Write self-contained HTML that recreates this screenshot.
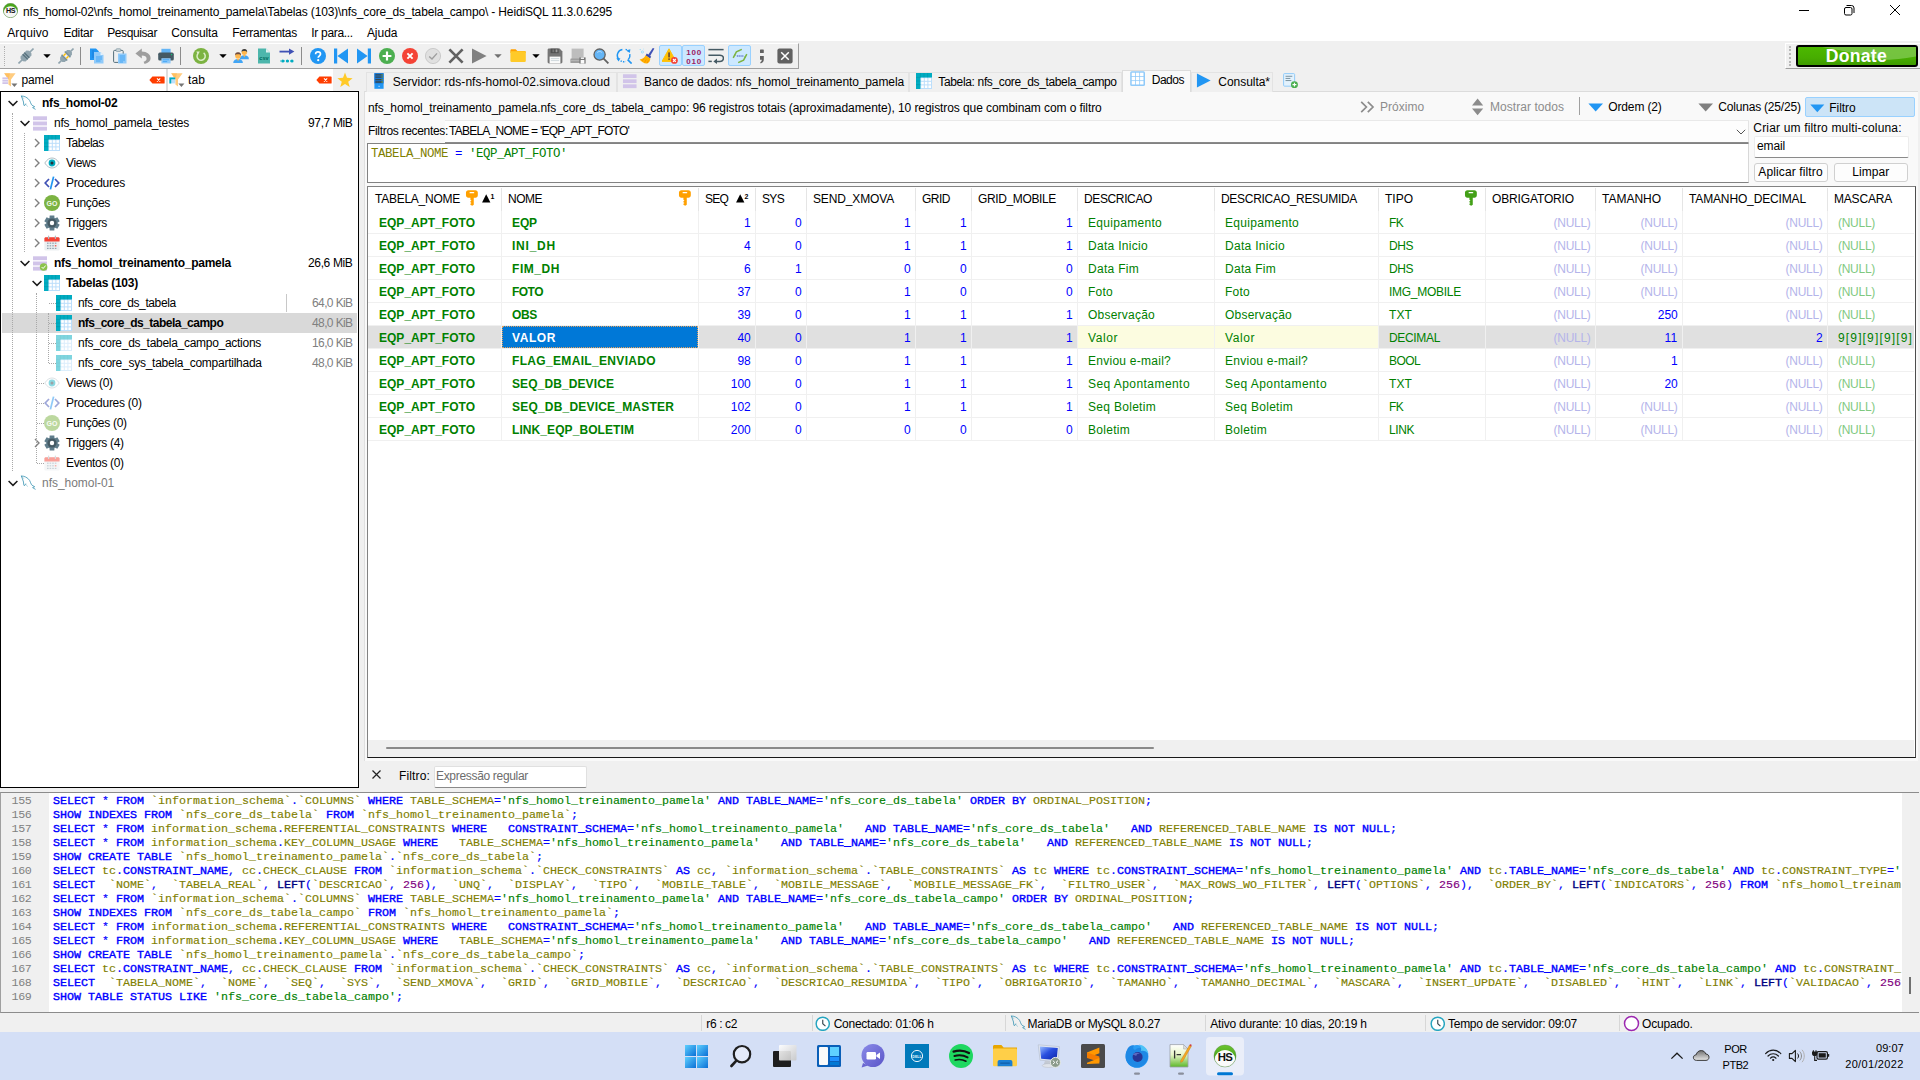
<!DOCTYPE html>
<html><head><meta charset="utf-8"><title>HeidiSQL</title>
<style>
html,body{margin:0;padding:0;}
body{width:1920px;height:1080px;overflow:hidden;background:#f0f0f0;position:relative;font-family:'Liberation Sans', sans-serif;}
.b{position:absolute;}
.t{position:absolute;white-space:pre;}
</style></head><body>
<div class="b" style="left:0px;top:0px;width:1920px;height:41px;background:#ffffff;"></div>
<svg class="b" style="left:2.8px;top:3.2px;" width="15" height="15" viewBox="0 0 16 16"><clipPath id="hsc2"><circle cx="8" cy="8" r="7.7"/></clipPath><circle cx="8" cy="8" r="7.7" fill="#4aa61c"/><g clip-path="url(#hsc2)"><ellipse cx="8" cy="10" rx="7.2" ry="6.6" fill="#f6f6f6"/></g><circle cx="8" cy="8" r="7.7" fill="none" stroke="#5a8a4a" stroke-width=".5"/><text x="8" y="11" font-family="Liberation Sans, sans-serif" font-size="7.6" font-weight="700" fill="#111" text-anchor="middle" letter-spacing="-.4">HS</text></svg>
<svg class="b" style="left:1795px;top:0px;" width="120" height="22" viewBox="0 0 120 22"><path d="M4 10.5h10" stroke="#000" stroke-width="1" fill="none"/><rect x="49.5" y="7.5" width="7.5" height="7.5" rx="1.5" stroke="#000" stroke-width="1" fill="none"/><path d="M51.5 5.5 H56.5 Q59 5.5 59 8 V13" stroke="#000" stroke-width="1" fill="none"/><path d="M95 5l10 10M105 5l-10 10" stroke="#000" stroke-width="1" fill="none"/></svg>
<div class="b" style="left:0px;top:41px;width:1920px;height:29px;background:#f0f0f0;"></div>
<div class="b" style="left:0px;top:68px;width:799px;height:1px;background:#a0a0a0;"></div>
<div class="b" style="left:0px;top:43px;width:799px;height:26px;background:#f0f0f0;border-right:1px solid #a0a0a0;border-bottom:1px solid #a0a0a0;border-top:1px solid #fff;box-sizing:border-box;"></div>
<div class="b" style="left:4px;top:46px;width:1px;height:20px;border-left:1px dotted #b0b0b0;"></div>
<svg class="b" style="left:18px;top:48px;" width="16" height="16" viewBox="0 0 16 16"><g transform="rotate(-45 8 8)"><rect x="-2.6" y="7.2" width="6" height="1.6" fill="#90a4ae"/><rect x="12.6" y="7.2" width="6" height="1.6" fill="#90a4ae"/><path d="M2 6.4 L3.8 4.4 H12.2 L14 6.4 V9.6 L12.2 11.6 H3.8 L2 9.6Z" fill="#90a4ae"/><rect x="6.3" y="4.4" width="1.2" height="7.2" fill="#546e7a"/><rect x="8.5" y="4.4" width="1.2" height="7.2" fill="#546e7a"/></g></svg>
<svg class="b" style="left:58px;top:48px;" width="16" height="16" viewBox="0 0 16 16"><g transform="rotate(-45 8 8)"><rect x="-2.6" y="7.2" width="6" height="1.6" fill="#90a4ae"/><rect x="12.6" y="7.2" width="6" height="1.6" fill="#90a4ae"/><path d="M1.2 6.4 L3 4.6 H6.2 V11.4 H3 L1.2 9.6Z" fill="#90a4ae"/><rect x="5" y="4" width="1.5" height="8" fill="#78909c"/><path d="M14.8 6.4 L13 4.6 H9.8 V11.4 H13 L14.8 9.6Z" fill="#90a4ae"/><rect x="9.5" y="4" width="1.5" height="8" fill="#78909c"/><rect x="6.5" y="5.3" width="3" height="1.5" fill="#ffc107"/><rect x="6.5" y="9.2" width="3" height="1.5" fill="#ffc107"/></g></svg>
<svg class="b" style="left:89px;top:48px;" width="16" height="16" viewBox="0 0 16 16"><path d="M1 0.5h6l3 3V12H1z" fill="#2196f3"/><path d="M3 3h2M3 5h2M3 7h2M3 9h2" stroke="#1976d2" stroke-width=".8"/><path d="M5 4h6.5l3 3V15.5H5z" fill="#90caf9"/><path d="M11.5 4v3h3z" fill="#e3f2fd"/><path d="M7 9h6M7 11h6M7 13h4.5" stroke="#42a5f5" stroke-width="1"/></svg>
<svg class="b" style="left:112px;top:48px;" width="16" height="16" viewBox="0 0 16 16"><rect x="1.6" y="2.4" width="9.6" height="12" rx="1" fill="#eceff1" stroke="#546e7a" stroke-width="1"/><rect x="4" y="0.8" width="4.8" height="2.6" rx=".8" fill="#cfd8dc" stroke="#78909c" stroke-width=".7"/><rect x="6" y="5.5" width="8.5" height="10" fill="#90caf9"/><path d="M7.6 8h5.4M7.6 10h5.4M7.6 12h5.4M7.6 14h3.4" stroke="#42a5f5" stroke-width="1"/></svg>
<svg class="b" style="left:135px;top:48px;" width="16" height="16" viewBox="0 0 16 16"><path d="M6.8 0.6 L0.4 5.6 L6.8 10.6 V7.6 C9.8 7.6 11.6 8.8 11.6 10.8 C11.6 12.2 10.6 13.2 8.6 13.8 L9.6 16 C13.4 15 15.6 13 15.6 10.2 C15.6 6.4 12 3.8 6.8 3.6Z" fill="#9e9e9e"/></svg>
<svg class="b" style="left:158px;top:48px;" width="16" height="16" viewBox="0 0 16 16"><rect x="3.4" y="0.8" width="9.2" height="4.4" fill="#64b5f6"/><rect x="0.2" y="4.6" width="15.6" height="8" rx="1.6" fill="#455a64"/><circle cx="13.6" cy="6.6" r=".6" fill="#00e676"/><rect x="3.4" y="9.4" width="9.2" height="6" fill="#90caf9"/><rect x="3" y="9.2" width="10" height="1" fill="#37474f"/><path d="M4.8 11.8h6.4M4.8 13.6h4.4" stroke="#42a5f5" stroke-width=".9"/></svg>
<svg class="b" style="left:193px;top:48px;" width="16" height="16" viewBox="0 0 16 16"><circle cx="8" cy="8" r="8" fill="#7cb342"/><path d="M5.2 5.3 A4.1 4.1 0 1 0 10.6 4.9" fill="none" stroke="#dcedc8" stroke-width="1.5"/><path d="M3.3 3.4 L6.9 3.6 L4.9 6.6Z" fill="#dcedc8"/></svg>
<svg class="b" style="left:233px;top:48px;" width="16" height="16" viewBox="0 0 16 16"><g transform="translate(6.6 0.4) scale(1.08)"><path d="M0.2 10 C0.2 7.4 2 6.4 4.4 6.4 C6.8 6.4 8.6 7.4 8.6 10Z" fill="#42a5f5"/><path d="M3.2 6.2 L4.4 8.2 L5.6 6.2Z" fill="#ffb74d"/><circle cx="4.4" cy="3.6" r="2.5" fill="#ffb74d"/><path d="M1.8 3.4 C1.6 1.2 3 0.4 4.6 0.6 C6.4 0.6 7.2 1.8 7 3.6 C6.4 2.4 5 2.2 4 2.4 C3 2.4 2.2 2.6 1.8 3.4Z" fill="#424242"/></g><g transform="translate(0 3.6) scale(1.15)"><path d="M0.2 10 C0.2 7.4 2 6.4 4.4 6.4 C6.8 6.4 8.6 7.4 8.6 10Z" fill="#42a5f5"/><path d="M3.2 6.2 L4.4 8.2 L5.6 6.2Z" fill="#ffb74d"/><circle cx="4.4" cy="3.6" r="2.5" fill="#ffb74d"/><path d="M1.8 3.4 C1.6 1.2 3 0.4 4.6 0.6 C6.4 0.6 7.2 1.8 7 3.6 C6.4 2.4 5 2.2 4 2.4 C3 2.4 2.2 2.6 1.8 3.4Z" fill="#6d4c41"/></g></svg>
<svg class="b" style="left:256px;top:48px;" width="16" height="16" viewBox="0 0 16 16"><path d="M2 0.5h8l4 4V15.5H2z" fill="#4db6ac"/><path d="M10 0.5v4h4z" fill="#e0f2f1"/><text x="8" y="11.6" font-family="Liberation Sans, sans-serif" font-size="5.6" font-weight="700" fill="#00695c" text-anchor="middle">csv</text></svg>
<svg class="b" style="left:279px;top:48px;" width="16" height="16" viewBox="0 0 16 16"><path d="M0.5 3.6h10.5" stroke="#3f51b5" stroke-width="1.8"/><path d="M10 0.4 L15.4 3.6 L10 6.8Z" fill="#3f51b5"/><path d="M1 13h14" stroke="#00acc1" stroke-width=".8" stroke-dasharray="1 1"/><circle cx="3.8" cy="13" r="1.6" fill="#00acc1"/><circle cx="8.4" cy="13" r="1.6" fill="#00acc1"/><circle cx="13" cy="13" r="1.6" fill="#00acc1"/></svg>
<svg class="b" style="left:310px;top:48px;" width="16" height="16" viewBox="0 0 16 16"><circle cx="8" cy="8" r="8" fill="#2196f3"/><path d="M5.6 6.2 C5.6 4.6 6.6 3.8 8 3.8 C9.5 3.8 10.5 4.7 10.5 6 C10.5 7.8 8.2 7.8 8.2 9.8" fill="none" stroke="#fff" stroke-width="1.7"/><circle cx="8.2" cy="12.2" r="1.1" fill="#fff"/></svg>
<svg class="b" style="left:333px;top:48px;" width="16" height="16" viewBox="0 0 16 16"><rect x="1" y="0.5" width="3.2" height="15" fill="#2196f3"/><path d="M15 0.5V15.5L4.4 8z" fill="#2196f3"/></svg>
<svg class="b" style="left:356px;top:48px;" width="16" height="16" viewBox="0 0 16 16"><rect x="11.8" y="0.5" width="3.2" height="15" fill="#2196f3"/><path d="M1 0.5V15.5L11.6 8z" fill="#2196f3"/></svg>
<svg class="b" style="left:379px;top:48px;" width="16" height="16" viewBox="0 0 16 16"><circle cx="8" cy="8" r="8" fill="#4caf50"/><path d="M8 3.6v8.8M3.6 8h8.8" stroke="#fff" stroke-width="2.2"/></svg>
<svg class="b" style="left:402px;top:48px;" width="16" height="16" viewBox="0 0 16 16"><circle cx="8" cy="8" r="8" fill="#f44336"/><path d="M5.4 5.4l5.2 5.2M10.6 5.4l-5.2 5.2" stroke="#fff" stroke-width="1.9"/></svg>
<svg class="b" style="left:425px;top:48px;" width="16" height="16" viewBox="0 0 16 16"><circle cx="8" cy="8" r="7.6" fill="#e0e0e0" stroke="#bdbdbd" stroke-width=".7"/><path d="M4.2 8.4l2.8 2.6 5-5.6" fill="none" stroke="#9e9e9e" stroke-width="1.4"/></svg>
<svg class="b" style="left:448px;top:48px;" width="16" height="16" viewBox="0 0 16 16"><path d="M1.4 1.4l13.2 13.2M14.6 1.4L1.4 14.6" stroke="#616161" stroke-width="2.7"/></svg>
<svg class="b" style="left:471px;top:48px;" width="16" height="16" viewBox="0 0 16 16"><path d="M1 0.6V15.4L15.6 8z" fill="#808080"/></svg>
<svg class="b" style="left:510px;top:48px;" width="16" height="16" viewBox="0 0 16 16"><path d="M0.4 2.4 C0.4 1.6 1 1.2 1.6 1.2 H5.6 L7.4 3 H14.4 C15.2 3 15.8 3.6 15.8 4.2 V5H0.4z" fill="#ffa000"/><rect x="0.4" y="3.2" width="15.4" height="10.8" rx="1.2" fill="#ffca28"/></svg>
<svg class="b" style="left:547px;top:48px;" width="16" height="16" viewBox="0 0 16 16"><path d="M0.6 2 C0.6 1.2 1.2 0.6 2 0.6 H12.6 L15.4 3.4 V14 C15.4 14.8 14.8 15.4 14 15.4 H2 C1.2 15.4 0.6 14.8 0.6 14z" fill="#757575"/><rect x="3.6" y="0.6" width="8" height="4.6" fill="#505050"/><rect x="5.4" y="1.4" width="1.8" height="2.8" fill="#757575"/><rect x="8.6" y="1.4" width="1.8" height="2.8" fill="#9e9e9e"/><rect x="2.6" y="8.6" width="10.8" height="6.8" fill="#fafafa"/><path d="M3.8 10.6h8.4M3.8 12.6h8.4" stroke="#cfd8dc" stroke-width="1"/></svg>
<svg class="b" style="left:570px;top:48px;" width="16" height="16" viewBox="0 0 16 16"><rect x="1.6" y="0.6" width="12" height="10.6" fill="#bdbdbd"/><rect x="0.4" y="10.4" width="11" height="4.6" rx=".6" fill="#9e9e9e"/><path d="M0.8 12.6h9" stroke="#bdbdbd" stroke-width=".8"/><rect x="9.4" y="9.4" width="6.2" height="6.2" fill="#757575"/><rect x="10.6" y="12" width="3.8" height="3.6" fill="#fafafa"/><rect x="10.8" y="9.4" width="3.2" height="1.6" fill="#eeeeee"/></svg>
<svg class="b" style="left:593px;top:48px;" width="16" height="16" viewBox="0 0 16 16"><path d="M10.4 10.4l5 5" stroke="#616161" stroke-width="1.8"/><circle cx="6.6" cy="6.6" r="5.6" fill="#64b5f6" stroke="#616161" stroke-width="1.3"/><path d="M4.2 4.6 C5 3.4 7.4 3 8.8 4.4" fill="none" stroke="#bbdefb" stroke-width="1"/></svg>
<svg class="b" style="left:616px;top:48px;" width="16" height="16" viewBox="0 0 16 16"><path d="M6.4 1.6 A6 6 0 0 0 2.6 11.2" fill="none" stroke="#2196f3" stroke-width="1.5"/><path d="M9.6 1.4 A6 6 0 0 1 13 4.2" fill="none" stroke="#2196f3" stroke-width="1.5" stroke-dasharray="1.4 1.1"/><path d="M13.8 6.2 A6 6 0 0 1 12.4 11.4" fill="none" stroke="#2196f3" stroke-width="1.5"/><path d="M4.6 12.8 A6 6 0 0 0 9.6 13.4" fill="none" stroke="#2196f3" stroke-width="1.5" stroke-dasharray="1.4 1.1"/><path d="M0.4 10.2 L4.4 10.2 L2.6 13.4Z" fill="#2196f3"/><path d="M10.6 2.2 L14.4 1.2 L13.8 5Z" fill="#2196f3"/><path d="M11.6 11.6l4 4" stroke="#2196f3" stroke-width="1.6"/></svg>
<svg class="b" style="left:639px;top:48px;" width="16" height="16" viewBox="0 0 16 16"><circle cx="3.4" cy="4" r="1.1" fill="none" stroke="#81d4fa" stroke-width=".7"/><circle cx="1.2" cy="1.6" r=".6" fill="#81d4fa"/><circle cx="4.6" cy="1" r=".5" fill="#b3e5fc"/><path d="M15.4 0.4 L11 8.2 L9 7 L13.8 0Z" fill="#3f51b5"/><path d="M7.8 5.6 L12.2 8.8 L11 10.6 L6.6 7.4Z" fill="#3949ab"/><path d="M6.6 7.2 L11.2 10.6 C11.4 13 9.6 15.6 7.6 15.6 C4.8 15.4 2.4 13.6 0.6 11.4 C3.2 11.2 5.4 9.6 6.6 7.2Z" fill="#ffb300"/><path d="M5 10.6 L3 13M7.2 11.6 L5.6 14.4M9.4 12.4 L8.2 15" stroke="#fb8c00" stroke-width=".9"/></svg>
<svg class="b" style="left:708px;top:48px;" width="16" height="16" viewBox="0 0 16 16"><path d="M0.4 1.6h15.2" stroke="#455a64" stroke-width="1.5"/><path d="M0.4 7.2h11.4 C16.6 7.2 16.6 13.4 11.8 13.4 H8" fill="none" stroke="#455a64" stroke-width="1.5"/><path d="M0.4 13.4h3.4" stroke="#455a64" stroke-width="1.5"/><path d="M9 10.6 L5.4 13.4 L9 16Z" fill="#455a64"/></svg>
<svg class="b" style="left:754px;top:48px;" width="16" height="16" viewBox="0 0 16 16"><rect x="6" y="1.4" width="3.8" height="3.6" rx=".6" fill="#616161"/><path d="M6 8h3.8v3.6c0 2-1.1 3.4-3.1 3.8l-.5-1.1c1.1-.5 1.6-1.2 1.6-2.5H6z" fill="#616161"/></svg>
<svg class="b" style="left:777px;top:48px;" width="16" height="16" viewBox="0 0 16 16"><rect x="0.4" y="0.4" width="15.2" height="15.2" rx="2" fill="#616161"/><path d="M4.2 4.2l7.6 7.6M11.8 4.2l-7.6 7.6" stroke="#fff" stroke-width="1.5"/></svg>
<div class="b" style="left:659px;top:45px;width:23px;height:21px;background:#cce8ff;border:1px solid #99d1ff;box-sizing:border-box;border-radius:2px;"></div>
<div class="b" style="left:682px;top:45px;width:23px;height:21px;background:#cce8ff;border:1px solid #99d1ff;box-sizing:border-box;border-radius:2px;"></div>
<div class="b" style="left:728px;top:45px;width:23px;height:21px;background:#cce8ff;border:1px solid #99d1ff;box-sizing:border-box;border-radius:2px;"></div>
<svg class="b" style="left:662px;top:48px;" width="16" height="16" viewBox="0 0 16 16"><path d="M7 0.8 L14 13.4 H0z" fill="#ffc107" stroke="#ffc107" stroke-width="1" stroke-linejoin="round"/><rect x="6.3" y="4.4" width="1.5" height="5" fill="#5d4037"/><rect x="6.3" y="10.4" width="1.5" height="1.5" fill="#5d4037"/><circle cx="12.4" cy="12.4" r="3.4" fill="#f44336"/><path d="M11 11l2.8 2.8M13.8 11L11 13.8" stroke="#fff" stroke-width="1.1"/></svg>
<svg class="b" style="left:685.5px;top:48px;" width="16" height="16" viewBox="0 0 16 16"><text x="8.2" y="7" font-family="Liberation Sans, sans-serif" font-size="8" font-weight="700" fill="#9c1c64" text-anchor="middle" letter-spacing=".9">100</text><text x="8.2" y="15.6" font-family="Liberation Sans, sans-serif" font-size="8" font-weight="700" fill="#9c1c64" text-anchor="middle" letter-spacing=".9">010</text></svg>
<svg class="b" style="left:731.5px;top:48px;" width="16" height="16" viewBox="0 0 16 16"><path d="M1.2 9.8 L4.4 3.8 L9.8 1.4" fill="none" stroke="#7cb342" stroke-width="1.5" stroke-linejoin="miter"/><path d="M14.8 6.2 L11.6 12.2 L6.2 14.6" fill="none" stroke="#7cb342" stroke-width="1.5" stroke-linejoin="miter"/><path d="M2.6 6.6l1 .6M6.6 2.2l.5 1M13.4 9.4l-1-.6M9.4 13.8l-.5-1" stroke="#7cb342" stroke-width="1"/><path d="M4.8 8h6.6" stroke="#3f51b5" stroke-width="1.2" stroke-dasharray="1.3 .5"/></svg>
<svg class="b" style="left:39.4px;top:48px;" width="16" height="16" viewBox="0 0 16 16"><path d="M4.3 6.2h7.4L8 10z" fill="#000"/></svg>
<svg class="b" style="left:214.5px;top:48px;" width="16" height="16" viewBox="0 0 16 16"><path d="M4.3 6.2h7.4L8 10z" fill="#000"/></svg>
<svg class="b" style="left:490.4px;top:48px;" width="16" height="16" viewBox="0 0 16 16"><path d="M4.3 6.2h7.4L8 10z" fill="#707070"/></svg>
<svg class="b" style="left:528.4px;top:48px;" width="16" height="16" viewBox="0 0 16 16"><path d="M4.3 6.2h7.4L8 10z" fill="#000"/></svg>
<div class="b" style="left:80px;top:47px;width:1px;height:18px;background:#8c8c8c;"></div>
<div class="b" style="left:180px;top:47px;width:1px;height:18px;background:#8c8c8c;"></div>
<div class="b" style="left:301px;top:47px;width:1px;height:18px;background:#8c8c8c;"></div>
<div class="b" style="left:1785px;top:43px;width:135px;height:26px;background:#f0f0f0;border-left:1px solid #fff;border-top:1px solid #fff;border-bottom:1px solid #a0a0a0;box-sizing:border-box;"></div>
<div class="b" style="left:1789px;top:46px;width:2px;height:20px;border-left:2px dotted #b8b8b8;"></div>
<div class="b" style="left:1796px;top:45px;width:122px;height:22px;background:linear-gradient(180deg,#4cb800 0%,#47ad00 60%,#3f9c00 100%);border:2px solid #000;box-sizing:border-box;border-radius:3px;"></div>
<svg class="b" style="left:1798px;top:47px;" width="118" height="18" viewBox="0 0 118 18"><path d="M24 0 H118 V9.4 C100 12.6 90 13 84 12.4 C64 9 44 3 24 0Z" fill="#7cc74a" opacity=".85"/></svg>
<div class="b" style="left:0px;top:69px;width:333px;height:22px;background:#ffffff;"></div>
<div class="b" style="left:166px;top:69px;width:2px;height:22px;background:#dedede;"></div>
<div class="b" style="left:0px;top:91px;width:359px;height:697px;background:#ffffff;border:1px solid #000;box-sizing:border-box;"></div>
<div class="b" style="left:2px;top:313px;width:355px;height:20px;background:#d9d9d9;"></div>
<div class="b" style="left:286px;top:294px;width:1px;height:18px;background:#c8c8c8;"></div>
<svg class="b" style="left:1.5px;top:72px;" width="16" height="16" viewBox="0 0 16 16"><path d="M2.2 1.2 H13.6 L9 7.4 V14.4 L6.4 12.4 V7.4Z" fill="#ffcc80"/><path d="M6.4 7.4 L2.2 1.2 H8z" fill="#ffb74d" opacity=".6"/><rect x="0.4" y="5.4" width="5.6" height="1.8" fill="#d1c4e9"/><rect x="0.4" y="7.8" width="5.6" height="1.8" fill="#d1c4e9"/><rect x="0.4" y="10.2" width="5.6" height="1.8" fill="#d1c4e9"/><path d="M9.4 11.6h6L12.4 15z" fill="#757575"/></svg>
<svg class="b" style="left:169px;top:72px;" width="16" height="16" viewBox="0 0 16 16"><path d="M2.2 1.2 H13.6 L9 7.4 V14.4 L6.4 12.4 V7.4Z" fill="#ffcc80"/><path d="M6.4 7.4 L2.2 1.2 H8z" fill="#ffb74d" opacity=".6"/><rect x="0.4" y="5.4" width="5.8" height="6" fill="#bbdefb"/><path d="M0.4 5.4h5.8v1.8H2.2V11.4H0.4z" fill="#00acc1"/><path d="M9.4 11.6h6L12.4 15z" fill="#757575"/></svg>
<svg class="b" style="left:149px;top:72px;" width="16" height="16" viewBox="0 0 16 16"><path d="M0.4 8 L3.4 4.4 H15 C15.4 4.4 15.6 4.6 15.6 5 V11 C15.6 11.4 15.4 11.6 15 11.6 H3.4Z" fill="#ff3d00"/><path d="M8 6.4l3.2 3.2M11.2 6.4L8 9.6" stroke="#fff" stroke-width="1.1"/></svg>
<svg class="b" style="left:316px;top:72px;" width="16" height="16" viewBox="0 0 16 16"><path d="M0.4 8 L3.4 4.4 H15 C15.4 4.4 15.6 4.6 15.6 5 V11 C15.6 11.4 15.4 11.6 15 11.6 H3.4Z" fill="#ff3d00"/><path d="M8 6.4l3.2 3.2M11.2 6.4L8 9.6" stroke="#fff" stroke-width="1.1"/></svg>
<svg class="b" style="left:337px;top:72.4px;" width="16" height="16" viewBox="0 0 16 16"><polygon points="8.00,0.60 10.00,5.85 15.61,6.13 11.23,9.65 12.70,15.07 8.00,12.00 3.30,15.07 4.77,9.65 0.39,6.13 6.00,5.85" fill="#ffca28"/></svg>
<svg class="b" style="left:4.5px;top:95px;" width="16" height="16" viewBox="0 0 16 16"><path d="M3.6 6 L8 10.4 L12.4 6" fill="none" stroke="#1a1a1a" stroke-width="1.5"/></svg>
<svg class="b" style="left:20px;top:95px;" width="16" height="16" viewBox="0 0 16 16"><g opacity="1" fill="none" stroke="#4298b6" stroke-width=".85" stroke-linecap="round" stroke-linejoin="round"><path d="M1.5 1 C4 0.9 7.6 2.4 9.6 5.4 C10.7 7.1 10.6 8.6 11.5 9.7 C12.4 10.7 13.6 11.1 14.7 11.7 L12.6 12.6 L15.2 14.2"/><path d="M1.4 1.2 C2 3 3 5 3.5 7 C3.7 8.4 3.3 9.6 4.4 10.8 L5.6 9"/><path d="M5.6 9 L7.4 11.4" opacity=".45"/><path d="M2 1.6 L3.6 3.4" opacity=".5"/></g></svg>
<svg class="b" style="left:16.5px;top:115px;" width="16" height="16" viewBox="0 0 16 16"><path d="M3.6 6 L8 10.4 L12.4 6" fill="none" stroke="#1a1a1a" stroke-width="1.5"/></svg>
<svg class="b" style="left:32px;top:115px;" width="16" height="16" viewBox="0 0 16 16"><g opacity="1"><rect x="1" y="1.3" width="14" height="3.9" fill="#d1c4e9"/><rect x="1" y="6.5" width="14" height="3.9" fill="#d1c4e9"/><rect x="1" y="11.7" width="14" height="3.9" fill="#d1c4e9"/></g></svg>
<svg class="b" style="left:28.5px;top:135px;" width="16" height="16" viewBox="0 0 16 16"><path d="M6 4 L10 8 L6 12" fill="none" stroke="#808080" stroke-width="1.4"/></svg>
<svg class="b" style="left:44px;top:135px;" width="16" height="16" viewBox="0 0 16 16"><g opacity="1"><rect x="0" y="0" width="16" height="16" fill="#bbdefb"/><rect x="5.2" y="5.2" width="2.6" height="2.6" fill="#fff"/><rect x="5.2" y="8.8" width="2.6" height="2.6" fill="#fff"/><rect x="5.2" y="12.4" width="2.6" height="2.6" fill="#fff"/><rect x="8.8" y="5.2" width="2.6" height="2.6" fill="#fff"/><rect x="8.8" y="8.8" width="2.6" height="2.6" fill="#fff"/><rect x="8.8" y="12.4" width="2.6" height="2.6" fill="#fff"/><rect x="12.4" y="5.2" width="2.6" height="2.6" fill="#fff"/><rect x="12.4" y="8.8" width="2.6" height="2.6" fill="#fff"/><rect x="12.4" y="12.4" width="2.6" height="2.6" fill="#fff"/><path d="M0 0h16v4.4H4.4V16H0z" fill="#00acc1"/><path d="M0 4.4h4.4M0 8h4.4M0 11.6h4.4M4.4 0v4.4M8 0v4.4M11.6 0v4.4" stroke="#0097a7" stroke-width=".6"/></g></svg>
<svg class="b" style="left:28.5px;top:155px;" width="16" height="16" viewBox="0 0 16 16"><path d="M6 4 L10 8 L6 12" fill="none" stroke="#808080" stroke-width="1.4"/></svg>
<svg class="b" style="left:44px;top:155px;" width="16" height="16" viewBox="0 0 16 16"><g opacity="1"><path d="M0.8 8 C3 4.4 5.6 3 8 3 C10.4 3 13 4.4 15.2 8 C13 11.6 10.4 13 8 13 C5.6 13 3 11.6 0.8 8Z" fill="#fff" stroke="#b0bec5" stroke-width="1"/><circle cx="8" cy="8" r="3.4" fill="#00acc1"/><circle cx="8" cy="8" r="1.5" fill="#263238"/></g></svg>
<svg class="b" style="left:28.5px;top:175px;" width="16" height="16" viewBox="0 0 16 16"><path d="M6 4 L10 8 L6 12" fill="none" stroke="#808080" stroke-width="1.4"/></svg>
<svg class="b" style="left:44px;top:175px;" width="16" height="16" viewBox="0 0 16 16"><g opacity="1" fill="none" stroke-width="1.7"><path d="M5 4 L1.2 8 L5 12" stroke="#3f51b5"/><path d="M11 4 L14.8 8 L11 12" stroke="#3f51b5"/><path d="M9.6 1.6 L6.4 14.4" stroke="#2196f3"/></g></svg>
<svg class="b" style="left:28.5px;top:195px;" width="16" height="16" viewBox="0 0 16 16"><path d="M6 4 L10 8 L6 12" fill="none" stroke="#808080" stroke-width="1.4"/></svg>
<svg class="b" style="left:44px;top:195px;" width="16" height="16" viewBox="0 0 16 16"><g opacity="1"><circle cx="8" cy="8" r="8" fill="#7cb342"/><text x="8" y="10.6" font-family="Liberation Sans, sans-serif" font-size="7" font-weight="700" fill="#f1f8e9" text-anchor="middle">GO</text></g></svg>
<svg class="b" style="left:28.5px;top:215px;" width="16" height="16" viewBox="0 0 16 16"><path d="M6 4 L10 8 L6 12" fill="none" stroke="#808080" stroke-width="1.4"/></svg>
<svg class="b" style="left:44px;top:215px;" width="16" height="16" viewBox="0 0 16 16"><g opacity="1"><polygon points="5.67,0.45 10.33,0.45 10.49,2.98 11.10,3.34 13.37,2.20 15.70,6.25 13.59,7.64 13.59,8.36 15.70,9.75 13.37,13.80 11.10,12.66 10.49,13.02 10.33,15.55 5.67,15.55 5.51,13.02 4.90,12.66 2.63,13.80 0.30,9.75 2.41,8.36 2.41,7.64 0.30,6.25 2.63,2.20 4.90,3.34 5.51,2.98" fill="#607d8b"/><circle cx="8" cy="8" r="4.6" fill="#455a64"/><circle cx="8" cy="8" r="2.2" fill="#fff"/></g></svg>
<svg class="b" style="left:28.5px;top:235px;" width="16" height="16" viewBox="0 0 16 16"><path d="M6 4 L10 8 L6 12" fill="none" stroke="#808080" stroke-width="1.4"/></svg>
<svg class="b" style="left:44px;top:235px;" width="16" height="16" viewBox="0 0 16 16"><g opacity="1"><rect x="0.4" y="2.2" width="15.2" height="13.4" rx="1.4" fill="#eceff1"/><path d="M0.4 6.4V3.6C0.4 2.8 1 2.2 1.8 2.2H14.2C15 2.2 15.6 2.8 15.6 3.6V6.4z" fill="#f44336"/><rect x="4" y="0.4" width="1.2" height="3.6" rx=".6" fill="#b0bec5"/><rect x="10.8" y="0.4" width="1.2" height="3.6" rx=".6" fill="#b0bec5"/><rect x="3.0" y="7.6" width="1.6" height="1.2" fill="#90a4ae"/><rect x="3.0" y="10.2" width="1.6" height="1.2" fill="#90a4ae"/><rect x="3.0" y="12.8" width="1.6" height="1.2" fill="#90a4ae"/><rect x="5.6" y="7.6" width="1.6" height="1.2" fill="#90a4ae"/><rect x="5.6" y="10.2" width="1.6" height="1.2" fill="#90a4ae"/><rect x="5.6" y="12.8" width="1.6" height="1.2" fill="#90a4ae"/><rect x="8.2" y="7.6" width="1.6" height="1.2" fill="#90a4ae"/><rect x="8.2" y="10.2" width="1.6" height="1.2" fill="#90a4ae"/><rect x="8.2" y="12.8" width="1.6" height="1.2" fill="#90a4ae"/><rect x="10.8" y="7.6" width="1.6" height="1.2" fill="#90a4ae"/><rect x="10.8" y="10.2" width="1.6" height="1.2" fill="#f44336"/><rect x="10.8" y="12.8" width="1.6" height="1.2" fill="#90a4ae"/></g></svg>
<svg class="b" style="left:16.5px;top:255px;" width="16" height="16" viewBox="0 0 16 16"><path d="M3.6 6 L8 10.4 L12.4 6" fill="none" stroke="#1a1a1a" stroke-width="1.5"/></svg>
<svg class="b" style="left:32px;top:255px;" width="16" height="16" viewBox="0 0 16 16"><g opacity="1"><rect x="1" y="1.3" width="14" height="3.9" fill="#d1c4e9"/><rect x="1" y="6.5" width="14" height="3.9" fill="#d1c4e9"/><rect x="1" y="11.7" width="14" height="3.9" fill="#d1c4e9"/></g><circle cx="11.6" cy="12" r="3.8" fill="#8bc34a"/><path d="M9.6 12l1.5 1.5 2.6-3" fill="none" stroke="#fff" stroke-width="1"/></svg>
<svg class="b" style="left:28.5px;top:275px;" width="16" height="16" viewBox="0 0 16 16"><path d="M3.6 6 L8 10.4 L12.4 6" fill="none" stroke="#1a1a1a" stroke-width="1.5"/></svg>
<svg class="b" style="left:44px;top:275px;" width="16" height="16" viewBox="0 0 16 16"><g opacity="1"><rect x="0" y="0" width="16" height="16" fill="#bbdefb"/><rect x="5.2" y="5.2" width="2.6" height="2.6" fill="#fff"/><rect x="5.2" y="8.8" width="2.6" height="2.6" fill="#fff"/><rect x="5.2" y="12.4" width="2.6" height="2.6" fill="#fff"/><rect x="8.8" y="5.2" width="2.6" height="2.6" fill="#fff"/><rect x="8.8" y="8.8" width="2.6" height="2.6" fill="#fff"/><rect x="8.8" y="12.4" width="2.6" height="2.6" fill="#fff"/><rect x="12.4" y="5.2" width="2.6" height="2.6" fill="#fff"/><rect x="12.4" y="8.8" width="2.6" height="2.6" fill="#fff"/><rect x="12.4" y="12.4" width="2.6" height="2.6" fill="#fff"/><path d="M0 0h16v4.4H4.4V16H0z" fill="#00acc1"/><path d="M0 4.4h4.4M0 8h4.4M0 11.6h4.4M4.4 0v4.4M8 0v4.4M11.6 0v4.4" stroke="#0097a7" stroke-width=".6"/></g></svg>
<svg class="b" style="left:56px;top:295px;" width="16" height="16" viewBox="0 0 16 16"><g opacity="1"><rect x="0" y="0" width="16" height="16" fill="#bbdefb"/><rect x="5.2" y="5.2" width="2.6" height="2.6" fill="#fff"/><rect x="5.2" y="8.8" width="2.6" height="2.6" fill="#fff"/><rect x="5.2" y="12.4" width="2.6" height="2.6" fill="#fff"/><rect x="8.8" y="5.2" width="2.6" height="2.6" fill="#fff"/><rect x="8.8" y="8.8" width="2.6" height="2.6" fill="#fff"/><rect x="8.8" y="12.4" width="2.6" height="2.6" fill="#fff"/><rect x="12.4" y="5.2" width="2.6" height="2.6" fill="#fff"/><rect x="12.4" y="8.8" width="2.6" height="2.6" fill="#fff"/><rect x="12.4" y="12.4" width="2.6" height="2.6" fill="#fff"/><path d="M0 0h16v4.4H4.4V16H0z" fill="#00acc1"/><path d="M0 4.4h4.4M0 8h4.4M0 11.6h4.4M4.4 0v4.4M8 0v4.4M11.6 0v4.4" stroke="#0097a7" stroke-width=".6"/></g></svg>
<svg class="b" style="left:56px;top:315px;" width="16" height="16" viewBox="0 0 16 16"><g opacity="1"><rect x="0" y="0" width="16" height="16" fill="#bbdefb"/><rect x="5.2" y="5.2" width="2.6" height="2.6" fill="#fff"/><rect x="5.2" y="8.8" width="2.6" height="2.6" fill="#fff"/><rect x="5.2" y="12.4" width="2.6" height="2.6" fill="#fff"/><rect x="8.8" y="5.2" width="2.6" height="2.6" fill="#fff"/><rect x="8.8" y="8.8" width="2.6" height="2.6" fill="#fff"/><rect x="8.8" y="12.4" width="2.6" height="2.6" fill="#fff"/><rect x="12.4" y="5.2" width="2.6" height="2.6" fill="#fff"/><rect x="12.4" y="8.8" width="2.6" height="2.6" fill="#fff"/><rect x="12.4" y="12.4" width="2.6" height="2.6" fill="#fff"/><path d="M0 0h16v4.4H4.4V16H0z" fill="#00acc1"/><path d="M0 4.4h4.4M0 8h4.4M0 11.6h4.4M4.4 0v4.4M8 0v4.4M11.6 0v4.4" stroke="#0097a7" stroke-width=".6"/></g></svg>
<svg class="b" style="left:56px;top:335px;" width="16" height="16" viewBox="0 0 16 16"><g opacity="0.5"><rect x="0" y="0" width="16" height="16" fill="#bbdefb"/><rect x="5.2" y="5.2" width="2.6" height="2.6" fill="#fff"/><rect x="5.2" y="8.8" width="2.6" height="2.6" fill="#fff"/><rect x="5.2" y="12.4" width="2.6" height="2.6" fill="#fff"/><rect x="8.8" y="5.2" width="2.6" height="2.6" fill="#fff"/><rect x="8.8" y="8.8" width="2.6" height="2.6" fill="#fff"/><rect x="8.8" y="12.4" width="2.6" height="2.6" fill="#fff"/><rect x="12.4" y="5.2" width="2.6" height="2.6" fill="#fff"/><rect x="12.4" y="8.8" width="2.6" height="2.6" fill="#fff"/><rect x="12.4" y="12.4" width="2.6" height="2.6" fill="#fff"/><path d="M0 0h16v4.4H4.4V16H0z" fill="#00acc1"/><path d="M0 4.4h4.4M0 8h4.4M0 11.6h4.4M4.4 0v4.4M8 0v4.4M11.6 0v4.4" stroke="#0097a7" stroke-width=".6"/></g></svg>
<svg class="b" style="left:56px;top:355px;" width="16" height="16" viewBox="0 0 16 16"><g opacity="0.5"><rect x="0" y="0" width="16" height="16" fill="#bbdefb"/><rect x="5.2" y="5.2" width="2.6" height="2.6" fill="#fff"/><rect x="5.2" y="8.8" width="2.6" height="2.6" fill="#fff"/><rect x="5.2" y="12.4" width="2.6" height="2.6" fill="#fff"/><rect x="8.8" y="5.2" width="2.6" height="2.6" fill="#fff"/><rect x="8.8" y="8.8" width="2.6" height="2.6" fill="#fff"/><rect x="8.8" y="12.4" width="2.6" height="2.6" fill="#fff"/><rect x="12.4" y="5.2" width="2.6" height="2.6" fill="#fff"/><rect x="12.4" y="8.8" width="2.6" height="2.6" fill="#fff"/><rect x="12.4" y="12.4" width="2.6" height="2.6" fill="#fff"/><path d="M0 0h16v4.4H4.4V16H0z" fill="#00acc1"/><path d="M0 4.4h4.4M0 8h4.4M0 11.6h4.4M4.4 0v4.4M8 0v4.4M11.6 0v4.4" stroke="#0097a7" stroke-width=".6"/></g></svg>
<svg class="b" style="left:44px;top:375px;" width="16" height="16" viewBox="0 0 16 16"><g opacity="0.45"><path d="M0.8 8 C3 4.4 5.6 3 8 3 C10.4 3 13 4.4 15.2 8 C13 11.6 10.4 13 8 13 C5.6 13 3 11.6 0.8 8Z" fill="#fff" stroke="#b0bec5" stroke-width="1"/><circle cx="8" cy="8" r="3.4" fill="#00acc1"/><circle cx="8" cy="8" r="1.5" fill="#263238"/></g></svg>
<svg class="b" style="left:44px;top:395px;" width="16" height="16" viewBox="0 0 16 16"><g opacity="0.5" fill="none" stroke-width="1.7"><path d="M5 4 L1.2 8 L5 12" stroke="#3f51b5"/><path d="M11 4 L14.8 8 L11 12" stroke="#3f51b5"/><path d="M9.6 1.6 L6.4 14.4" stroke="#2196f3"/></g></svg>
<svg class="b" style="left:44px;top:415px;" width="16" height="16" viewBox="0 0 16 16"><g opacity="0.5"><circle cx="8" cy="8" r="8" fill="#7cb342"/><text x="8" y="10.6" font-family="Liberation Sans, sans-serif" font-size="7" font-weight="700" fill="#f1f8e9" text-anchor="middle">GO</text></g></svg>
<svg class="b" style="left:28.5px;top:435px;" width="16" height="16" viewBox="0 0 16 16"><path d="M6 4 L10 8 L6 12" fill="none" stroke="#808080" stroke-width="1.4"/></svg>
<svg class="b" style="left:44px;top:435px;" width="16" height="16" viewBox="0 0 16 16"><g opacity="1"><polygon points="5.67,0.45 10.33,0.45 10.49,2.98 11.10,3.34 13.37,2.20 15.70,6.25 13.59,7.64 13.59,8.36 15.70,9.75 13.37,13.80 11.10,12.66 10.49,13.02 10.33,15.55 5.67,15.55 5.51,13.02 4.90,12.66 2.63,13.80 0.30,9.75 2.41,8.36 2.41,7.64 0.30,6.25 2.63,2.20 4.90,3.34 5.51,2.98" fill="#607d8b"/><circle cx="8" cy="8" r="4.6" fill="#455a64"/><circle cx="8" cy="8" r="2.2" fill="#fff"/></g></svg>
<svg class="b" style="left:44px;top:455px;" width="16" height="16" viewBox="0 0 16 16"><g opacity="0.5"><rect x="0.4" y="2.2" width="15.2" height="13.4" rx="1.4" fill="#eceff1"/><path d="M0.4 6.4V3.6C0.4 2.8 1 2.2 1.8 2.2H14.2C15 2.2 15.6 2.8 15.6 3.6V6.4z" fill="#f44336"/><rect x="4" y="0.4" width="1.2" height="3.6" rx=".6" fill="#b0bec5"/><rect x="10.8" y="0.4" width="1.2" height="3.6" rx=".6" fill="#b0bec5"/><rect x="3.0" y="7.6" width="1.6" height="1.2" fill="#90a4ae"/><rect x="3.0" y="10.2" width="1.6" height="1.2" fill="#90a4ae"/><rect x="3.0" y="12.8" width="1.6" height="1.2" fill="#90a4ae"/><rect x="5.6" y="7.6" width="1.6" height="1.2" fill="#90a4ae"/><rect x="5.6" y="10.2" width="1.6" height="1.2" fill="#90a4ae"/><rect x="5.6" y="12.8" width="1.6" height="1.2" fill="#90a4ae"/><rect x="8.2" y="7.6" width="1.6" height="1.2" fill="#90a4ae"/><rect x="8.2" y="10.2" width="1.6" height="1.2" fill="#90a4ae"/><rect x="8.2" y="12.8" width="1.6" height="1.2" fill="#90a4ae"/><rect x="10.8" y="7.6" width="1.6" height="1.2" fill="#90a4ae"/><rect x="10.8" y="10.2" width="1.6" height="1.2" fill="#f44336"/><rect x="10.8" y="12.8" width="1.6" height="1.2" fill="#90a4ae"/></g></svg>
<svg class="b" style="left:4.5px;top:475px;" width="16" height="16" viewBox="0 0 16 16"><path d="M3.6 6 L8 10.4 L12.4 6" fill="none" stroke="#1a1a1a" stroke-width="1.5"/></svg>
<svg class="b" style="left:20px;top:475px;" width="16" height="16" viewBox="0 0 16 16"><g opacity="1" fill="none" stroke="#4298b6" stroke-width=".85" stroke-linecap="round" stroke-linejoin="round"><path d="M1.5 1 C4 0.9 7.6 2.4 9.6 5.4 C10.7 7.1 10.6 8.6 11.5 9.7 C12.4 10.7 13.6 11.1 14.7 11.7 L12.6 12.6 L15.2 14.2"/><path d="M1.4 1.2 C2 3 3 5 3.5 7 C3.7 8.4 3.3 9.6 4.4 10.8 L5.6 9"/><path d="M5.6 9 L7.4 11.4" opacity=".45"/><path d="M2 1.6 L3.6 3.4" opacity=".5"/></g></svg>
<div class="b" style="left:12px;top:113px;width:1px;height:358px;border-left:1px dotted #a8a8a8;"></div>
<div class="b" style="left:24px;top:133px;width:1px;height:119px;border-left:1px dotted #a8a8a8;"></div>
<div class="b" style="left:36px;top:293px;width:1px;height:170px;border-left:1px dotted #a8a8a8;"></div>
<div class="b" style="left:48px;top:313px;width:1px;height:50px;border-left:1px dotted #a8a8a8;"></div>
<div class="b" style="left:49px;top:303px;width:7px;height:1px;border-top:1px dotted #a8a8a8;"></div>
<div class="b" style="left:49px;top:323px;width:7px;height:1px;border-top:1px dotted #a8a8a8;"></div>
<div class="b" style="left:49px;top:343px;width:7px;height:1px;border-top:1px dotted #a8a8a8;"></div>
<div class="b" style="left:49px;top:363px;width:7px;height:1px;border-top:1px dotted #a8a8a8;"></div>
<div class="b" style="left:37px;top:383px;width:7px;height:1px;border-top:1px dotted #a8a8a8;"></div>
<div class="b" style="left:37px;top:403px;width:7px;height:1px;border-top:1px dotted #a8a8a8;"></div>
<div class="b" style="left:37px;top:423px;width:7px;height:1px;border-top:1px dotted #a8a8a8;"></div>
<div class="b" style="left:37px;top:463px;width:7px;height:1px;border-top:1px dotted #a8a8a8;"></div>
<div class="b" style="left:364px;top:91px;width:1554px;height:670px;background:#f9f9f9;border-left:1px solid #e0e0e0;border-top:1px solid #dcdcdc;box-sizing:border-box;"></div>
<div class="b" style="left:366px;top:72px;width:251px;height:20px;background:#f0f0f0;border:1px solid #e3e3e3;border-bottom:none;box-sizing:border-box;"></div>
<div class="b" style="left:617px;top:72px;width:292px;height:20px;background:#f0f0f0;border:1px solid #e3e3e3;border-bottom:none;box-sizing:border-box;"></div>
<div class="b" style="left:909px;top:72px;width:213px;height:20px;background:#f0f0f0;border:1px solid #e3e3e3;border-bottom:none;box-sizing:border-box;"></div>
<div class="b" style="left:1191px;top:72px;width:82px;height:20px;background:#f0f0f0;border:1px solid #e3e3e3;border-bottom:none;box-sizing:border-box;"></div>
<div class="b" style="left:1122px;top:70px;width:69px;height:22px;background:#f9f9f9;border:1px solid #dcdcdc;border-bottom:none;box-sizing:border-box;"></div>
<svg class="b" style="left:371px;top:73px;" width="16" height="16" viewBox="0 0 16 16"><rect x="3.4" y="0.2" width="9.2" height="15.6" fill="#2196f3"/><rect x="3.4" y="0.2" width="9.2" height="10.2" fill="#1976d2"/><path d="M4.4 1.8h7.2M4.4 4.2h7.2M4.4 6.6h7.2M4.4 9h7.2" stroke="#37474f" stroke-width="1.3"/><path d="M10.6 1.8h1M10.6 4.2h1M10.6 6.6h1M10.6 9h1" stroke="#7cb342" stroke-width="1.3"/><rect x="7.4" y="12.8" width="1.4" height="1" fill="#bbdefb"/></svg>
<svg class="b" style="left:622px;top:73.4px;" width="15.5" height="15.5" viewBox="0 0 16 16"><g opacity="1"><rect x="1" y="1.3" width="14" height="3.9" fill="#d1c4e9"/><rect x="1" y="6.5" width="14" height="3.9" fill="#d1c4e9"/><rect x="1" y="11.7" width="14" height="3.9" fill="#d1c4e9"/></g></svg>
<svg class="b" style="left:916px;top:73px;" width="16" height="16" viewBox="0 0 16 16"><g opacity="1"><rect x="0" y="0" width="16" height="16" fill="#bbdefb"/><rect x="5.2" y="5.2" width="2.6" height="2.6" fill="#fff"/><rect x="5.2" y="8.8" width="2.6" height="2.6" fill="#fff"/><rect x="5.2" y="12.4" width="2.6" height="2.6" fill="#fff"/><rect x="8.8" y="5.2" width="2.6" height="2.6" fill="#fff"/><rect x="8.8" y="8.8" width="2.6" height="2.6" fill="#fff"/><rect x="8.8" y="12.4" width="2.6" height="2.6" fill="#fff"/><rect x="12.4" y="5.2" width="2.6" height="2.6" fill="#fff"/><rect x="12.4" y="8.8" width="2.6" height="2.6" fill="#fff"/><rect x="12.4" y="12.4" width="2.6" height="2.6" fill="#fff"/><path d="M0 0h16v4.4H4.4V16H0z" fill="#00acc1"/><path d="M0 4.4h4.4M0 8h4.4M0 11.6h4.4M4.4 0v4.4M8 0v4.4M11.6 0v4.4" stroke="#0097a7" stroke-width=".6"/></g></svg>
<svg class="b" style="left:1129.5px;top:71px;" width="15.2" height="15.2" viewBox="0 0 16 16"><rect x="0.2" y="0.2" width="15.6" height="15.6" rx="1.6" fill="#90caf9"/><rect x="1.8" y="1.8" width="3.6" height="3.6" fill="#fff"/><rect x="1.8" y="6.2" width="3.6" height="3.6" fill="#fff"/><rect x="1.8" y="10.600000000000001" width="3.6" height="3.6" fill="#fff"/><rect x="6.2" y="1.8" width="3.6" height="3.6" fill="#fff"/><rect x="6.2" y="6.2" width="3.6" height="3.6" fill="#fff"/><rect x="6.2" y="10.600000000000001" width="3.6" height="3.6" fill="#fff"/><rect x="10.600000000000001" y="1.8" width="3.6" height="3.6" fill="#fff"/><rect x="10.600000000000001" y="6.2" width="3.6" height="3.6" fill="#fff"/><rect x="10.600000000000001" y="10.600000000000001" width="3.6" height="3.6" fill="#fff"/></svg>
<svg class="b" style="left:1196px;top:73.4px;" width="15" height="15" viewBox="0 0 16 16"><path d="M1 0.6V15.4L15.6 8z" fill="#2196f3"/></svg>
<svg class="b" style="left:1282.5px;top:73px;" width="15.5" height="15.5" viewBox="0 0 16 16"><rect x="0.6" y="0.6" width="11.4" height="13" rx="1" fill="#e3f2fd" stroke="#90caf9" stroke-width="1"/><path d="M2.6 3.4h7M2.6 5.6h5M2.6 7.8h6" stroke="#78909c" stroke-width="1"/><circle cx="11.8" cy="12" r="3.6" fill="#4caf50"/><path d="M11.8 10v4M9.8 12h4" stroke="#fff" stroke-width="1.1"/></svg>
<svg class="b" style="left:1360px;top:101px;" width="16" height="12" viewBox="0 0 16 12"><path d="M1.2 0.8 L6.4 6 L1.2 11.2M7.8 0.8 L13 6 L7.8 11.2" fill="none" stroke="#8c8c8c" stroke-width="1.7"/></svg>
<svg class="b" style="left:1471px;top:98px;" width="14" height="18" viewBox="0 0 14 18"><path d="M1 7.4 L6.6 0.6 L12.2 7.4ZM1 10.4 L6.6 17.2 L12.2 10.4Z" fill="#8c8c8c"/></svg>
<svg class="b" style="left:1588px;top:103px;" width="16" height="9" viewBox="0 0 16 9"><path d="M0.4 0.4 H15 L7.7 8.4Z" fill="#2196f3"/></svg>
<svg class="b" style="left:1698px;top:103px;" width="16" height="9" viewBox="0 0 16 9"><path d="M0.4 0.4 H15 L7.7 8.4Z" fill="#808080"/></svg>
<div class="b" style="left:1579px;top:97px;width:1px;height:18px;background:#a0a0a0;"></div>
<div class="b" style="left:1805px;top:96.5px;width:110px;height:20.5px;background:#cce4f7;border:1px solid #99d1ff;box-sizing:border-box;border-radius:2px;"></div>
<svg class="b" style="left:1810px;top:104px;" width="15" height="9" viewBox="0 0 15 9"><path d="M0.3 0.4 H14.3 L7.3 8.2Z" fill="#2196f3"/></svg>
<div class="b" style="left:445px;top:120px;width:1304px;height:1px;background:#e9e9e9;"></div>
<div class="b" style="left:445px;top:121px;width:1304px;height:22px;background:#fdfdfd;border-bottom:1px solid #8a8a8a;border-right:1px solid #e4e4e4;box-sizing:border-box;"></div>
<svg class="b" style="left:1736px;top:129px;" width="10" height="7" viewBox="0 0 10 7"><path d="M0.8 0.8 L5 5 L9.2 0.8" fill="none" stroke="#555" stroke-width="1"/></svg>
<div class="b" style="left:367px;top:143px;width:1382px;height:40px;background:#ffffff;border:1px solid #828282;border-right:1px solid #d8d8d8;box-sizing:border-box;"></div>
<div class="b" style="left:1753.5px;top:135.5px;width:155px;height:22.5px;background:#ffffff;border:1px solid #ececec;border-bottom:1px solid #8a8a8a;box-sizing:border-box;border-radius:2px;"></div>
<div class="b" style="left:1754px;top:163px;width:74px;height:19px;background:#fdfdfd;border:1px solid #d0d0d0;box-sizing:border-box;border-radius:3px;"></div>
<div class="b" style="left:1834px;top:163px;width:74px;height:19px;background:#fdfdfd;border:1px solid #d0d0d0;box-sizing:border-box;border-radius:3px;"></div>
<div class="b" style="left:367px;top:186px;width:1549px;height:572px;background:#ffffff;border:1px solid #828282;border-right:1px solid #4d4d4d;border-bottom:1px solid #1a1a1a;box-sizing:border-box;"></div>
<div class="b" style="left:368px;top:326px;width:1546px;height:22px;background:#e0e0e0;"></div>
<div class="b" style="left:1078px;top:326px;width:300px;height:22px;background:#fcfce0;"></div>
<div class="b" style="left:502px;top:326px;width:196px;height:22px;background:#0078d7;outline:1px dotted #e0a060;outline-offset:-1px;"></div>
<div class="b" style="left:368px;top:233px;width:1546px;height:1px;background:#f0f0f0;"></div>
<div class="b" style="left:368px;top:256px;width:1546px;height:1px;background:#f0f0f0;"></div>
<div class="b" style="left:368px;top:279px;width:1546px;height:1px;background:#f0f0f0;"></div>
<div class="b" style="left:368px;top:302px;width:1546px;height:1px;background:#f0f0f0;"></div>
<div class="b" style="left:368px;top:325px;width:1546px;height:1px;background:#f0f0f0;"></div>
<div class="b" style="left:368px;top:348px;width:1546px;height:1px;background:#f0f0f0;"></div>
<div class="b" style="left:368px;top:371px;width:1546px;height:1px;background:#f0f0f0;"></div>
<div class="b" style="left:368px;top:394px;width:1546px;height:1px;background:#f0f0f0;"></div>
<div class="b" style="left:368px;top:417px;width:1546px;height:1px;background:#f0f0f0;"></div>
<div class="b" style="left:368px;top:440px;width:1546px;height:1px;background:#f0f0f0;"></div>
<div class="b" style="left:501px;top:188px;width:1px;height:23px;background:#e5e5e5;"></div>
<div class="b" style="left:501px;top:211px;width:1px;height:230px;background:#f0f0f0;"></div>
<div class="b" style="left:698px;top:188px;width:1px;height:23px;background:#e5e5e5;"></div>
<div class="b" style="left:698px;top:211px;width:1px;height:230px;background:#f0f0f0;"></div>
<div class="b" style="left:755px;top:188px;width:1px;height:23px;background:#e5e5e5;"></div>
<div class="b" style="left:755px;top:211px;width:1px;height:230px;background:#f0f0f0;"></div>
<div class="b" style="left:806px;top:188px;width:1px;height:23px;background:#e5e5e5;"></div>
<div class="b" style="left:806px;top:211px;width:1px;height:230px;background:#f0f0f0;"></div>
<div class="b" style="left:915px;top:188px;width:1px;height:23px;background:#e5e5e5;"></div>
<div class="b" style="left:915px;top:211px;width:1px;height:230px;background:#f0f0f0;"></div>
<div class="b" style="left:971px;top:188px;width:1px;height:23px;background:#e5e5e5;"></div>
<div class="b" style="left:971px;top:211px;width:1px;height:230px;background:#f0f0f0;"></div>
<div class="b" style="left:1077px;top:188px;width:1px;height:23px;background:#e5e5e5;"></div>
<div class="b" style="left:1077px;top:211px;width:1px;height:230px;background:#f0f0f0;"></div>
<div class="b" style="left:1214px;top:188px;width:1px;height:23px;background:#e5e5e5;"></div>
<div class="b" style="left:1214px;top:211px;width:1px;height:230px;background:#f0f0f0;"></div>
<div class="b" style="left:1378px;top:188px;width:1px;height:23px;background:#e5e5e5;"></div>
<div class="b" style="left:1378px;top:211px;width:1px;height:230px;background:#f0f0f0;"></div>
<div class="b" style="left:1485px;top:188px;width:1px;height:23px;background:#e5e5e5;"></div>
<div class="b" style="left:1485px;top:211px;width:1px;height:230px;background:#f0f0f0;"></div>
<div class="b" style="left:1595px;top:188px;width:1px;height:23px;background:#e5e5e5;"></div>
<div class="b" style="left:1595px;top:211px;width:1px;height:230px;background:#f0f0f0;"></div>
<div class="b" style="left:1682px;top:188px;width:1px;height:23px;background:#e5e5e5;"></div>
<div class="b" style="left:1682px;top:211px;width:1px;height:230px;background:#f0f0f0;"></div>
<div class="b" style="left:1827px;top:188px;width:1px;height:23px;background:#e5e5e5;"></div>
<div class="b" style="left:1827px;top:211px;width:1px;height:230px;background:#f0f0f0;"></div>
<svg class="b" style="left:464.2px;top:190.2px;" width="15.8" height="15.8" viewBox="0 0 16 16"><path d="M2 2.6 C2 1.2 3 0.2 4.4 0.2 H11.6 C13 0.2 14 1.2 14 2.6 V5.4 C14 6.8 13 7.8 11.6 7.8 H9.9 V15 L8.3 16 L6.5 15 V14 L7.6 13.2 L6.5 12.4 V11.4 L7.6 10.6 L6.5 9.8 V7.8 H4.4 C3 7.8 2 6.8 2 5.4z" fill="#ffa000"/><rect x="5.6" y="1.9" width="4.8" height="1.5" rx=".7" fill="#fff"/></svg>
<svg class="b" style="left:676.8px;top:190.2px;" width="15.8" height="15.8" viewBox="0 0 16 16"><path d="M2 2.6 C2 1.2 3 0.2 4.4 0.2 H11.6 C13 0.2 14 1.2 14 2.6 V5.4 C14 6.8 13 7.8 11.6 7.8 H9.9 V15 L8.3 16 L6.5 15 V14 L7.6 13.2 L6.5 12.4 V11.4 L7.6 10.6 L6.5 9.8 V7.8 H4.4 C3 7.8 2 6.8 2 5.4z" fill="#ffa000"/><rect x="5.6" y="1.9" width="4.8" height="1.5" rx=".7" fill="#fff"/></svg>
<svg class="b" style="left:1463.4px;top:190.2px;" width="15.8" height="15.8" viewBox="0 0 16 16"><path d="M2 2.6 C2 1.2 3 0.2 4.4 0.2 H11.6 C13 0.2 14 1.2 14 2.6 V5.4 C14 6.8 13 7.8 11.6 7.8 H9.9 V15 L8.3 16 L6.5 15 V14 L7.6 13.2 L6.5 12.4 V11.4 L7.6 10.6 L6.5 9.8 V7.8 H4.4 C3 7.8 2 6.8 2 5.4z" fill="#43a017"/><rect x="5.6" y="1.9" width="4.8" height="1.5" rx=".7" fill="#fff"/></svg>
<svg class="b" style="left:481.8px;top:194.4px;" width="9" height="9" viewBox="0 0 9 9"><path d="M0.1 8.6 L4.2 0.2 L8.4 8.6Z" fill="#000"/></svg>
<svg class="b" style="left:735.8px;top:194.4px;" width="9" height="9" viewBox="0 0 9 9"><path d="M0.1 8.6 L4.2 0.2 L8.4 8.6Z" fill="#000"/></svg>
<div class="b" style="left:368px;top:740px;width:1546px;height:17px;background:#f0f0f0;"></div>
<div class="b" style="left:386px;top:747px;width:768px;height:2px;background:#8a8a8a;border-radius:1px;"></div>
<div class="b" style="left:433.5px;top:765.5px;width:153px;height:22.5px;background:#ffffff;border:1px solid #e0e0e0;border-bottom:1px solid #8a8a8a;box-sizing:border-box;border-radius:2px;"></div>
<svg class="b" style="left:370.6px;top:768.6px;" width="12" height="12" viewBox="0 0 12 12"><path d="M1.5 1.5l8 8M9.5 1.5l-8 8" stroke="#222" stroke-width="1.2" fill="none"/></svg>
<div class="b" style="left:0px;top:792px;width:1919px;height:221px;background:#ffffff;border-top:1px solid #8c8c8c;border-left:1px solid #a0a0a0;border-bottom:1px solid #8c8c8c;box-sizing:border-box;"></div>
<div class="b" style="left:1px;top:793px;width:47.5px;height:219px;background:#f0f0f0;"></div>
<div class="b" style="left:1902px;top:793px;width:17px;height:219px;background:#f0f0f0;"></div>
<div class="b" style="left:1909px;top:977px;width:2px;height:17px;background:#707070;"></div>
<div class="b" style="left:0px;top:1013px;width:1920px;height:19px;background:#f0f0f0;"></div>
<div class="b" style="left:701px;top:1015px;width:1px;height:16px;background:#d7d7d7;"></div>
<div class="b" style="left:812px;top:1015px;width:1px;height:16px;background:#d7d7d7;"></div>
<div class="b" style="left:1005px;top:1015px;width:1px;height:16px;background:#d7d7d7;"></div>
<div class="b" style="left:1205px;top:1015px;width:1px;height:16px;background:#d7d7d7;"></div>
<div class="b" style="left:1425px;top:1015px;width:1px;height:16px;background:#d7d7d7;"></div>
<div class="b" style="left:1619px;top:1015px;width:1px;height:16px;background:#d7d7d7;"></div>
<svg class="b" style="left:815px;top:1015.5px;" width="15.5" height="15.5" viewBox="0 0 16 16"><circle cx="8" cy="8" r="6.8" fill="#fff" stroke="#26a5c0" stroke-width="1.5"/><path d="M8 3.8V8l2.8 2.4" fill="none" stroke="#37474f" stroke-width="1.2"/></svg>
<svg class="b" style="left:1429.6px;top:1015.5px;" width="15.5" height="15.5" viewBox="0 0 16 16"><circle cx="8" cy="8" r="6.8" fill="#fff" stroke="#26a5c0" stroke-width="1.5"/><path d="M8 3.8V8l2.8 2.4" fill="none" stroke="#37474f" stroke-width="1.2"/></svg>
<svg class="b" style="left:1010px;top:1015px;" width="16" height="16" viewBox="0 0 16 16"><g opacity="1" fill="none" stroke="#4298b6" stroke-width=".85" stroke-linecap="round" stroke-linejoin="round"><path d="M1.5 1 C4 0.9 7.6 2.4 9.6 5.4 C10.7 7.1 10.6 8.6 11.5 9.7 C12.4 10.7 13.6 11.1 14.7 11.7 L12.6 12.6 L15.2 14.2"/><path d="M1.4 1.2 C2 3 3 5 3.5 7 C3.7 8.4 3.3 9.6 4.4 10.8 L5.6 9"/><path d="M5.6 9 L7.4 11.4" opacity=".45"/><path d="M2 1.6 L3.6 3.4" opacity=".5"/></g></svg>
<svg class="b" style="left:1622.6px;top:1014.6px;" width="17" height="17" viewBox="0 0 17 17"><circle cx="8.5" cy="8.5" r="7" fill="#fff" stroke="#9c27b0" stroke-width="1.5"/></svg>
<div class="b" style="left:0px;top:1032px;width:1920px;height:48px;background:#d4dff6;"></div>
<svg class="b" style="left:0;top:0" width="1920" height="1080" viewBox="0 0 1920 1080"><defs><linearGradient id="gw" x1="0" y1="0" x2="1" y2="1"><stop offset="0" stop-color="#5fd0ff"/><stop offset="1" stop-color="#0a6fd6"/></linearGradient><linearGradient id="gchat" x1="0" y1="0" x2="1" y2="1"><stop offset="0" stop-color="#8b8be8"/><stop offset="1" stop-color="#5a55c8"/></linearGradient><linearGradient id="gtv" x1="0" y1="0" x2="1" y2="1"><stop offset="0" stop-color="#ffffff"/><stop offset="1" stop-color="#c8c8c8"/></linearGradient><linearGradient id="gnp" x1="0" y1="0" x2="0" y2="1"><stop offset="0" stop-color="#ffffff"/><stop offset=".45" stop-color="#e8f5c8"/><stop offset="1" stop-color="#5cb82a"/></linearGradient><linearGradient id="ghs" x1="0" y1="0" x2="0" y2="1"><stop offset="0" stop-color="#6cc52e"/><stop offset="1" stop-color="#2f8a12"/></linearGradient><linearGradient id="gcl" x1="0" y1="0" x2="0" y2="1"><stop offset="0" stop-color="#707070"/><stop offset="1" stop-color="#e8e8e8"/></linearGradient><linearGradient id="gmon" x1="0" y1="0" x2="1" y2="1"><stop offset="0" stop-color="#9cc0ff"/><stop offset=".45" stop-color="#2a50e0"/><stop offset="1" stop-color="#0a22a8"/></linearGradient></defs><rect x="685" y="1045" width="11" height="11" fill="url(#gw)"/><rect x="697" y="1045" width="11" height="11" fill="url(#gw)"/><rect x="685" y="1057" width="11" height="11" fill="url(#gw)"/><rect x="697" y="1057" width="11" height="11" fill="url(#gw)"/><circle cx="742" cy="1054.2" r="8.2" fill="#e4eaf8" stroke="#1f1f1f" stroke-width="2.2"/><path d="M736.4 1060.6 L731.4 1066" stroke="#1f1f1f" stroke-width="2.6" stroke-linecap="round"/><rect x="773" y="1051" width="18" height="16" rx="1" fill="#1e1e1e"/><rect x="779" y="1045" width="17.5" height="15.5" rx="1" fill="url(#gtv)" opacity=".92"/><rect x="817" y="1045" width="24" height="22" rx="1.5" fill="#0a5fb8"/><rect x="819" y="1047" width="9" height="18" rx="1" fill="#fafafa"/><rect x="830" y="1047" width="9" height="9" fill="#5fd0ff"/><rect x="830" y="1057" width="9" height="4" fill="#1e90ff"/><rect x="830" y="1062" width="9" height="3" fill="#0078d4"/><circle cx="873" cy="1055.5" r="11.5" fill="url(#gchat)"/><path d="M863 1063 L861.6 1067.6 L868 1065.6Z" fill="#6a66d0"/><rect x="866.5" y="1052" width="9.5" height="7.5" rx="1.2" fill="#fff"/><path d="M876.4 1055 L880 1052.6 V1059 L876.4 1056.6Z" fill="#fff"/><rect x="905" y="1044" width="24" height="24" fill="#0079ba"/><circle cx="917" cy="1056" r="5.6" fill="none" stroke="#e8f4fb" stroke-width="1"/><text x="917" y="1057.6" font-family="Liberation Sans, sans-serif" font-size="3.6" font-weight="700" fill="#e8f4fb" text-anchor="middle">DELL</text><circle cx="961" cy="1056" r="12" fill="#1ed760"/><path d="M953.6 1051.6 C958.6 1050 964.4 1050.4 969 1053" fill="none" stroke="#111" stroke-width="2.3" stroke-linecap="round"/><path d="M954.4 1056 C958.8 1054.8 963.6 1055.2 967.6 1057.4" fill="none" stroke="#111" stroke-width="1.9" stroke-linecap="round"/><path d="M955.2 1060 C958.8 1059.2 962.6 1059.4 966 1061.2" fill="none" stroke="#111" stroke-width="1.6" stroke-linecap="round"/><path d="M993 1046.6 C993 1045.6 993.6 1045 994.6 1045 H1001.4 L1003.6 1047.6 H1017 V1052 H993z" fill="#e8a600"/><rect x="993" y="1048.6" width="24" height="17.6" rx="1.2" fill="#ffcf48"/><path d="M997.6 1066.2 V1062 C997.6 1060.8 998.4 1060 999.6 1060 H1010.4 C1011.6 1060 1012.4 1060.8 1012.4 1062 V1066.2z" fill="#1a7fd4"/><rect x="1000" y="1062.4" width="10" height="1.4" rx=".7" fill="#0f5ea8"/><path d="M1038.2 1044.8 L1059.4 1046.6 L1058 1061.6 L1040 1060.2Z" fill="#dfe5f0" stroke="#aab4c4" stroke-width=".5"/><path d="M1039.8 1046.4 L1057.8 1048 L1056.6 1060 L1041.2 1058.8Z" fill="url(#gmon)"/><path d="M1045 1060.8 L1052 1061.2 L1053.4 1065 L1043.6 1065Z" fill="#c4cad4"/><ellipse cx="1048.6" cy="1065.6" rx="6.4" ry="1.9" fill="#dfe3ea" stroke="#b0b6c0" stroke-width=".4"/><circle cx="1055.4" cy="1062.4" r="5" fill="#8a9a8a" stroke="#e8ece8" stroke-width="1"/><path d="M1052.8 1060.6 L1054.8 1062.4 L1052.8 1064.2M1058 1060.6 L1056 1062.4 L1058 1064.2" fill="none" stroke="#fff" stroke-width="1"/><rect x="1081" y="1044" width="24" height="24" rx="1.5" fill="#4a4a4a"/><path d="M1087 1052.4 L1099.4 1047.6 V1053.2 L1087 1058Z" fill="#ff9800"/><path d="M1087 1058 L1099.4 1062 V1056.6 L1087 1052.4Z" fill="#f57c00"/><path d="M1087 1063.8 L1099.4 1059 V1062 V1064.6 L1087 1065Z" fill="#ff9800" transform="translate(0 -1)"/><circle cx="1137" cy="1056.4" r="11.4" fill="#2a9df4"/><path d="M1127 1050 C1128 1046 1132 1044.6 1134 1045.4 C1132.6 1047.4 1133 1049 1135 1050 C1139 1046 1145.6 1048 1147.6 1053 C1149.6 1060 1144 1067.6 1137 1067.6 C1130 1067.6 1125 1062 1125.6 1055 C1125.8 1053 1126.2 1051.4 1127 1050Z" fill="#1e88e5"/><path d="M1139 1044.4 C1144 1045 1148 1049 1148.4 1054 C1146.6 1051 1143 1050 1141 1051 C1141.6 1048.4 1140.6 1046 1139 1044.4Z" fill="#4fc3f7"/><circle cx="1137.6" cy="1057" r="5" fill="#283593"/><path d="M1132.8 1055 C1134 1052.4 1138 1052 1140 1053.6 C1138 1053.6 1136.6 1054.4 1136.2 1056 C1135 1055 1133.8 1054.8 1132.8 1055Z" fill="#5c6bc0"/><rect x="1134" y="1072.4" width="6" height="2.4" rx="1.2" fill="#8a8f9c"/><rect x="1178" y="1072.4" width="6" height="2.4" rx="1.2" fill="#8a8f9c"/><path d="M1170 1044.6 H1183.6 L1188 1049 V1067 H1170z" fill="url(#gnp)" stroke="#9aa0a8" stroke-width=".8"/><path d="M1183.6 1044.6 V1049 H1188z" fill="#e0e0e0" stroke="#9aa0a8" stroke-width=".5"/><path d="M1174.6 1050.4 V1058.4M1176.6 1054.6 H1181" stroke="#333" stroke-width="1.3"/><path d="M1189.6 1045 L1191.4 1046.2 L1182.6 1061.6 L1180.6 1062.4 L1180.8 1060.4Z" fill="#f5a623" stroke="#b87a10" stroke-width=".4"/><circle cx="1190.6" cy="1045.2" r="1" fill="#d04040"/><rect x="1206" y="1037" width="38" height="38.4" rx="4" fill="#eaeef9"/><clipPath id="hsc"><circle cx="1225" cy="1056" r="11"/></clipPath><circle cx="1225" cy="1056" r="11" fill="url(#ghs)"/><g clip-path="url(#hsc)"><ellipse cx="1225" cy="1059.4" rx="10.2" ry="9.4" fill="#f8f8f8"/><path d="M1214 1062 A11 11 0 0 0 1236 1062 L1236 1068 H1214Z" fill="#c8ccc8" opacity=".55"/><ellipse cx="1225" cy="1058.6" rx="9.6" ry="8" fill="#fbfbfb"/></g><circle cx="1225" cy="1056" r="11" fill="none" stroke="#5a8a4a" stroke-width=".6" opacity=".7"/><text x="1225" y="1061" font-family="Liberation Sans, sans-serif" font-size="11.4" font-weight="700" fill="#111" text-anchor="middle" letter-spacing="-.6">HS</text><rect x="1217" y="1072.2" width="16" height="3" rx="1.5" fill="#0078d4"/><path d="M1671.4 1058.6 L1677 1053.2 L1682.6 1058.6" fill="none" stroke="#1a1a1a" stroke-width="1.3"/><path d="M1696.6 1060.4 C1694.4 1060.4 1693.2 1059 1693.4 1057.2 C1693.6 1055.6 1695 1054.8 1696.2 1054.8 C1696.8 1052 1699 1050.4 1701.6 1050.6 C1703.8 1050.8 1705.2 1052.2 1705.8 1054 C1707.8 1054 1709 1055.4 1709 1057.2 C1709 1059 1707.8 1060.4 1706 1060.4Z" fill="url(#gcl)" stroke="#2a2a2a" stroke-width=".9"/><g fill="none" stroke="#1a1a1a" stroke-width="1.2" stroke-linecap="round"><path d="M1765.6 1053.6 C1770 1049 1776.4 1049 1780.8 1053.6"/><path d="M1768 1056 C1771 1053 1775.4 1053 1778.4 1056"/><path d="M1770.4 1058.2 C1772 1056.8 1774.4 1056.8 1776 1058.2"/></g><circle cx="1773.2" cy="1060" r="1.1" fill="#1a1a1a"/><path d="M1789.4 1053.6 H1792 L1795.4 1050.4 V1061.6 L1792 1058.4 H1789.4Z" fill="none" stroke="#1a1a1a" stroke-width="1.1" stroke-linejoin="round"/><path d="M1797.6 1053.6 C1798.8 1055 1798.8 1057 1797.6 1058.4" fill="none" stroke="#1a1a1a" stroke-width="1"/><path d="M1799.8 1051.6 C1802 1054 1802 1058 1799.8 1060.4" fill="none" stroke="#8a8a8a" stroke-width="1"/><path d="M1802 1049.8 C1805 1053 1805 1059 1802 1062.2" fill="none" stroke="#b0b0b0" stroke-width="1"/><rect x="1817" y="1051.6" width="10.4" height="7.6" rx="1.4" fill="none" stroke="#1a1a1a" stroke-width="1.2"/><rect x="1818.6" y="1053.2" width="7.2" height="4.4" fill="#1a1a1a"/><rect x="1827.8" y="1054" width="1.4" height="2.8" rx=".6" fill="#1a1a1a"/><path d="M1813.4 1050.2 V1052 M1816 1050.2 V1052 M1812.6 1052 H1816.8 V1054 C1816.8 1055 1816 1055.6 1814.7 1055.6 C1813.4 1055.6 1812.6 1055 1812.6 1054Z M1814.7 1055.6 V1060.4 H1817" fill="none" stroke="#1a1a1a" stroke-width="1.1"/><path d="M1812.6 1052 H1816.8 V1054 C1816.8 1055 1816 1055.6 1814.7 1055.6 C1813.4 1055.6 1812.6 1055 1812.6 1054Z" fill="#1a1a1a"/></svg>
<span class="t" style="left:23.00px;top:4px;font-family:'Liberation Sans', sans-serif;font-size:12px;font-weight:400;color:#000;line-height:16px;letter-spacing:-0.154px;">nfs_homol-02\nfs_homol_treinamento_pamela\Tabelas (103)\nfs_core_ds_tabela_campo\ - HeidiSQL 11.3.0.6295</span>
<span class="t" style="left:7.20px;top:25px;font-family:'Liberation Sans', sans-serif;font-size:12px;font-weight:400;color:#000;line-height:16px;letter-spacing:0.102px;">Arquivo</span>
<span class="t" style="left:63.40px;top:25px;font-family:'Liberation Sans', sans-serif;font-size:12px;font-weight:400;color:#000;line-height:16px;letter-spacing:-0.260px;">Editar</span>
<span class="t" style="left:107.20px;top:25px;font-family:'Liberation Sans', sans-serif;font-size:12px;font-weight:400;color:#000;line-height:16px;letter-spacing:-0.397px;">Pesquisar</span>
<span class="t" style="left:171.30px;top:25px;font-family:'Liberation Sans', sans-serif;font-size:12px;font-weight:400;color:#000;line-height:16px;letter-spacing:-0.097px;">Consulta</span>
<span class="t" style="left:232.30px;top:25px;font-family:'Liberation Sans', sans-serif;font-size:12px;font-weight:400;color:#000;line-height:16px;letter-spacing:-0.312px;">Ferramentas</span>
<span class="t" style="left:311.30px;top:25px;font-family:'Liberation Sans', sans-serif;font-size:12px;font-weight:400;color:#000;line-height:16px;letter-spacing:-0.309px;">Ir para...</span>
<span class="t" style="left:366.90px;top:25px;font-family:'Liberation Sans', sans-serif;font-size:12px;font-weight:400;color:#000;line-height:16px;letter-spacing:-0.021px;">Ajuda</span>
<span class="t" style="left:1825.80px;top:46px;font-family:'Liberation Sans', sans-serif;font-size:17.6px;font-weight:700;color:#fff;line-height:20px;letter-spacing:0.260px;">Donate</span>
<span class="t" style="left:21.40px;top:72px;font-family:'Liberation Sans', sans-serif;font-size:12px;font-weight:400;color:#000;line-height:16px;letter-spacing:-0.097px;">pamel</span>
<span class="t" style="left:188.00px;top:72px;font-family:'Liberation Sans', sans-serif;font-size:12px;font-weight:400;color:#000;line-height:16px;letter-spacing:0.104px;">tab</span>
<span class="t" style="left:42.00px;top:95px;font-family:'Liberation Sans', sans-serif;font-size:12px;font-weight:700;color:#000;line-height:16px;letter-spacing:-0.210px;">nfs_homol-02</span>
<span class="t" style="left:54.00px;top:115px;font-family:'Liberation Sans', sans-serif;font-size:12px;font-weight:400;color:#000;line-height:16px;letter-spacing:-0.221px;">nfs_homol_pamela_testes</span>
<span class="t" style="left:308.00px;top:115px;font-family:'Liberation Sans', sans-serif;font-size:12px;font-weight:400;color:#000;line-height:16px;letter-spacing:-0.357px;">97,7 MiB</span>
<span class="t" style="left:66.00px;top:135px;font-family:'Liberation Sans', sans-serif;font-size:12px;font-weight:400;color:#000;line-height:16px;letter-spacing:-0.518px;">Tabelas</span>
<span class="t" style="left:66.00px;top:155px;font-family:'Liberation Sans', sans-serif;font-size:12px;font-weight:400;color:#000;line-height:16px;letter-spacing:-0.359px;">Views</span>
<span class="t" style="left:66.00px;top:175px;font-family:'Liberation Sans', sans-serif;font-size:12px;font-weight:400;color:#000;line-height:16px;letter-spacing:-0.237px;">Procedures</span>
<span class="t" style="left:66.00px;top:195px;font-family:'Liberation Sans', sans-serif;font-size:12px;font-weight:400;color:#000;line-height:16px;letter-spacing:-0.290px;">Funções</span>
<span class="t" style="left:66.00px;top:215px;font-family:'Liberation Sans', sans-serif;font-size:12px;font-weight:400;color:#000;line-height:16px;letter-spacing:-0.322px;">Triggers</span>
<span class="t" style="left:66.00px;top:235px;font-family:'Liberation Sans', sans-serif;font-size:12px;font-weight:400;color:#000;line-height:16px;letter-spacing:-0.337px;">Eventos</span>
<span class="t" style="left:54.00px;top:255px;font-family:'Liberation Sans', sans-serif;font-size:12px;font-weight:700;color:#000;line-height:16px;letter-spacing:-0.252px;">nfs_homol_treinamento_pamela</span>
<span class="t" style="left:308.00px;top:255px;font-family:'Liberation Sans', sans-serif;font-size:12px;font-weight:400;color:#000;line-height:16px;letter-spacing:-0.357px;">26,6 MiB</span>
<span class="t" style="left:66.00px;top:275px;font-family:'Liberation Sans', sans-serif;font-size:12px;font-weight:700;color:#000;line-height:16px;letter-spacing:-0.243px;">Tabelas (103)</span>
<span class="t" style="left:78.00px;top:295px;font-family:'Liberation Sans', sans-serif;font-size:12px;font-weight:400;color:#000;line-height:16px;letter-spacing:-0.389px;">nfs_core_ds_tabela</span>
<span class="t" style="left:312.00px;top:295px;font-family:'Liberation Sans', sans-serif;font-size:12px;font-weight:400;color:#808080;line-height:16px;letter-spacing:-0.609px;">64,0 KiB</span>
<span class="t" style="left:78.00px;top:315px;font-family:'Liberation Sans', sans-serif;font-size:12px;font-weight:700;color:#000;line-height:16px;letter-spacing:-0.507px;">nfs_core_ds_tabela_campo</span>
<span class="t" style="left:312.00px;top:315px;font-family:'Liberation Sans', sans-serif;font-size:12px;font-weight:400;color:#808080;line-height:16px;letter-spacing:-0.609px;">48,0 KiB</span>
<span class="t" style="left:78.00px;top:335px;font-family:'Liberation Sans', sans-serif;font-size:12px;font-weight:400;color:#000;line-height:16px;letter-spacing:-0.286px;">nfs_core_ds_tabela_campo_actions</span>
<span class="t" style="left:312.00px;top:335px;font-family:'Liberation Sans', sans-serif;font-size:12px;font-weight:400;color:#808080;line-height:16px;letter-spacing:-0.609px;">16,0 KiB</span>
<span class="t" style="left:78.00px;top:355px;font-family:'Liberation Sans', sans-serif;font-size:12px;font-weight:400;color:#000;line-height:16px;letter-spacing:-0.254px;">nfs_core_sys_tabela_compartilhada</span>
<span class="t" style="left:312.00px;top:355px;font-family:'Liberation Sans', sans-serif;font-size:12px;font-weight:400;color:#808080;line-height:16px;letter-spacing:-0.609px;">48,0 KiB</span>
<span class="t" style="left:66.00px;top:375px;font-family:'Liberation Sans', sans-serif;font-size:12px;font-weight:400;color:#000;line-height:16px;letter-spacing:-0.339px;">Views (0)</span>
<span class="t" style="left:66.00px;top:395px;font-family:'Liberation Sans', sans-serif;font-size:12px;font-weight:400;color:#000;line-height:16px;letter-spacing:-0.259px;">Procedures (0)</span>
<span class="t" style="left:66.00px;top:415px;font-family:'Liberation Sans', sans-serif;font-size:12px;font-weight:400;color:#000;line-height:16px;letter-spacing:-0.298px;">Funções (0)</span>
<span class="t" style="left:66.00px;top:435px;font-family:'Liberation Sans', sans-serif;font-size:12px;font-weight:400;color:#000;line-height:16px;letter-spacing:-0.319px;">Triggers (4)</span>
<span class="t" style="left:66.00px;top:455px;font-family:'Liberation Sans', sans-serif;font-size:12px;font-weight:400;color:#000;line-height:16px;letter-spacing:-0.328px;">Eventos (0)</span>
<span class="t" style="left:42.00px;top:475px;font-family:'Liberation Sans', sans-serif;font-size:12px;font-weight:400;color:#7a7a7a;line-height:16px;letter-spacing:-0.039px;">nfs_homol-01</span>
<span class="t" style="left:392.70px;top:74px;font-family:'Liberation Sans', sans-serif;font-size:12px;font-weight:400;color:#000;line-height:16px;letter-spacing:0.048px;">Servidor: rds-nfs-homol-02.simova.cloud</span>
<span class="t" style="left:644.00px;top:74px;font-family:'Liberation Sans', sans-serif;font-size:12px;font-weight:400;color:#000;line-height:16px;letter-spacing:-0.110px;">Banco de dados: nfs_homol_treinamento_pamela</span>
<span class="t" style="left:938.30px;top:74px;font-family:'Liberation Sans', sans-serif;font-size:12px;font-weight:400;color:#000;line-height:16px;letter-spacing:-0.346px;">Tabela: nfs_core_ds_tabela_campo</span>
<span class="t" style="left:1151.70px;top:72px;font-family:'Liberation Sans', sans-serif;font-size:12px;font-weight:400;color:#000;line-height:16px;letter-spacing:-0.478px;">Dados</span>
<span class="t" style="left:1218.30px;top:74px;font-family:'Liberation Sans', sans-serif;font-size:12px;font-weight:400;color:#000;line-height:16px;letter-spacing:-0.037px;">Consulta*</span>
<span class="t" style="left:368.00px;top:100px;font-family:'Liberation Sans', sans-serif;font-size:12px;font-weight:400;color:#000;line-height:16px;letter-spacing:-0.081px;">nfs_homol_treinamento_pamela.nfs_core_ds_tabela_campo: 96 registros totais (aproximadamente), 10 registros que combinam com o filtro</span>
<span class="t" style="left:1380.00px;top:99px;font-family:'Liberation Sans', sans-serif;font-size:12px;font-weight:400;color:#8c8c8c;line-height:16px;letter-spacing:0.041px;">Próximo</span>
<span class="t" style="left:1490.00px;top:99px;font-family:'Liberation Sans', sans-serif;font-size:12px;font-weight:400;color:#8c8c8c;line-height:16px;letter-spacing:0.049px;">Mostrar todos</span>
<span class="t" style="left:1608.30px;top:99px;font-family:'Liberation Sans', sans-serif;font-size:12px;font-weight:400;color:#000;line-height:16px;letter-spacing:-0.143px;">Ordem (2)</span>
<span class="t" style="left:1718.30px;top:99px;font-family:'Liberation Sans', sans-serif;font-size:12px;font-weight:400;color:#000;line-height:16px;letter-spacing:-0.199px;">Colunas (25/25)</span>
<span class="t" style="left:1829.30px;top:100px;font-family:'Liberation Sans', sans-serif;font-size:12px;font-weight:400;color:#000;line-height:16px;letter-spacing:-0.045px;">Filtro</span>
<span class="t" style="left:368.00px;top:123px;font-family:'Liberation Sans', sans-serif;font-size:12px;font-weight:400;color:#000;line-height:16px;letter-spacing:-0.315px;">Filtros recentes:</span>
<span class="t" style="left:449.00px;top:123px;font-family:'Liberation Sans', sans-serif;font-size:12px;font-weight:400;color:#000;line-height:16px;letter-spacing:-0.757px;">TABELA_NOME = &#x27;EQP_APT_FOTO&#x27;</span>
<span class="t" style="left:371.00px;top:147px;font-family:'Liberation Mono', monospace;font-size:12.4px;font-weight:400;color:#808000;line-height:15px;letter-spacing:-0.436px;">TABELA_NOME</span>
<span class="t" style="left:455.00px;top:147px;font-family:'Liberation Mono', monospace;font-size:12.4px;font-weight:400;color:#0000ff;line-height:15px;letter-spacing:-0.438px;">=</span>
<span class="t" style="left:469.00px;top:147px;font-family:'Liberation Mono', monospace;font-size:12.4px;font-weight:400;color:#008000;line-height:15px;letter-spacing:-0.436px;">&#x27;EQP_APT_FOTO&#x27;</span>
<span class="t" style="left:1753.30px;top:120px;font-family:'Liberation Sans', sans-serif;font-size:12px;font-weight:400;color:#000;line-height:16px;letter-spacing:0.173px;">Criar um filtro multi-coluna:</span>
<span class="t" style="left:1757.00px;top:138px;font-family:'Liberation Sans', sans-serif;font-size:12px;font-weight:400;color:#000;line-height:16px;letter-spacing:-0.138px;">email</span>
<span class="t" style="left:1758.30px;top:164px;font-family:'Liberation Sans', sans-serif;font-size:12px;font-weight:400;color:#000;line-height:16px;letter-spacing:0.122px;">Aplicar filtro</span>
<span class="t" style="left:1852.30px;top:164px;font-family:'Liberation Sans', sans-serif;font-size:12px;font-weight:400;color:#000;line-height:16px;letter-spacing:0.052px;">Limpar</span>
<span class="t" style="left:375.00px;top:191px;font-family:'Liberation Sans', sans-serif;font-size:12px;font-weight:400;color:#000;line-height:16px;letter-spacing:-0.256px;">TABELA_NOME</span>
<span class="t" style="left:508.00px;top:191px;font-family:'Liberation Sans', sans-serif;font-size:12px;font-weight:400;color:#000;line-height:16px;letter-spacing:-0.500px;">NOME</span>
<span class="t" style="left:705.00px;top:191px;font-family:'Liberation Sans', sans-serif;font-size:12px;font-weight:400;color:#000;line-height:16px;letter-spacing:-0.781px;">SEQ</span>
<span class="t" style="left:762.00px;top:191px;font-family:'Liberation Sans', sans-serif;font-size:12px;font-weight:400;color:#000;line-height:16px;letter-spacing:-0.672px;">SYS</span>
<span class="t" style="left:813.00px;top:191px;font-family:'Liberation Sans', sans-serif;font-size:12px;font-weight:400;color:#000;line-height:16px;letter-spacing:-0.147px;">SEND_XMOVA</span>
<span class="t" style="left:922.00px;top:191px;font-family:'Liberation Sans', sans-serif;font-size:12px;font-weight:400;color:#000;line-height:16px;letter-spacing:-0.500px;">GRID</span>
<span class="t" style="left:978.00px;top:191px;font-family:'Liberation Sans', sans-serif;font-size:12px;font-weight:400;color:#000;line-height:16px;letter-spacing:-0.366px;">GRID_MOBILE</span>
<span class="t" style="left:1084.00px;top:191px;font-family:'Liberation Sans', sans-serif;font-size:12px;font-weight:400;color:#000;line-height:16px;letter-spacing:-0.372px;">DESCRICAO</span>
<span class="t" style="left:1221.00px;top:191px;font-family:'Liberation Sans', sans-serif;font-size:12px;font-weight:400;color:#000;line-height:16px;letter-spacing:-0.298px;">DESCRICAO_RESUMIDA</span>
<span class="t" style="left:1385.00px;top:191px;font-family:'Liberation Sans', sans-serif;font-size:12px;font-weight:400;color:#000;line-height:16px;letter-spacing:-0.004px;">TIPO</span>
<span class="t" style="left:1492.00px;top:191px;font-family:'Liberation Sans', sans-serif;font-size:12px;font-weight:400;color:#000;line-height:16px;letter-spacing:-0.143px;">OBRIGATORIO</span>
<span class="t" style="left:1602.00px;top:191px;font-family:'Liberation Sans', sans-serif;font-size:12px;font-weight:400;color:#000;line-height:16px;letter-spacing:-0.016px;">TAMANHO</span>
<span class="t" style="left:1689.00px;top:191px;font-family:'Liberation Sans', sans-serif;font-size:12px;font-weight:400;color:#000;line-height:16px;letter-spacing:-0.143px;">TAMANHO_DECIMAL</span>
<span class="t" style="left:1834.00px;top:191px;font-family:'Liberation Sans', sans-serif;font-size:12px;font-weight:400;color:#000;line-height:16px;letter-spacing:-0.192px;">MASCARA</span>
<span class="t" style="left:490.60px;top:191px;font-family:'Liberation Sans', sans-serif;font-size:7px;font-weight:700;color:#000;line-height:12px;">1</span>
<span class="t" style="left:744.40px;top:191px;font-family:'Liberation Sans', sans-serif;font-size:7px;font-weight:700;color:#000;line-height:12px;">2</span>
<span class="t" style="left:379.00px;top:215px;font-family:'Liberation Sans', sans-serif;font-size:12px;font-weight:700;color:#008000;line-height:16px;letter-spacing:0.016px;">EQP_APT_FOTO</span>
<span class="t" style="left:512.00px;top:215px;font-family:'Liberation Sans', sans-serif;font-size:12px;font-weight:700;color:#008000;line-height:16px;letter-spacing:-0.115px;">EQP</span>
<span class="t" style="left:744.00px;top:215px;font-family:'Liberation Sans', sans-serif;font-size:12px;font-weight:400;color:#0000ff;line-height:16px;letter-spacing:-0.088px;">1</span>
<span class="t" style="left:795.00px;top:215px;font-family:'Liberation Sans', sans-serif;font-size:12px;font-weight:400;color:#0000ff;line-height:16px;letter-spacing:-0.088px;">0</span>
<span class="t" style="left:904.00px;top:215px;font-family:'Liberation Sans', sans-serif;font-size:12px;font-weight:400;color:#0000ff;line-height:16px;letter-spacing:-0.088px;">1</span>
<span class="t" style="left:960.00px;top:215px;font-family:'Liberation Sans', sans-serif;font-size:12px;font-weight:400;color:#0000ff;line-height:16px;letter-spacing:-0.088px;">1</span>
<span class="t" style="left:1066.00px;top:215px;font-family:'Liberation Sans', sans-serif;font-size:12px;font-weight:400;color:#0000ff;line-height:16px;letter-spacing:-0.088px;">1</span>
<span class="t" style="left:1088.00px;top:215px;font-family:'Liberation Sans', sans-serif;font-size:12px;font-weight:400;color:#008000;line-height:16px;letter-spacing:0.298px;">Equipamento</span>
<span class="t" style="left:1225.00px;top:215px;font-family:'Liberation Sans', sans-serif;font-size:12px;font-weight:400;color:#008000;line-height:16px;letter-spacing:0.298px;">Equipamento</span>
<span class="t" style="left:1389.00px;top:215px;font-family:'Liberation Sans', sans-serif;font-size:12px;font-weight:400;color:#008000;line-height:16px;letter-spacing:-0.672px;">FK</span>
<span class="t" style="left:1553.60px;top:215px;font-family:'Liberation Sans', sans-serif;font-size:12px;font-weight:400;color:#b4b4ea;line-height:16px;letter-spacing:-0.279px;">(NULL)</span>
<span class="t" style="left:1640.60px;top:215px;font-family:'Liberation Sans', sans-serif;font-size:12px;font-weight:400;color:#b4b4ea;line-height:16px;letter-spacing:-0.279px;">(NULL)</span>
<span class="t" style="left:1785.60px;top:215px;font-family:'Liberation Sans', sans-serif;font-size:12px;font-weight:400;color:#b4b4ea;line-height:16px;letter-spacing:-0.279px;">(NULL)</span>
<span class="t" style="left:1838.00px;top:215px;font-family:'Liberation Sans', sans-serif;font-size:12px;font-weight:400;color:#7fc97f;line-height:16px;letter-spacing:-0.279px;">(NULL)</span>
<span class="t" style="left:379.00px;top:238px;font-family:'Liberation Sans', sans-serif;font-size:12px;font-weight:700;color:#008000;line-height:16px;letter-spacing:0.016px;">EQP_APT_FOTO</span>
<span class="t" style="left:512.00px;top:238px;font-family:'Liberation Sans', sans-serif;font-size:12px;font-weight:700;color:#008000;line-height:16px;letter-spacing:0.776px;">INI_DH</span>
<span class="t" style="left:744.00px;top:238px;font-family:'Liberation Sans', sans-serif;font-size:12px;font-weight:400;color:#0000ff;line-height:16px;letter-spacing:-0.088px;">4</span>
<span class="t" style="left:795.00px;top:238px;font-family:'Liberation Sans', sans-serif;font-size:12px;font-weight:400;color:#0000ff;line-height:16px;letter-spacing:-0.088px;">0</span>
<span class="t" style="left:904.00px;top:238px;font-family:'Liberation Sans', sans-serif;font-size:12px;font-weight:400;color:#0000ff;line-height:16px;letter-spacing:-0.088px;">1</span>
<span class="t" style="left:960.00px;top:238px;font-family:'Liberation Sans', sans-serif;font-size:12px;font-weight:400;color:#0000ff;line-height:16px;letter-spacing:-0.088px;">1</span>
<span class="t" style="left:1066.00px;top:238px;font-family:'Liberation Sans', sans-serif;font-size:12px;font-weight:400;color:#0000ff;line-height:16px;letter-spacing:-0.088px;">1</span>
<span class="t" style="left:1088.00px;top:238px;font-family:'Liberation Sans', sans-serif;font-size:12px;font-weight:400;color:#008000;line-height:16px;letter-spacing:0.300px;">Data Inicio</span>
<span class="t" style="left:1225.00px;top:238px;font-family:'Liberation Sans', sans-serif;font-size:12px;font-weight:400;color:#008000;line-height:16px;letter-spacing:0.300px;">Data Inicio</span>
<span class="t" style="left:1389.00px;top:238px;font-family:'Liberation Sans', sans-serif;font-size:12px;font-weight:400;color:#008000;line-height:16px;letter-spacing:-0.448px;">DHS</span>
<span class="t" style="left:1553.60px;top:238px;font-family:'Liberation Sans', sans-serif;font-size:12px;font-weight:400;color:#b4b4ea;line-height:16px;letter-spacing:-0.279px;">(NULL)</span>
<span class="t" style="left:1640.60px;top:238px;font-family:'Liberation Sans', sans-serif;font-size:12px;font-weight:400;color:#b4b4ea;line-height:16px;letter-spacing:-0.279px;">(NULL)</span>
<span class="t" style="left:1785.60px;top:238px;font-family:'Liberation Sans', sans-serif;font-size:12px;font-weight:400;color:#b4b4ea;line-height:16px;letter-spacing:-0.279px;">(NULL)</span>
<span class="t" style="left:1838.00px;top:238px;font-family:'Liberation Sans', sans-serif;font-size:12px;font-weight:400;color:#7fc97f;line-height:16px;letter-spacing:-0.279px;">(NULL)</span>
<span class="t" style="left:379.00px;top:261px;font-family:'Liberation Sans', sans-serif;font-size:12px;font-weight:700;color:#008000;line-height:16px;letter-spacing:0.016px;">EQP_APT_FOTO</span>
<span class="t" style="left:512.00px;top:261px;font-family:'Liberation Sans', sans-serif;font-size:12px;font-weight:700;color:#008000;line-height:16px;letter-spacing:0.555px;">FIM_DH</span>
<span class="t" style="left:744.00px;top:261px;font-family:'Liberation Sans', sans-serif;font-size:12px;font-weight:400;color:#0000ff;line-height:16px;letter-spacing:-0.088px;">6</span>
<span class="t" style="left:795.00px;top:261px;font-family:'Liberation Sans', sans-serif;font-size:12px;font-weight:400;color:#0000ff;line-height:16px;letter-spacing:-0.088px;">1</span>
<span class="t" style="left:904.00px;top:261px;font-family:'Liberation Sans', sans-serif;font-size:12px;font-weight:400;color:#0000ff;line-height:16px;letter-spacing:-0.088px;">0</span>
<span class="t" style="left:960.00px;top:261px;font-family:'Liberation Sans', sans-serif;font-size:12px;font-weight:400;color:#0000ff;line-height:16px;letter-spacing:-0.088px;">0</span>
<span class="t" style="left:1066.00px;top:261px;font-family:'Liberation Sans', sans-serif;font-size:12px;font-weight:400;color:#0000ff;line-height:16px;letter-spacing:-0.088px;">0</span>
<span class="t" style="left:1088.00px;top:261px;font-family:'Liberation Sans', sans-serif;font-size:12px;font-weight:400;color:#008000;line-height:16px;letter-spacing:0.289px;">Data Fim</span>
<span class="t" style="left:1225.00px;top:261px;font-family:'Liberation Sans', sans-serif;font-size:12px;font-weight:400;color:#008000;line-height:16px;letter-spacing:0.289px;">Data Fim</span>
<span class="t" style="left:1389.00px;top:261px;font-family:'Liberation Sans', sans-serif;font-size:12px;font-weight:400;color:#008000;line-height:16px;letter-spacing:-0.448px;">DHS</span>
<span class="t" style="left:1553.60px;top:261px;font-family:'Liberation Sans', sans-serif;font-size:12px;font-weight:400;color:#b4b4ea;line-height:16px;letter-spacing:-0.279px;">(NULL)</span>
<span class="t" style="left:1640.60px;top:261px;font-family:'Liberation Sans', sans-serif;font-size:12px;font-weight:400;color:#b4b4ea;line-height:16px;letter-spacing:-0.279px;">(NULL)</span>
<span class="t" style="left:1785.60px;top:261px;font-family:'Liberation Sans', sans-serif;font-size:12px;font-weight:400;color:#b4b4ea;line-height:16px;letter-spacing:-0.279px;">(NULL)</span>
<span class="t" style="left:1838.00px;top:261px;font-family:'Liberation Sans', sans-serif;font-size:12px;font-weight:400;color:#7fc97f;line-height:16px;letter-spacing:-0.279px;">(NULL)</span>
<span class="t" style="left:379.00px;top:284px;font-family:'Liberation Sans', sans-serif;font-size:12px;font-weight:700;color:#008000;line-height:16px;letter-spacing:0.016px;">EQP_APT_FOTO</span>
<span class="t" style="left:512.00px;top:284px;font-family:'Liberation Sans', sans-serif;font-size:12px;font-weight:700;color:#008000;line-height:16px;letter-spacing:-0.531px;">FOTO</span>
<span class="t" style="left:737.40px;top:284px;font-family:'Liberation Sans', sans-serif;font-size:12px;font-weight:400;color:#0000ff;line-height:16px;letter-spacing:-0.080px;">37</span>
<span class="t" style="left:795.00px;top:284px;font-family:'Liberation Sans', sans-serif;font-size:12px;font-weight:400;color:#0000ff;line-height:16px;letter-spacing:-0.088px;">0</span>
<span class="t" style="left:904.00px;top:284px;font-family:'Liberation Sans', sans-serif;font-size:12px;font-weight:400;color:#0000ff;line-height:16px;letter-spacing:-0.088px;">1</span>
<span class="t" style="left:960.00px;top:284px;font-family:'Liberation Sans', sans-serif;font-size:12px;font-weight:400;color:#0000ff;line-height:16px;letter-spacing:-0.088px;">0</span>
<span class="t" style="left:1066.00px;top:284px;font-family:'Liberation Sans', sans-serif;font-size:12px;font-weight:400;color:#0000ff;line-height:16px;letter-spacing:-0.088px;">0</span>
<span class="t" style="left:1088.00px;top:284px;font-family:'Liberation Sans', sans-serif;font-size:12px;font-weight:400;color:#008000;line-height:16px;letter-spacing:0.246px;">Foto</span>
<span class="t" style="left:1225.00px;top:284px;font-family:'Liberation Sans', sans-serif;font-size:12px;font-weight:400;color:#008000;line-height:16px;letter-spacing:0.246px;">Foto</span>
<span class="t" style="left:1389.00px;top:284px;font-family:'Liberation Sans', sans-serif;font-size:12px;font-weight:400;color:#008000;line-height:16px;letter-spacing:-0.269px;">IMG_MOBILE</span>
<span class="t" style="left:1553.60px;top:284px;font-family:'Liberation Sans', sans-serif;font-size:12px;font-weight:400;color:#b4b4ea;line-height:16px;letter-spacing:-0.279px;">(NULL)</span>
<span class="t" style="left:1640.60px;top:284px;font-family:'Liberation Sans', sans-serif;font-size:12px;font-weight:400;color:#b4b4ea;line-height:16px;letter-spacing:-0.279px;">(NULL)</span>
<span class="t" style="left:1785.60px;top:284px;font-family:'Liberation Sans', sans-serif;font-size:12px;font-weight:400;color:#b4b4ea;line-height:16px;letter-spacing:-0.279px;">(NULL)</span>
<span class="t" style="left:1838.00px;top:284px;font-family:'Liberation Sans', sans-serif;font-size:12px;font-weight:400;color:#7fc97f;line-height:16px;letter-spacing:-0.279px;">(NULL)</span>
<span class="t" style="left:379.00px;top:307px;font-family:'Liberation Sans', sans-serif;font-size:12px;font-weight:700;color:#008000;line-height:16px;letter-spacing:0.016px;">EQP_APT_FOTO</span>
<span class="t" style="left:512.00px;top:307px;font-family:'Liberation Sans', sans-serif;font-size:12px;font-weight:700;color:#008000;line-height:16px;letter-spacing:-0.339px;">OBS</span>
<span class="t" style="left:737.40px;top:307px;font-family:'Liberation Sans', sans-serif;font-size:12px;font-weight:400;color:#0000ff;line-height:16px;letter-spacing:-0.080px;">39</span>
<span class="t" style="left:795.00px;top:307px;font-family:'Liberation Sans', sans-serif;font-size:12px;font-weight:400;color:#0000ff;line-height:16px;letter-spacing:-0.088px;">0</span>
<span class="t" style="left:904.00px;top:307px;font-family:'Liberation Sans', sans-serif;font-size:12px;font-weight:400;color:#0000ff;line-height:16px;letter-spacing:-0.088px;">1</span>
<span class="t" style="left:960.00px;top:307px;font-family:'Liberation Sans', sans-serif;font-size:12px;font-weight:400;color:#0000ff;line-height:16px;letter-spacing:-0.088px;">1</span>
<span class="t" style="left:1066.00px;top:307px;font-family:'Liberation Sans', sans-serif;font-size:12px;font-weight:400;color:#0000ff;line-height:16px;letter-spacing:-0.088px;">1</span>
<span class="t" style="left:1088.00px;top:307px;font-family:'Liberation Sans', sans-serif;font-size:12px;font-weight:400;color:#008000;line-height:16px;letter-spacing:0.230px;">Observação</span>
<span class="t" style="left:1225.00px;top:307px;font-family:'Liberation Sans', sans-serif;font-size:12px;font-weight:400;color:#008000;line-height:16px;letter-spacing:0.230px;">Observação</span>
<span class="t" style="left:1389.00px;top:307px;font-family:'Liberation Sans', sans-serif;font-size:12px;font-weight:400;color:#008000;line-height:16px;letter-spacing:0.109px;">TXT</span>
<span class="t" style="left:1553.60px;top:307px;font-family:'Liberation Sans', sans-serif;font-size:12px;font-weight:400;color:#b4b4ea;line-height:16px;letter-spacing:-0.279px;">(NULL)</span>
<span class="t" style="left:1657.80px;top:307px;font-family:'Liberation Sans', sans-serif;font-size:12px;font-weight:400;color:#0000ff;line-height:16px;letter-spacing:-0.077px;">250</span>
<span class="t" style="left:1785.60px;top:307px;font-family:'Liberation Sans', sans-serif;font-size:12px;font-weight:400;color:#b4b4ea;line-height:16px;letter-spacing:-0.279px;">(NULL)</span>
<span class="t" style="left:1838.00px;top:307px;font-family:'Liberation Sans', sans-serif;font-size:12px;font-weight:400;color:#7fc97f;line-height:16px;letter-spacing:-0.279px;">(NULL)</span>
<span class="t" style="left:379.00px;top:330px;font-family:'Liberation Sans', sans-serif;font-size:12px;font-weight:700;color:#008000;line-height:16px;letter-spacing:0.016px;">EQP_APT_FOTO</span>
<span class="t" style="left:512.00px;top:330px;font-family:'Liberation Sans', sans-serif;font-size:12px;font-weight:700;color:#ffffff;line-height:16px;letter-spacing:0.578px;">VALOR</span>
<span class="t" style="left:737.40px;top:330px;font-family:'Liberation Sans', sans-serif;font-size:12px;font-weight:400;color:#0000ff;line-height:16px;letter-spacing:-0.080px;">40</span>
<span class="t" style="left:795.00px;top:330px;font-family:'Liberation Sans', sans-serif;font-size:12px;font-weight:400;color:#0000ff;line-height:16px;letter-spacing:-0.088px;">0</span>
<span class="t" style="left:904.00px;top:330px;font-family:'Liberation Sans', sans-serif;font-size:12px;font-weight:400;color:#0000ff;line-height:16px;letter-spacing:-0.088px;">1</span>
<span class="t" style="left:960.00px;top:330px;font-family:'Liberation Sans', sans-serif;font-size:12px;font-weight:400;color:#0000ff;line-height:16px;letter-spacing:-0.088px;">1</span>
<span class="t" style="left:1066.00px;top:330px;font-family:'Liberation Sans', sans-serif;font-size:12px;font-weight:400;color:#0000ff;line-height:16px;letter-spacing:-0.088px;">1</span>
<span class="t" style="left:1088.00px;top:330px;font-family:'Liberation Sans', sans-serif;font-size:12px;font-weight:400;color:#008000;line-height:16px;letter-spacing:0.575px;">Valor</span>
<span class="t" style="left:1225.00px;top:330px;font-family:'Liberation Sans', sans-serif;font-size:12px;font-weight:400;color:#008000;line-height:16px;letter-spacing:0.575px;">Valor</span>
<span class="t" style="left:1389.00px;top:330px;font-family:'Liberation Sans', sans-serif;font-size:12px;font-weight:400;color:#008000;line-height:16px;letter-spacing:-0.335px;">DECIMAL</span>
<span class="t" style="left:1553.60px;top:330px;font-family:'Liberation Sans', sans-serif;font-size:12px;font-weight:400;color:#b4b4ea;line-height:16px;letter-spacing:-0.279px;">(NULL)</span>
<span class="t" style="left:1664.40px;top:330px;font-family:'Liberation Sans', sans-serif;font-size:12px;font-weight:400;color:#0000ff;line-height:16px;letter-spacing:0.366px;">11</span>
<span class="t" style="left:1816.00px;top:330px;font-family:'Liberation Sans', sans-serif;font-size:12px;font-weight:400;color:#0000ff;line-height:16px;letter-spacing:-0.088px;">2</span>
<span class="t" style="left:1838.00px;top:330px;font-family:'Liberation Sans', sans-serif;font-size:12px;font-weight:400;color:#008000;line-height:16px;letter-spacing:1.150px;">9[9][9][9][9]</span>
<span class="t" style="left:379.00px;top:353px;font-family:'Liberation Sans', sans-serif;font-size:12px;font-weight:700;color:#008000;line-height:16px;letter-spacing:0.016px;">EQP_APT_FOTO</span>
<span class="t" style="left:512.00px;top:353px;font-family:'Liberation Sans', sans-serif;font-size:12px;font-weight:700;color:#008000;line-height:16px;letter-spacing:0.332px;">FLAG_EMAIL_ENVIADO</span>
<span class="t" style="left:737.40px;top:353px;font-family:'Liberation Sans', sans-serif;font-size:12px;font-weight:400;color:#0000ff;line-height:16px;letter-spacing:-0.080px;">98</span>
<span class="t" style="left:795.00px;top:353px;font-family:'Liberation Sans', sans-serif;font-size:12px;font-weight:400;color:#0000ff;line-height:16px;letter-spacing:-0.088px;">0</span>
<span class="t" style="left:904.00px;top:353px;font-family:'Liberation Sans', sans-serif;font-size:12px;font-weight:400;color:#0000ff;line-height:16px;letter-spacing:-0.088px;">1</span>
<span class="t" style="left:960.00px;top:353px;font-family:'Liberation Sans', sans-serif;font-size:12px;font-weight:400;color:#0000ff;line-height:16px;letter-spacing:-0.088px;">1</span>
<span class="t" style="left:1066.00px;top:353px;font-family:'Liberation Sans', sans-serif;font-size:12px;font-weight:400;color:#0000ff;line-height:16px;letter-spacing:-0.088px;">1</span>
<span class="t" style="left:1088.00px;top:353px;font-family:'Liberation Sans', sans-serif;font-size:12px;font-weight:400;color:#008000;line-height:16px;letter-spacing:0.259px;">Enviou e-mail?</span>
<span class="t" style="left:1225.00px;top:353px;font-family:'Liberation Sans', sans-serif;font-size:12px;font-weight:400;color:#008000;line-height:16px;letter-spacing:0.259px;">Enviou e-mail?</span>
<span class="t" style="left:1389.00px;top:353px;font-family:'Liberation Sans', sans-serif;font-size:12px;font-weight:400;color:#008000;line-height:16px;letter-spacing:-0.590px;">BOOL</span>
<span class="t" style="left:1553.60px;top:353px;font-family:'Liberation Sans', sans-serif;font-size:12px;font-weight:400;color:#b4b4ea;line-height:16px;letter-spacing:-0.279px;">(NULL)</span>
<span class="t" style="left:1671.00px;top:353px;font-family:'Liberation Sans', sans-serif;font-size:12px;font-weight:400;color:#0000ff;line-height:16px;letter-spacing:-0.088px;">1</span>
<span class="t" style="left:1785.60px;top:353px;font-family:'Liberation Sans', sans-serif;font-size:12px;font-weight:400;color:#b4b4ea;line-height:16px;letter-spacing:-0.279px;">(NULL)</span>
<span class="t" style="left:1838.00px;top:353px;font-family:'Liberation Sans', sans-serif;font-size:12px;font-weight:400;color:#7fc97f;line-height:16px;letter-spacing:-0.279px;">(NULL)</span>
<span class="t" style="left:379.00px;top:376px;font-family:'Liberation Sans', sans-serif;font-size:12px;font-weight:700;color:#008000;line-height:16px;letter-spacing:0.016px;">EQP_APT_FOTO</span>
<span class="t" style="left:512.00px;top:376px;font-family:'Liberation Sans', sans-serif;font-size:12px;font-weight:700;color:#008000;line-height:16px;letter-spacing:0.100px;">SEQ_DB_DEVICE</span>
<span class="t" style="left:730.80px;top:376px;font-family:'Liberation Sans', sans-serif;font-size:12px;font-weight:400;color:#0000ff;line-height:16px;letter-spacing:-0.077px;">100</span>
<span class="t" style="left:795.00px;top:376px;font-family:'Liberation Sans', sans-serif;font-size:12px;font-weight:400;color:#0000ff;line-height:16px;letter-spacing:-0.088px;">0</span>
<span class="t" style="left:904.00px;top:376px;font-family:'Liberation Sans', sans-serif;font-size:12px;font-weight:400;color:#0000ff;line-height:16px;letter-spacing:-0.088px;">1</span>
<span class="t" style="left:960.00px;top:376px;font-family:'Liberation Sans', sans-serif;font-size:12px;font-weight:400;color:#0000ff;line-height:16px;letter-spacing:-0.088px;">1</span>
<span class="t" style="left:1066.00px;top:376px;font-family:'Liberation Sans', sans-serif;font-size:12px;font-weight:400;color:#0000ff;line-height:16px;letter-spacing:-0.088px;">1</span>
<span class="t" style="left:1088.00px;top:376px;font-family:'Liberation Sans', sans-serif;font-size:12px;font-weight:400;color:#008000;line-height:16px;letter-spacing:0.439px;">Seq Apontamento</span>
<span class="t" style="left:1225.00px;top:376px;font-family:'Liberation Sans', sans-serif;font-size:12px;font-weight:400;color:#008000;line-height:16px;letter-spacing:0.439px;">Seq Apontamento</span>
<span class="t" style="left:1389.00px;top:376px;font-family:'Liberation Sans', sans-serif;font-size:12px;font-weight:400;color:#008000;line-height:16px;letter-spacing:0.109px;">TXT</span>
<span class="t" style="left:1553.60px;top:376px;font-family:'Liberation Sans', sans-serif;font-size:12px;font-weight:400;color:#b4b4ea;line-height:16px;letter-spacing:-0.279px;">(NULL)</span>
<span class="t" style="left:1664.40px;top:376px;font-family:'Liberation Sans', sans-serif;font-size:12px;font-weight:400;color:#0000ff;line-height:16px;letter-spacing:-0.080px;">20</span>
<span class="t" style="left:1785.60px;top:376px;font-family:'Liberation Sans', sans-serif;font-size:12px;font-weight:400;color:#b4b4ea;line-height:16px;letter-spacing:-0.279px;">(NULL)</span>
<span class="t" style="left:1838.00px;top:376px;font-family:'Liberation Sans', sans-serif;font-size:12px;font-weight:400;color:#7fc97f;line-height:16px;letter-spacing:-0.279px;">(NULL)</span>
<span class="t" style="left:379.00px;top:399px;font-family:'Liberation Sans', sans-serif;font-size:12px;font-weight:700;color:#008000;line-height:16px;letter-spacing:0.016px;">EQP_APT_FOTO</span>
<span class="t" style="left:512.00px;top:399px;font-family:'Liberation Sans', sans-serif;font-size:12px;font-weight:700;color:#008000;line-height:16px;letter-spacing:0.198px;">SEQ_DB_DEVICE_MASTER</span>
<span class="t" style="left:730.80px;top:399px;font-family:'Liberation Sans', sans-serif;font-size:12px;font-weight:400;color:#0000ff;line-height:16px;letter-spacing:-0.077px;">102</span>
<span class="t" style="left:795.00px;top:399px;font-family:'Liberation Sans', sans-serif;font-size:12px;font-weight:400;color:#0000ff;line-height:16px;letter-spacing:-0.088px;">0</span>
<span class="t" style="left:904.00px;top:399px;font-family:'Liberation Sans', sans-serif;font-size:12px;font-weight:400;color:#0000ff;line-height:16px;letter-spacing:-0.088px;">1</span>
<span class="t" style="left:960.00px;top:399px;font-family:'Liberation Sans', sans-serif;font-size:12px;font-weight:400;color:#0000ff;line-height:16px;letter-spacing:-0.088px;">1</span>
<span class="t" style="left:1066.00px;top:399px;font-family:'Liberation Sans', sans-serif;font-size:12px;font-weight:400;color:#0000ff;line-height:16px;letter-spacing:-0.088px;">1</span>
<span class="t" style="left:1088.00px;top:399px;font-family:'Liberation Sans', sans-serif;font-size:12px;font-weight:400;color:#008000;line-height:16px;letter-spacing:0.300px;">Seq Boletim</span>
<span class="t" style="left:1225.00px;top:399px;font-family:'Liberation Sans', sans-serif;font-size:12px;font-weight:400;color:#008000;line-height:16px;letter-spacing:0.300px;">Seq Boletim</span>
<span class="t" style="left:1389.00px;top:399px;font-family:'Liberation Sans', sans-serif;font-size:12px;font-weight:400;color:#008000;line-height:16px;letter-spacing:-0.672px;">FK</span>
<span class="t" style="left:1553.60px;top:399px;font-family:'Liberation Sans', sans-serif;font-size:12px;font-weight:400;color:#b4b4ea;line-height:16px;letter-spacing:-0.279px;">(NULL)</span>
<span class="t" style="left:1640.60px;top:399px;font-family:'Liberation Sans', sans-serif;font-size:12px;font-weight:400;color:#b4b4ea;line-height:16px;letter-spacing:-0.279px;">(NULL)</span>
<span class="t" style="left:1785.60px;top:399px;font-family:'Liberation Sans', sans-serif;font-size:12px;font-weight:400;color:#b4b4ea;line-height:16px;letter-spacing:-0.279px;">(NULL)</span>
<span class="t" style="left:1838.00px;top:399px;font-family:'Liberation Sans', sans-serif;font-size:12px;font-weight:400;color:#7fc97f;line-height:16px;letter-spacing:-0.279px;">(NULL)</span>
<span class="t" style="left:379.00px;top:422px;font-family:'Liberation Sans', sans-serif;font-size:12px;font-weight:700;color:#008000;line-height:16px;letter-spacing:0.016px;">EQP_APT_FOTO</span>
<span class="t" style="left:512.00px;top:422px;font-family:'Liberation Sans', sans-serif;font-size:12px;font-weight:700;color:#008000;line-height:16px;letter-spacing:0.082px;">LINK_EQP_BOLETIM</span>
<span class="t" style="left:730.80px;top:422px;font-family:'Liberation Sans', sans-serif;font-size:12px;font-weight:400;color:#0000ff;line-height:16px;letter-spacing:-0.077px;">200</span>
<span class="t" style="left:795.00px;top:422px;font-family:'Liberation Sans', sans-serif;font-size:12px;font-weight:400;color:#0000ff;line-height:16px;letter-spacing:-0.088px;">0</span>
<span class="t" style="left:904.00px;top:422px;font-family:'Liberation Sans', sans-serif;font-size:12px;font-weight:400;color:#0000ff;line-height:16px;letter-spacing:-0.088px;">0</span>
<span class="t" style="left:960.00px;top:422px;font-family:'Liberation Sans', sans-serif;font-size:12px;font-weight:400;color:#0000ff;line-height:16px;letter-spacing:-0.088px;">0</span>
<span class="t" style="left:1066.00px;top:422px;font-family:'Liberation Sans', sans-serif;font-size:12px;font-weight:400;color:#0000ff;line-height:16px;letter-spacing:-0.088px;">0</span>
<span class="t" style="left:1088.00px;top:422px;font-family:'Liberation Sans', sans-serif;font-size:12px;font-weight:400;color:#008000;line-height:16px;letter-spacing:0.283px;">Boletim</span>
<span class="t" style="left:1225.00px;top:422px;font-family:'Liberation Sans', sans-serif;font-size:12px;font-weight:400;color:#008000;line-height:16px;letter-spacing:0.283px;">Boletim</span>
<span class="t" style="left:1389.00px;top:422px;font-family:'Liberation Sans', sans-serif;font-size:12px;font-weight:400;color:#008000;line-height:16px;letter-spacing:-0.422px;">LINK</span>
<span class="t" style="left:1553.60px;top:422px;font-family:'Liberation Sans', sans-serif;font-size:12px;font-weight:400;color:#b4b4ea;line-height:16px;letter-spacing:-0.279px;">(NULL)</span>
<span class="t" style="left:1640.60px;top:422px;font-family:'Liberation Sans', sans-serif;font-size:12px;font-weight:400;color:#b4b4ea;line-height:16px;letter-spacing:-0.279px;">(NULL)</span>
<span class="t" style="left:1785.60px;top:422px;font-family:'Liberation Sans', sans-serif;font-size:12px;font-weight:400;color:#b4b4ea;line-height:16px;letter-spacing:-0.279px;">(NULL)</span>
<span class="t" style="left:1838.00px;top:422px;font-family:'Liberation Sans', sans-serif;font-size:12px;font-weight:400;color:#7fc97f;line-height:16px;letter-spacing:-0.279px;">(NULL)</span>
<span class="t" style="left:399.00px;top:768px;font-family:'Liberation Sans', sans-serif;font-size:12px;font-weight:400;color:#000;line-height:16px;letter-spacing:0.143px;">Filtro:</span>
<span class="t" style="left:436.00px;top:768px;font-family:'Liberation Sans', sans-serif;font-size:12px;font-weight:400;color:#6d6d6d;line-height:16px;letter-spacing:-0.317px;">Expressão regular</span>
<span class="t" style="left:11.50px;top:794.4px;font-family:'Liberation Mono', monospace;font-size:11.67px;font-weight:400;color:#808080;line-height:14px;letter-spacing:-0.333px;">155</span>
<span class="t" style="left:53.00px;top:794.4px;font-family:'Liberation Mono', monospace;font-size:11.67px;font-weight:400;color:#0000ff;line-height:14px;letter-spacing:0.003px;-webkit-text-stroke:0.4px #0000ff;">SELECT</span>
<span class="t" style="left:102.00px;top:794.4px;font-family:'Liberation Mono', monospace;font-size:11.67px;font-weight:400;color:#0000ff;line-height:14px;letter-spacing:0.000px;-webkit-text-stroke:0.15px #0000ff;">*</span>
<span class="t" style="left:116.00px;top:794.4px;font-family:'Liberation Mono', monospace;font-size:11.67px;font-weight:400;color:#0000ff;line-height:14px;letter-spacing:0.004px;-webkit-text-stroke:0.4px #0000ff;">FROM</span>
<span class="t" style="left:151.00px;top:794.4px;font-family:'Liberation Mono', monospace;font-size:11.67px;font-weight:400;color:#808000;line-height:14px;letter-spacing:0.005px;-webkit-text-stroke:0.15px #808000;">`information_schema`</span>
<span class="t" style="left:291.00px;top:794.4px;font-family:'Liberation Mono', monospace;font-size:11.67px;font-weight:400;color:#0000ff;line-height:14px;letter-spacing:0.000px;-webkit-text-stroke:0.15px #0000ff;">.</span>
<span class="t" style="left:298.00px;top:794.4px;font-family:'Liberation Mono', monospace;font-size:11.67px;font-weight:400;color:#808000;line-height:14px;letter-spacing:0.003px;-webkit-text-stroke:0.15px #808000;">`COLUMNS`</span>
<span class="t" style="left:368.00px;top:794.4px;font-family:'Liberation Mono', monospace;font-size:11.67px;font-weight:400;color:#0000ff;line-height:14px;letter-spacing:0.003px;-webkit-text-stroke:0.4px #0000ff;">WHERE</span>
<span class="t" style="left:410.00px;top:794.4px;font-family:'Liberation Mono', monospace;font-size:11.67px;font-weight:400;color:#808000;line-height:14px;letter-spacing:0.004px;-webkit-text-stroke:0.15px #808000;">TABLE_SCHEMA</span>
<span class="t" style="left:494.00px;top:794.4px;font-family:'Liberation Mono', monospace;font-size:11.67px;font-weight:400;color:#0000ff;line-height:14px;letter-spacing:0.000px;-webkit-text-stroke:0.15px #0000ff;">=</span>
<span class="t" style="left:501.00px;top:794.4px;font-family:'Liberation Mono', monospace;font-size:11.67px;font-weight:400;color:#008000;line-height:14px;letter-spacing:0.005px;-webkit-text-stroke:0.15px #008000;">&#x27;nfs_homol_treinamento_pamela&#x27;</span>
<span class="t" style="left:718.00px;top:794.4px;font-family:'Liberation Mono', monospace;font-size:11.67px;font-weight:400;color:#0000ff;line-height:14px;letter-spacing:0.000px;-webkit-text-stroke:0.4px #0000ff;">AND</span>
<span class="t" style="left:746.00px;top:794.4px;font-family:'Liberation Mono', monospace;font-size:11.67px;font-weight:400;color:#0000ff;line-height:14px;letter-spacing:0.005px;-webkit-text-stroke:0.4px #0000ff;">TABLE_NAME</span>
<span class="t" style="left:816.00px;top:794.4px;font-family:'Liberation Mono', monospace;font-size:11.67px;font-weight:400;color:#0000ff;line-height:14px;letter-spacing:0.000px;-webkit-text-stroke:0.15px #0000ff;">=</span>
<span class="t" style="left:823.00px;top:794.4px;font-family:'Liberation Mono', monospace;font-size:11.67px;font-weight:400;color:#008000;line-height:14px;letter-spacing:0.005px;-webkit-text-stroke:0.15px #008000;">&#x27;nfs_core_ds_tabela&#x27;</span>
<span class="t" style="left:970.00px;top:794.4px;font-family:'Liberation Mono', monospace;font-size:11.67px;font-weight:400;color:#0000ff;line-height:14px;letter-spacing:0.003px;-webkit-text-stroke:0.4px #0000ff;">ORDER</span>
<span class="t" style="left:1012.00px;top:794.4px;font-family:'Liberation Mono', monospace;font-size:11.67px;font-weight:400;color:#0000ff;line-height:14px;letter-spacing:0.000px;-webkit-text-stroke:0.4px #0000ff;">BY</span>
<span class="t" style="left:1033.00px;top:794.4px;font-family:'Liberation Mono', monospace;font-size:11.67px;font-weight:400;color:#808000;line-height:14px;letter-spacing:0.005px;-webkit-text-stroke:0.15px #808000;">ORDINAL_POSITION</span>
<span class="t" style="left:1145.00px;top:794.4px;font-family:'Liberation Mono', monospace;font-size:11.67px;font-weight:400;color:#0000ff;line-height:14px;letter-spacing:0.000px;-webkit-text-stroke:0.15px #0000ff;">;</span>
<span class="t" style="left:11.50px;top:808.4px;font-family:'Liberation Mono', monospace;font-size:11.67px;font-weight:400;color:#808080;line-height:14px;letter-spacing:-0.333px;">156</span>
<span class="t" style="left:53.00px;top:808.4px;font-family:'Liberation Mono', monospace;font-size:11.67px;font-weight:400;color:#0000ff;line-height:14px;letter-spacing:0.004px;-webkit-text-stroke:0.4px #0000ff;">SHOW</span>
<span class="t" style="left:88.00px;top:808.4px;font-family:'Liberation Mono', monospace;font-size:11.67px;font-weight:400;color:#0000ff;line-height:14px;letter-spacing:0.004px;-webkit-text-stroke:0.4px #0000ff;">INDEXES</span>
<span class="t" style="left:144.00px;top:808.4px;font-family:'Liberation Mono', monospace;font-size:11.67px;font-weight:400;color:#0000ff;line-height:14px;letter-spacing:0.004px;-webkit-text-stroke:0.4px #0000ff;">FROM</span>
<span class="t" style="left:179.00px;top:808.4px;font-family:'Liberation Mono', monospace;font-size:11.67px;font-weight:400;color:#808000;line-height:14px;letter-spacing:0.005px;-webkit-text-stroke:0.15px #808000;">`nfs_core_ds_tabela`</span>
<span class="t" style="left:326.00px;top:808.4px;font-family:'Liberation Mono', monospace;font-size:11.67px;font-weight:400;color:#0000ff;line-height:14px;letter-spacing:0.004px;-webkit-text-stroke:0.4px #0000ff;">FROM</span>
<span class="t" style="left:361.00px;top:808.4px;font-family:'Liberation Mono', monospace;font-size:11.67px;font-weight:400;color:#808000;line-height:14px;letter-spacing:0.005px;-webkit-text-stroke:0.15px #808000;">`nfs_homol_treinamento_pamela`</span>
<span class="t" style="left:571.00px;top:808.4px;font-family:'Liberation Mono', monospace;font-size:11.67px;font-weight:400;color:#0000ff;line-height:14px;letter-spacing:0.000px;-webkit-text-stroke:0.15px #0000ff;">;</span>
<span class="t" style="left:11.50px;top:822.4px;font-family:'Liberation Mono', monospace;font-size:11.67px;font-weight:400;color:#808080;line-height:14px;letter-spacing:-0.333px;">157</span>
<span class="t" style="left:53.00px;top:822.4px;font-family:'Liberation Mono', monospace;font-size:11.67px;font-weight:400;color:#0000ff;line-height:14px;letter-spacing:0.003px;-webkit-text-stroke:0.4px #0000ff;">SELECT</span>
<span class="t" style="left:102.00px;top:822.4px;font-family:'Liberation Mono', monospace;font-size:11.67px;font-weight:400;color:#0000ff;line-height:14px;letter-spacing:0.000px;-webkit-text-stroke:0.15px #0000ff;">*</span>
<span class="t" style="left:116.00px;top:822.4px;font-family:'Liberation Mono', monospace;font-size:11.67px;font-weight:400;color:#0000ff;line-height:14px;letter-spacing:0.004px;-webkit-text-stroke:0.4px #0000ff;">FROM</span>
<span class="t" style="left:151.00px;top:822.4px;font-family:'Liberation Mono', monospace;font-size:11.67px;font-weight:400;color:#808000;line-height:14px;letter-spacing:0.004px;-webkit-text-stroke:0.15px #808000;">information_schema</span>
<span class="t" style="left:277.00px;top:822.4px;font-family:'Liberation Mono', monospace;font-size:11.67px;font-weight:400;color:#0000ff;line-height:14px;letter-spacing:0.000px;-webkit-text-stroke:0.15px #0000ff;">.</span>
<span class="t" style="left:284.00px;top:822.4px;font-family:'Liberation Mono', monospace;font-size:11.67px;font-weight:400;color:#808000;line-height:14px;letter-spacing:0.005px;-webkit-text-stroke:0.15px #808000;">REFERENTIAL_CONSTRAINTS</span>
<span class="t" style="left:452.00px;top:822.4px;font-family:'Liberation Mono', monospace;font-size:11.67px;font-weight:400;color:#0000ff;line-height:14px;letter-spacing:0.003px;-webkit-text-stroke:0.4px #0000ff;">WHERE</span>
<span class="t" style="left:508.00px;top:822.4px;font-family:'Liberation Mono', monospace;font-size:11.67px;font-weight:400;color:#0000ff;line-height:14px;letter-spacing:0.005px;-webkit-text-stroke:0.4px #0000ff;">CONSTRAINT_SCHEMA</span>
<span class="t" style="left:627.00px;top:822.4px;font-family:'Liberation Mono', monospace;font-size:11.67px;font-weight:400;color:#0000ff;line-height:14px;letter-spacing:0.000px;-webkit-text-stroke:0.15px #0000ff;">=</span>
<span class="t" style="left:634.00px;top:822.4px;font-family:'Liberation Mono', monospace;font-size:11.67px;font-weight:400;color:#008000;line-height:14px;letter-spacing:0.005px;-webkit-text-stroke:0.15px #008000;">&#x27;nfs_homol_treinamento_pamela&#x27;</span>
<span class="t" style="left:865.00px;top:822.4px;font-family:'Liberation Mono', monospace;font-size:11.67px;font-weight:400;color:#0000ff;line-height:14px;letter-spacing:0.000px;-webkit-text-stroke:0.4px #0000ff;">AND</span>
<span class="t" style="left:893.00px;top:822.4px;font-family:'Liberation Mono', monospace;font-size:11.67px;font-weight:400;color:#0000ff;line-height:14px;letter-spacing:0.005px;-webkit-text-stroke:0.4px #0000ff;">TABLE_NAME</span>
<span class="t" style="left:963.00px;top:822.4px;font-family:'Liberation Mono', monospace;font-size:11.67px;font-weight:400;color:#0000ff;line-height:14px;letter-spacing:0.000px;-webkit-text-stroke:0.15px #0000ff;">=</span>
<span class="t" style="left:970.00px;top:822.4px;font-family:'Liberation Mono', monospace;font-size:11.67px;font-weight:400;color:#008000;line-height:14px;letter-spacing:0.005px;-webkit-text-stroke:0.15px #008000;">&#x27;nfs_core_ds_tabela&#x27;</span>
<span class="t" style="left:1131.00px;top:822.4px;font-family:'Liberation Mono', monospace;font-size:11.67px;font-weight:400;color:#0000ff;line-height:14px;letter-spacing:0.000px;-webkit-text-stroke:0.4px #0000ff;">AND</span>
<span class="t" style="left:1159.00px;top:822.4px;font-family:'Liberation Mono', monospace;font-size:11.67px;font-weight:400;color:#808000;line-height:14px;letter-spacing:0.004px;-webkit-text-stroke:0.15px #808000;">REFERENCED_TABLE_NAME</span>
<span class="t" style="left:1313.00px;top:822.4px;font-family:'Liberation Mono', monospace;font-size:11.67px;font-weight:400;color:#0000ff;line-height:14px;letter-spacing:0.000px;-webkit-text-stroke:0.4px #0000ff;">IS</span>
<span class="t" style="left:1334.00px;top:822.4px;font-family:'Liberation Mono', monospace;font-size:11.67px;font-weight:400;color:#0000ff;line-height:14px;letter-spacing:0.000px;-webkit-text-stroke:0.4px #0000ff;">NOT</span>
<span class="t" style="left:1362.00px;top:822.4px;font-family:'Liberation Mono', monospace;font-size:11.67px;font-weight:400;color:#0000ff;line-height:14px;letter-spacing:0.004px;-webkit-text-stroke:0.4px #0000ff;">NULL</span>
<span class="t" style="left:1390.00px;top:822.4px;font-family:'Liberation Mono', monospace;font-size:11.67px;font-weight:400;color:#0000ff;line-height:14px;letter-spacing:0.000px;-webkit-text-stroke:0.15px #0000ff;">;</span>
<span class="t" style="left:11.50px;top:836.4px;font-family:'Liberation Mono', monospace;font-size:11.67px;font-weight:400;color:#808080;line-height:14px;letter-spacing:-0.333px;">158</span>
<span class="t" style="left:53.00px;top:836.4px;font-family:'Liberation Mono', monospace;font-size:11.67px;font-weight:400;color:#0000ff;line-height:14px;letter-spacing:0.003px;-webkit-text-stroke:0.4px #0000ff;">SELECT</span>
<span class="t" style="left:102.00px;top:836.4px;font-family:'Liberation Mono', monospace;font-size:11.67px;font-weight:400;color:#0000ff;line-height:14px;letter-spacing:0.000px;-webkit-text-stroke:0.15px #0000ff;">*</span>
<span class="t" style="left:116.00px;top:836.4px;font-family:'Liberation Mono', monospace;font-size:11.67px;font-weight:400;color:#0000ff;line-height:14px;letter-spacing:0.004px;-webkit-text-stroke:0.4px #0000ff;">FROM</span>
<span class="t" style="left:151.00px;top:836.4px;font-family:'Liberation Mono', monospace;font-size:11.67px;font-weight:400;color:#808000;line-height:14px;letter-spacing:0.004px;-webkit-text-stroke:0.15px #808000;">information_schema</span>
<span class="t" style="left:277.00px;top:836.4px;font-family:'Liberation Mono', monospace;font-size:11.67px;font-weight:400;color:#0000ff;line-height:14px;letter-spacing:0.000px;-webkit-text-stroke:0.15px #0000ff;">.</span>
<span class="t" style="left:284.00px;top:836.4px;font-family:'Liberation Mono', monospace;font-size:11.67px;font-weight:400;color:#808000;line-height:14px;letter-spacing:0.005px;-webkit-text-stroke:0.15px #808000;">KEY_COLUMN_USAGE</span>
<span class="t" style="left:403.00px;top:836.4px;font-family:'Liberation Mono', monospace;font-size:11.67px;font-weight:400;color:#0000ff;line-height:14px;letter-spacing:0.003px;-webkit-text-stroke:0.4px #0000ff;">WHERE</span>
<span class="t" style="left:459.00px;top:836.4px;font-family:'Liberation Mono', monospace;font-size:11.67px;font-weight:400;color:#808000;line-height:14px;letter-spacing:0.004px;-webkit-text-stroke:0.15px #808000;">TABLE_SCHEMA</span>
<span class="t" style="left:543.00px;top:836.4px;font-family:'Liberation Mono', monospace;font-size:11.67px;font-weight:400;color:#0000ff;line-height:14px;letter-spacing:0.000px;-webkit-text-stroke:0.15px #0000ff;">=</span>
<span class="t" style="left:550.00px;top:836.4px;font-family:'Liberation Mono', monospace;font-size:11.67px;font-weight:400;color:#008000;line-height:14px;letter-spacing:0.005px;-webkit-text-stroke:0.15px #008000;">&#x27;nfs_homol_treinamento_pamela&#x27;</span>
<span class="t" style="left:781.00px;top:836.4px;font-family:'Liberation Mono', monospace;font-size:11.67px;font-weight:400;color:#0000ff;line-height:14px;letter-spacing:0.000px;-webkit-text-stroke:0.4px #0000ff;">AND</span>
<span class="t" style="left:809.00px;top:836.4px;font-family:'Liberation Mono', monospace;font-size:11.67px;font-weight:400;color:#0000ff;line-height:14px;letter-spacing:0.005px;-webkit-text-stroke:0.4px #0000ff;">TABLE_NAME</span>
<span class="t" style="left:879.00px;top:836.4px;font-family:'Liberation Mono', monospace;font-size:11.67px;font-weight:400;color:#0000ff;line-height:14px;letter-spacing:0.000px;-webkit-text-stroke:0.15px #0000ff;">=</span>
<span class="t" style="left:886.00px;top:836.4px;font-family:'Liberation Mono', monospace;font-size:11.67px;font-weight:400;color:#008000;line-height:14px;letter-spacing:0.005px;-webkit-text-stroke:0.15px #008000;">&#x27;nfs_core_ds_tabela&#x27;</span>
<span class="t" style="left:1047.00px;top:836.4px;font-family:'Liberation Mono', monospace;font-size:11.67px;font-weight:400;color:#0000ff;line-height:14px;letter-spacing:0.000px;-webkit-text-stroke:0.4px #0000ff;">AND</span>
<span class="t" style="left:1075.00px;top:836.4px;font-family:'Liberation Mono', monospace;font-size:11.67px;font-weight:400;color:#808000;line-height:14px;letter-spacing:0.004px;-webkit-text-stroke:0.15px #808000;">REFERENCED_TABLE_NAME</span>
<span class="t" style="left:1229.00px;top:836.4px;font-family:'Liberation Mono', monospace;font-size:11.67px;font-weight:400;color:#0000ff;line-height:14px;letter-spacing:0.000px;-webkit-text-stroke:0.4px #0000ff;">IS</span>
<span class="t" style="left:1250.00px;top:836.4px;font-family:'Liberation Mono', monospace;font-size:11.67px;font-weight:400;color:#0000ff;line-height:14px;letter-spacing:0.000px;-webkit-text-stroke:0.4px #0000ff;">NOT</span>
<span class="t" style="left:1278.00px;top:836.4px;font-family:'Liberation Mono', monospace;font-size:11.67px;font-weight:400;color:#0000ff;line-height:14px;letter-spacing:0.004px;-webkit-text-stroke:0.4px #0000ff;">NULL</span>
<span class="t" style="left:1306.00px;top:836.4px;font-family:'Liberation Mono', monospace;font-size:11.67px;font-weight:400;color:#0000ff;line-height:14px;letter-spacing:0.000px;-webkit-text-stroke:0.15px #0000ff;">;</span>
<span class="t" style="left:11.50px;top:850.4px;font-family:'Liberation Mono', monospace;font-size:11.67px;font-weight:400;color:#808080;line-height:14px;letter-spacing:-0.333px;">159</span>
<span class="t" style="left:53.00px;top:850.4px;font-family:'Liberation Mono', monospace;font-size:11.67px;font-weight:400;color:#0000ff;line-height:14px;letter-spacing:0.004px;-webkit-text-stroke:0.4px #0000ff;">SHOW</span>
<span class="t" style="left:88.00px;top:850.4px;font-family:'Liberation Mono', monospace;font-size:11.67px;font-weight:400;color:#0000ff;line-height:14px;letter-spacing:0.003px;-webkit-text-stroke:0.4px #0000ff;">CREATE</span>
<span class="t" style="left:137.00px;top:850.4px;font-family:'Liberation Mono', monospace;font-size:11.67px;font-weight:400;color:#0000ff;line-height:14px;letter-spacing:0.003px;-webkit-text-stroke:0.4px #0000ff;">TABLE</span>
<span class="t" style="left:179.00px;top:850.4px;font-family:'Liberation Mono', monospace;font-size:11.67px;font-weight:400;color:#808000;line-height:14px;letter-spacing:0.005px;-webkit-text-stroke:0.15px #808000;">`nfs_homol_treinamento_pamela`</span>
<span class="t" style="left:389.00px;top:850.4px;font-family:'Liberation Mono', monospace;font-size:11.67px;font-weight:400;color:#0000ff;line-height:14px;letter-spacing:0.000px;-webkit-text-stroke:0.15px #0000ff;">.</span>
<span class="t" style="left:396.00px;top:850.4px;font-family:'Liberation Mono', monospace;font-size:11.67px;font-weight:400;color:#808000;line-height:14px;letter-spacing:0.005px;-webkit-text-stroke:0.15px #808000;">`nfs_core_ds_tabela`</span>
<span class="t" style="left:536.00px;top:850.4px;font-family:'Liberation Mono', monospace;font-size:11.67px;font-weight:400;color:#0000ff;line-height:14px;letter-spacing:0.000px;-webkit-text-stroke:0.15px #0000ff;">;</span>
<span class="t" style="left:11.50px;top:864.4px;font-family:'Liberation Mono', monospace;font-size:11.67px;font-weight:400;color:#808080;line-height:14px;letter-spacing:-0.333px;">160</span>
<span class="t" style="left:53.00px;top:864.4px;font-family:'Liberation Mono', monospace;font-size:11.67px;font-weight:400;color:#0000ff;line-height:14px;letter-spacing:0.003px;-webkit-text-stroke:0.4px #0000ff;">SELECT</span>
<span class="t" style="left:102.00px;top:864.4px;font-family:'Liberation Mono', monospace;font-size:11.67px;font-weight:400;color:#808000;line-height:14px;letter-spacing:0.000px;-webkit-text-stroke:0.15px #808000;">tc</span>
<span class="t" style="left:116.00px;top:864.4px;font-family:'Liberation Mono', monospace;font-size:11.67px;font-weight:400;color:#0000ff;line-height:14px;letter-spacing:0.000px;-webkit-text-stroke:0.15px #0000ff;">.</span>
<span class="t" style="left:123.00px;top:864.4px;font-family:'Liberation Mono', monospace;font-size:11.67px;font-weight:400;color:#0000ff;line-height:14px;letter-spacing:0.004px;-webkit-text-stroke:0.4px #0000ff;">CONSTRAINT_NAME</span>
<span class="t" style="left:228.00px;top:864.4px;font-family:'Liberation Mono', monospace;font-size:11.67px;font-weight:400;color:#0000ff;line-height:14px;letter-spacing:0.000px;-webkit-text-stroke:0.15px #0000ff;">,</span>
<span class="t" style="left:242.00px;top:864.4px;font-family:'Liberation Mono', monospace;font-size:11.67px;font-weight:400;color:#808000;line-height:14px;letter-spacing:0.000px;-webkit-text-stroke:0.15px #808000;">cc</span>
<span class="t" style="left:256.00px;top:864.4px;font-family:'Liberation Mono', monospace;font-size:11.67px;font-weight:400;color:#0000ff;line-height:14px;letter-spacing:0.000px;-webkit-text-stroke:0.15px #0000ff;">.</span>
<span class="t" style="left:263.00px;top:864.4px;font-family:'Liberation Mono', monospace;font-size:11.67px;font-weight:400;color:#808000;line-height:14px;letter-spacing:0.004px;-webkit-text-stroke:0.15px #808000;">CHECK_CLAUSE</span>
<span class="t" style="left:354.00px;top:864.4px;font-family:'Liberation Mono', monospace;font-size:11.67px;font-weight:400;color:#0000ff;line-height:14px;letter-spacing:0.004px;-webkit-text-stroke:0.4px #0000ff;">FROM</span>
<span class="t" style="left:389.00px;top:864.4px;font-family:'Liberation Mono', monospace;font-size:11.67px;font-weight:400;color:#808000;line-height:14px;letter-spacing:0.005px;-webkit-text-stroke:0.15px #808000;">`information_schema`</span>
<span class="t" style="left:529.00px;top:864.4px;font-family:'Liberation Mono', monospace;font-size:11.67px;font-weight:400;color:#0000ff;line-height:14px;letter-spacing:0.000px;-webkit-text-stroke:0.15px #0000ff;">.</span>
<span class="t" style="left:536.00px;top:864.4px;font-family:'Liberation Mono', monospace;font-size:11.67px;font-weight:400;color:#808000;line-height:14px;letter-spacing:0.005px;-webkit-text-stroke:0.15px #808000;">`CHECK_CONSTRAINTS`</span>
<span class="t" style="left:676.00px;top:864.4px;font-family:'Liberation Mono', monospace;font-size:11.67px;font-weight:400;color:#0000ff;line-height:14px;letter-spacing:0.000px;-webkit-text-stroke:0.4px #0000ff;">AS</span>
<span class="t" style="left:697.00px;top:864.4px;font-family:'Liberation Mono', monospace;font-size:11.67px;font-weight:400;color:#808000;line-height:14px;letter-spacing:0.000px;-webkit-text-stroke:0.15px #808000;">cc</span>
<span class="t" style="left:711.00px;top:864.4px;font-family:'Liberation Mono', monospace;font-size:11.67px;font-weight:400;color:#0000ff;line-height:14px;letter-spacing:0.000px;-webkit-text-stroke:0.15px #0000ff;">,</span>
<span class="t" style="left:725.00px;top:864.4px;font-family:'Liberation Mono', monospace;font-size:11.67px;font-weight:400;color:#808000;line-height:14px;letter-spacing:0.005px;-webkit-text-stroke:0.15px #808000;">`information_schema`</span>
<span class="t" style="left:865.00px;top:864.4px;font-family:'Liberation Mono', monospace;font-size:11.67px;font-weight:400;color:#0000ff;line-height:14px;letter-spacing:0.000px;-webkit-text-stroke:0.15px #0000ff;">.</span>
<span class="t" style="left:872.00px;top:864.4px;font-family:'Liberation Mono', monospace;font-size:11.67px;font-weight:400;color:#808000;line-height:14px;letter-spacing:0.005px;-webkit-text-stroke:0.15px #808000;">`TABLE_CONSTRAINTS`</span>
<span class="t" style="left:1012.00px;top:864.4px;font-family:'Liberation Mono', monospace;font-size:11.67px;font-weight:400;color:#0000ff;line-height:14px;letter-spacing:0.000px;-webkit-text-stroke:0.4px #0000ff;">AS</span>
<span class="t" style="left:1033.00px;top:864.4px;font-family:'Liberation Mono', monospace;font-size:11.67px;font-weight:400;color:#808000;line-height:14px;letter-spacing:0.000px;-webkit-text-stroke:0.15px #808000;">tc</span>
<span class="t" style="left:1054.00px;top:864.4px;font-family:'Liberation Mono', monospace;font-size:11.67px;font-weight:400;color:#0000ff;line-height:14px;letter-spacing:0.003px;-webkit-text-stroke:0.4px #0000ff;">WHERE</span>
<span class="t" style="left:1096.00px;top:864.4px;font-family:'Liberation Mono', monospace;font-size:11.67px;font-weight:400;color:#808000;line-height:14px;letter-spacing:0.000px;-webkit-text-stroke:0.15px #808000;">tc</span>
<span class="t" style="left:1110.00px;top:864.4px;font-family:'Liberation Mono', monospace;font-size:11.67px;font-weight:400;color:#0000ff;line-height:14px;letter-spacing:0.000px;-webkit-text-stroke:0.15px #0000ff;">.</span>
<span class="t" style="left:1117.00px;top:864.4px;font-family:'Liberation Mono', monospace;font-size:11.67px;font-weight:400;color:#0000ff;line-height:14px;letter-spacing:0.005px;-webkit-text-stroke:0.4px #0000ff;">CONSTRAINT_SCHEMA</span>
<span class="t" style="left:1236.00px;top:864.4px;font-family:'Liberation Mono', monospace;font-size:11.67px;font-weight:400;color:#0000ff;line-height:14px;letter-spacing:0.000px;-webkit-text-stroke:0.15px #0000ff;">=</span>
<span class="t" style="left:1243.00px;top:864.4px;font-family:'Liberation Mono', monospace;font-size:11.67px;font-weight:400;color:#008000;line-height:14px;letter-spacing:0.005px;-webkit-text-stroke:0.15px #008000;">&#x27;nfs_homol_treinamento_pamela&#x27;</span>
<span class="t" style="left:1460.00px;top:864.4px;font-family:'Liberation Mono', monospace;font-size:11.67px;font-weight:400;color:#0000ff;line-height:14px;letter-spacing:0.000px;-webkit-text-stroke:0.4px #0000ff;">AND</span>
<span class="t" style="left:1488.00px;top:864.4px;font-family:'Liberation Mono', monospace;font-size:11.67px;font-weight:400;color:#808000;line-height:14px;letter-spacing:0.000px;-webkit-text-stroke:0.15px #808000;">tc</span>
<span class="t" style="left:1502.00px;top:864.4px;font-family:'Liberation Mono', monospace;font-size:11.67px;font-weight:400;color:#0000ff;line-height:14px;letter-spacing:0.000px;-webkit-text-stroke:0.15px #0000ff;">.</span>
<span class="t" style="left:1509.00px;top:864.4px;font-family:'Liberation Mono', monospace;font-size:11.67px;font-weight:400;color:#0000ff;line-height:14px;letter-spacing:0.005px;-webkit-text-stroke:0.4px #0000ff;">TABLE_NAME</span>
<span class="t" style="left:1579.00px;top:864.4px;font-family:'Liberation Mono', monospace;font-size:11.67px;font-weight:400;color:#0000ff;line-height:14px;letter-spacing:0.000px;-webkit-text-stroke:0.15px #0000ff;">=</span>
<span class="t" style="left:1586.00px;top:864.4px;font-family:'Liberation Mono', monospace;font-size:11.67px;font-weight:400;color:#008000;line-height:14px;letter-spacing:0.005px;-webkit-text-stroke:0.15px #008000;">&#x27;nfs_core_ds_tabela&#x27;</span>
<span class="t" style="left:1733.00px;top:864.4px;font-family:'Liberation Mono', monospace;font-size:11.67px;font-weight:400;color:#0000ff;line-height:14px;letter-spacing:0.000px;-webkit-text-stroke:0.4px #0000ff;">AND</span>
<span class="t" style="left:1761.00px;top:864.4px;font-family:'Liberation Mono', monospace;font-size:11.67px;font-weight:400;color:#808000;line-height:14px;letter-spacing:0.000px;-webkit-text-stroke:0.15px #808000;">tc</span>
<span class="t" style="left:1775.00px;top:864.4px;font-family:'Liberation Mono', monospace;font-size:11.67px;font-weight:400;color:#0000ff;line-height:14px;letter-spacing:0.000px;-webkit-text-stroke:0.15px #0000ff;">.</span>
<span class="t" style="left:1782.00px;top:864.4px;font-family:'Liberation Mono', monospace;font-size:11.67px;font-weight:400;color:#808000;line-height:14px;letter-spacing:0.004px;-webkit-text-stroke:0.15px #808000;">CONSTRAINT_TYPE</span>
<span class="t" style="left:1887.00px;top:864.4px;font-family:'Liberation Mono', monospace;font-size:11.67px;font-weight:400;color:#0000ff;line-height:14px;letter-spacing:0.000px;-webkit-text-stroke:0.15px #0000ff;">=</span>
<span class="t" style="left:1894.00px;top:864.4px;font-family:'Liberation Mono', monospace;font-size:11.67px;font-weight:400;color:#008000;line-height:14px;letter-spacing:0.000px;-webkit-text-stroke:0.15px #008000;">&#x27;</span>
<span class="t" style="left:11.50px;top:878.4px;font-family:'Liberation Mono', monospace;font-size:11.67px;font-weight:400;color:#808080;line-height:14px;letter-spacing:-0.333px;">161</span>
<span class="t" style="left:53.00px;top:878.4px;font-family:'Liberation Mono', monospace;font-size:11.67px;font-weight:400;color:#0000ff;line-height:14px;letter-spacing:0.003px;-webkit-text-stroke:0.4px #0000ff;">SELECT</span>
<span class="t" style="left:109.00px;top:878.4px;font-family:'Liberation Mono', monospace;font-size:11.67px;font-weight:400;color:#808000;line-height:14px;letter-spacing:0.003px;-webkit-text-stroke:0.15px #808000;">`NOME`</span>
<span class="t" style="left:151.00px;top:878.4px;font-family:'Liberation Mono', monospace;font-size:11.67px;font-weight:400;color:#0000ff;line-height:14px;letter-spacing:0.000px;-webkit-text-stroke:0.15px #0000ff;">,</span>
<span class="t" style="left:172.00px;top:878.4px;font-family:'Liberation Mono', monospace;font-size:11.67px;font-weight:400;color:#808000;line-height:14px;letter-spacing:0.005px;-webkit-text-stroke:0.15px #808000;">`TABELA_REAL`</span>
<span class="t" style="left:263.00px;top:878.4px;font-family:'Liberation Mono', monospace;font-size:11.67px;font-weight:400;color:#0000ff;line-height:14px;letter-spacing:0.000px;-webkit-text-stroke:0.15px #0000ff;">,</span>
<span class="t" style="left:277.00px;top:878.4px;font-family:'Liberation Mono', monospace;font-size:11.67px;font-weight:400;color:#000080;line-height:14px;letter-spacing:0.004px;-webkit-text-stroke:0.4px #000080;">LEFT</span>
<span class="t" style="left:305.00px;top:878.4px;font-family:'Liberation Mono', monospace;font-size:11.67px;font-weight:400;color:#0000ff;line-height:14px;letter-spacing:0.000px;-webkit-text-stroke:0.15px #0000ff;">(</span>
<span class="t" style="left:312.00px;top:878.4px;font-family:'Liberation Mono', monospace;font-size:11.67px;font-weight:400;color:#808000;line-height:14px;letter-spacing:0.004px;-webkit-text-stroke:0.15px #808000;">`DESCRICAO`</span>
<span class="t" style="left:389.00px;top:878.4px;font-family:'Liberation Mono', monospace;font-size:11.67px;font-weight:400;color:#0000ff;line-height:14px;letter-spacing:0.000px;-webkit-text-stroke:0.15px #0000ff;">,</span>
<span class="t" style="left:403.00px;top:878.4px;font-family:'Liberation Mono', monospace;font-size:11.67px;font-weight:400;color:#800080;line-height:14px;letter-spacing:0.000px;-webkit-text-stroke:0.15px #800080;">256</span>
<span class="t" style="left:424.00px;top:878.4px;font-family:'Liberation Mono', monospace;font-size:11.67px;font-weight:400;color:#0000ff;line-height:14px;letter-spacing:0.000px;-webkit-text-stroke:0.15px #0000ff;">)</span>
<span class="t" style="left:431.00px;top:878.4px;font-family:'Liberation Mono', monospace;font-size:11.67px;font-weight:400;color:#0000ff;line-height:14px;letter-spacing:0.000px;-webkit-text-stroke:0.15px #0000ff;">,</span>
<span class="t" style="left:452.00px;top:878.4px;font-family:'Liberation Mono', monospace;font-size:11.67px;font-weight:400;color:#808000;line-height:14px;letter-spacing:0.003px;-webkit-text-stroke:0.15px #808000;">`UNQ`</span>
<span class="t" style="left:487.00px;top:878.4px;font-family:'Liberation Mono', monospace;font-size:11.67px;font-weight:400;color:#0000ff;line-height:14px;letter-spacing:0.000px;-webkit-text-stroke:0.15px #0000ff;">,</span>
<span class="t" style="left:508.00px;top:878.4px;font-family:'Liberation Mono', monospace;font-size:11.67px;font-weight:400;color:#808000;line-height:14px;letter-spacing:0.003px;-webkit-text-stroke:0.15px #808000;">`DISPLAY`</span>
<span class="t" style="left:571.00px;top:878.4px;font-family:'Liberation Mono', monospace;font-size:11.67px;font-weight:400;color:#0000ff;line-height:14px;letter-spacing:0.000px;-webkit-text-stroke:0.15px #0000ff;">,</span>
<span class="t" style="left:592.00px;top:878.4px;font-family:'Liberation Mono', monospace;font-size:11.67px;font-weight:400;color:#808000;line-height:14px;letter-spacing:0.003px;-webkit-text-stroke:0.15px #808000;">`TIPO`</span>
<span class="t" style="left:634.00px;top:878.4px;font-family:'Liberation Mono', monospace;font-size:11.67px;font-weight:400;color:#0000ff;line-height:14px;letter-spacing:0.000px;-webkit-text-stroke:0.15px #0000ff;">,</span>
<span class="t" style="left:655.00px;top:878.4px;font-family:'Liberation Mono', monospace;font-size:11.67px;font-weight:400;color:#808000;line-height:14px;letter-spacing:0.004px;-webkit-text-stroke:0.15px #808000;">`MOBILE_TABLE`</span>
<span class="t" style="left:753.00px;top:878.4px;font-family:'Liberation Mono', monospace;font-size:11.67px;font-weight:400;color:#0000ff;line-height:14px;letter-spacing:0.000px;-webkit-text-stroke:0.15px #0000ff;">,</span>
<span class="t" style="left:774.00px;top:878.4px;font-family:'Liberation Mono', monospace;font-size:11.67px;font-weight:400;color:#808000;line-height:14px;letter-spacing:0.005px;-webkit-text-stroke:0.15px #808000;">`MOBILE_MESSAGE`</span>
<span class="t" style="left:886.00px;top:878.4px;font-family:'Liberation Mono', monospace;font-size:11.67px;font-weight:400;color:#0000ff;line-height:14px;letter-spacing:0.000px;-webkit-text-stroke:0.15px #0000ff;">,</span>
<span class="t" style="left:907.00px;top:878.4px;font-family:'Liberation Mono', monospace;font-size:11.67px;font-weight:400;color:#808000;line-height:14px;letter-spacing:0.005px;-webkit-text-stroke:0.15px #808000;">`MOBILE_MESSAGE_FK`</span>
<span class="t" style="left:1040.00px;top:878.4px;font-family:'Liberation Mono', monospace;font-size:11.67px;font-weight:400;color:#0000ff;line-height:14px;letter-spacing:0.000px;-webkit-text-stroke:0.15px #0000ff;">,</span>
<span class="t" style="left:1061.00px;top:878.4px;font-family:'Liberation Mono', monospace;font-size:11.67px;font-weight:400;color:#808000;line-height:14px;letter-spacing:0.005px;-webkit-text-stroke:0.15px #808000;">`FILTRO_USER`</span>
<span class="t" style="left:1152.00px;top:878.4px;font-family:'Liberation Mono', monospace;font-size:11.67px;font-weight:400;color:#0000ff;line-height:14px;letter-spacing:0.000px;-webkit-text-stroke:0.15px #0000ff;">,</span>
<span class="t" style="left:1173.00px;top:878.4px;font-family:'Liberation Mono', monospace;font-size:11.67px;font-weight:400;color:#808000;line-height:14px;letter-spacing:0.005px;-webkit-text-stroke:0.15px #808000;">`MAX_ROWS_WO_FILTER`</span>
<span class="t" style="left:1313.00px;top:878.4px;font-family:'Liberation Mono', monospace;font-size:11.67px;font-weight:400;color:#0000ff;line-height:14px;letter-spacing:0.000px;-webkit-text-stroke:0.15px #0000ff;">,</span>
<span class="t" style="left:1327.00px;top:878.4px;font-family:'Liberation Mono', monospace;font-size:11.67px;font-weight:400;color:#000080;line-height:14px;letter-spacing:0.004px;-webkit-text-stroke:0.4px #000080;">LEFT</span>
<span class="t" style="left:1355.00px;top:878.4px;font-family:'Liberation Mono', monospace;font-size:11.67px;font-weight:400;color:#0000ff;line-height:14px;letter-spacing:0.000px;-webkit-text-stroke:0.15px #0000ff;">(</span>
<span class="t" style="left:1362.00px;top:878.4px;font-family:'Liberation Mono', monospace;font-size:11.67px;font-weight:400;color:#808000;line-height:14px;letter-spacing:0.003px;-webkit-text-stroke:0.15px #808000;">`OPTIONS`</span>
<span class="t" style="left:1425.00px;top:878.4px;font-family:'Liberation Mono', monospace;font-size:11.67px;font-weight:400;color:#0000ff;line-height:14px;letter-spacing:0.000px;-webkit-text-stroke:0.15px #0000ff;">,</span>
<span class="t" style="left:1439.00px;top:878.4px;font-family:'Liberation Mono', monospace;font-size:11.67px;font-weight:400;color:#800080;line-height:14px;letter-spacing:0.000px;-webkit-text-stroke:0.15px #800080;">256</span>
<span class="t" style="left:1460.00px;top:878.4px;font-family:'Liberation Mono', monospace;font-size:11.67px;font-weight:400;color:#0000ff;line-height:14px;letter-spacing:0.000px;-webkit-text-stroke:0.15px #0000ff;">)</span>
<span class="t" style="left:1467.00px;top:878.4px;font-family:'Liberation Mono', monospace;font-size:11.67px;font-weight:400;color:#0000ff;line-height:14px;letter-spacing:0.000px;-webkit-text-stroke:0.15px #0000ff;">,</span>
<span class="t" style="left:1488.00px;top:878.4px;font-family:'Liberation Mono', monospace;font-size:11.67px;font-weight:400;color:#808000;line-height:14px;letter-spacing:0.005px;-webkit-text-stroke:0.15px #808000;">`ORDER_BY`</span>
<span class="t" style="left:1558.00px;top:878.4px;font-family:'Liberation Mono', monospace;font-size:11.67px;font-weight:400;color:#0000ff;line-height:14px;letter-spacing:0.000px;-webkit-text-stroke:0.15px #0000ff;">,</span>
<span class="t" style="left:1572.00px;top:878.4px;font-family:'Liberation Mono', monospace;font-size:11.67px;font-weight:400;color:#000080;line-height:14px;letter-spacing:0.004px;-webkit-text-stroke:0.4px #000080;">LEFT</span>
<span class="t" style="left:1600.00px;top:878.4px;font-family:'Liberation Mono', monospace;font-size:11.67px;font-weight:400;color:#0000ff;line-height:14px;letter-spacing:0.000px;-webkit-text-stroke:0.15px #0000ff;">(</span>
<span class="t" style="left:1607.00px;top:878.4px;font-family:'Liberation Mono', monospace;font-size:11.67px;font-weight:400;color:#808000;line-height:14px;letter-spacing:0.004px;-webkit-text-stroke:0.15px #808000;">`INDICATORS`</span>
<span class="t" style="left:1691.00px;top:878.4px;font-family:'Liberation Mono', monospace;font-size:11.67px;font-weight:400;color:#0000ff;line-height:14px;letter-spacing:0.000px;-webkit-text-stroke:0.15px #0000ff;">,</span>
<span class="t" style="left:1705.00px;top:878.4px;font-family:'Liberation Mono', monospace;font-size:11.67px;font-weight:400;color:#800080;line-height:14px;letter-spacing:0.000px;-webkit-text-stroke:0.15px #800080;">256</span>
<span class="t" style="left:1726.00px;top:878.4px;font-family:'Liberation Mono', monospace;font-size:11.67px;font-weight:400;color:#0000ff;line-height:14px;letter-spacing:0.000px;-webkit-text-stroke:0.15px #0000ff;">)</span>
<span class="t" style="left:1740.00px;top:878.4px;font-family:'Liberation Mono', monospace;font-size:11.67px;font-weight:400;color:#0000ff;line-height:14px;letter-spacing:0.004px;-webkit-text-stroke:0.4px #0000ff;">FROM</span>
<span class="t" style="left:1775.00px;top:878.4px;font-family:'Liberation Mono', monospace;font-size:11.67px;font-weight:400;color:#808000;line-height:14px;letter-spacing:0.004px;-webkit-text-stroke:0.15px #808000;">`nfs_homol_treinam</span>
<span class="t" style="left:11.50px;top:892.4px;font-family:'Liberation Mono', monospace;font-size:11.67px;font-weight:400;color:#808080;line-height:14px;letter-spacing:-0.333px;">162</span>
<span class="t" style="left:53.00px;top:892.4px;font-family:'Liberation Mono', monospace;font-size:11.67px;font-weight:400;color:#0000ff;line-height:14px;letter-spacing:0.003px;-webkit-text-stroke:0.4px #0000ff;">SELECT</span>
<span class="t" style="left:102.00px;top:892.4px;font-family:'Liberation Mono', monospace;font-size:11.67px;font-weight:400;color:#0000ff;line-height:14px;letter-spacing:0.000px;-webkit-text-stroke:0.15px #0000ff;">*</span>
<span class="t" style="left:116.00px;top:892.4px;font-family:'Liberation Mono', monospace;font-size:11.67px;font-weight:400;color:#0000ff;line-height:14px;letter-spacing:0.004px;-webkit-text-stroke:0.4px #0000ff;">FROM</span>
<span class="t" style="left:151.00px;top:892.4px;font-family:'Liberation Mono', monospace;font-size:11.67px;font-weight:400;color:#808000;line-height:14px;letter-spacing:0.005px;-webkit-text-stroke:0.15px #808000;">`information_schema`</span>
<span class="t" style="left:291.00px;top:892.4px;font-family:'Liberation Mono', monospace;font-size:11.67px;font-weight:400;color:#0000ff;line-height:14px;letter-spacing:0.000px;-webkit-text-stroke:0.15px #0000ff;">.</span>
<span class="t" style="left:298.00px;top:892.4px;font-family:'Liberation Mono', monospace;font-size:11.67px;font-weight:400;color:#808000;line-height:14px;letter-spacing:0.003px;-webkit-text-stroke:0.15px #808000;">`COLUMNS`</span>
<span class="t" style="left:368.00px;top:892.4px;font-family:'Liberation Mono', monospace;font-size:11.67px;font-weight:400;color:#0000ff;line-height:14px;letter-spacing:0.003px;-webkit-text-stroke:0.4px #0000ff;">WHERE</span>
<span class="t" style="left:410.00px;top:892.4px;font-family:'Liberation Mono', monospace;font-size:11.67px;font-weight:400;color:#808000;line-height:14px;letter-spacing:0.004px;-webkit-text-stroke:0.15px #808000;">TABLE_SCHEMA</span>
<span class="t" style="left:494.00px;top:892.4px;font-family:'Liberation Mono', monospace;font-size:11.67px;font-weight:400;color:#0000ff;line-height:14px;letter-spacing:0.000px;-webkit-text-stroke:0.15px #0000ff;">=</span>
<span class="t" style="left:501.00px;top:892.4px;font-family:'Liberation Mono', monospace;font-size:11.67px;font-weight:400;color:#008000;line-height:14px;letter-spacing:0.005px;-webkit-text-stroke:0.15px #008000;">&#x27;nfs_homol_treinamento_pamela&#x27;</span>
<span class="t" style="left:718.00px;top:892.4px;font-family:'Liberation Mono', monospace;font-size:11.67px;font-weight:400;color:#0000ff;line-height:14px;letter-spacing:0.000px;-webkit-text-stroke:0.4px #0000ff;">AND</span>
<span class="t" style="left:746.00px;top:892.4px;font-family:'Liberation Mono', monospace;font-size:11.67px;font-weight:400;color:#0000ff;line-height:14px;letter-spacing:0.005px;-webkit-text-stroke:0.4px #0000ff;">TABLE_NAME</span>
<span class="t" style="left:816.00px;top:892.4px;font-family:'Liberation Mono', monospace;font-size:11.67px;font-weight:400;color:#0000ff;line-height:14px;letter-spacing:0.000px;-webkit-text-stroke:0.15px #0000ff;">=</span>
<span class="t" style="left:823.00px;top:892.4px;font-family:'Liberation Mono', monospace;font-size:11.67px;font-weight:400;color:#008000;line-height:14px;letter-spacing:0.005px;-webkit-text-stroke:0.15px #008000;">&#x27;nfs_core_ds_tabela_campo&#x27;</span>
<span class="t" style="left:1012.00px;top:892.4px;font-family:'Liberation Mono', monospace;font-size:11.67px;font-weight:400;color:#0000ff;line-height:14px;letter-spacing:0.003px;-webkit-text-stroke:0.4px #0000ff;">ORDER</span>
<span class="t" style="left:1054.00px;top:892.4px;font-family:'Liberation Mono', monospace;font-size:11.67px;font-weight:400;color:#0000ff;line-height:14px;letter-spacing:0.000px;-webkit-text-stroke:0.4px #0000ff;">BY</span>
<span class="t" style="left:1075.00px;top:892.4px;font-family:'Liberation Mono', monospace;font-size:11.67px;font-weight:400;color:#808000;line-height:14px;letter-spacing:0.005px;-webkit-text-stroke:0.15px #808000;">ORDINAL_POSITION</span>
<span class="t" style="left:1187.00px;top:892.4px;font-family:'Liberation Mono', monospace;font-size:11.67px;font-weight:400;color:#0000ff;line-height:14px;letter-spacing:0.000px;-webkit-text-stroke:0.15px #0000ff;">;</span>
<span class="t" style="left:11.50px;top:906.4px;font-family:'Liberation Mono', monospace;font-size:11.67px;font-weight:400;color:#808080;line-height:14px;letter-spacing:-0.333px;">163</span>
<span class="t" style="left:53.00px;top:906.4px;font-family:'Liberation Mono', monospace;font-size:11.67px;font-weight:400;color:#0000ff;line-height:14px;letter-spacing:0.004px;-webkit-text-stroke:0.4px #0000ff;">SHOW</span>
<span class="t" style="left:88.00px;top:906.4px;font-family:'Liberation Mono', monospace;font-size:11.67px;font-weight:400;color:#0000ff;line-height:14px;letter-spacing:0.004px;-webkit-text-stroke:0.4px #0000ff;">INDEXES</span>
<span class="t" style="left:144.00px;top:906.4px;font-family:'Liberation Mono', monospace;font-size:11.67px;font-weight:400;color:#0000ff;line-height:14px;letter-spacing:0.004px;-webkit-text-stroke:0.4px #0000ff;">FROM</span>
<span class="t" style="left:179.00px;top:906.4px;font-family:'Liberation Mono', monospace;font-size:11.67px;font-weight:400;color:#808000;line-height:14px;letter-spacing:0.005px;-webkit-text-stroke:0.15px #808000;">`nfs_core_ds_tabela_campo`</span>
<span class="t" style="left:368.00px;top:906.4px;font-family:'Liberation Mono', monospace;font-size:11.67px;font-weight:400;color:#0000ff;line-height:14px;letter-spacing:0.004px;-webkit-text-stroke:0.4px #0000ff;">FROM</span>
<span class="t" style="left:403.00px;top:906.4px;font-family:'Liberation Mono', monospace;font-size:11.67px;font-weight:400;color:#808000;line-height:14px;letter-spacing:0.005px;-webkit-text-stroke:0.15px #808000;">`nfs_homol_treinamento_pamela`</span>
<span class="t" style="left:613.00px;top:906.4px;font-family:'Liberation Mono', monospace;font-size:11.67px;font-weight:400;color:#0000ff;line-height:14px;letter-spacing:0.000px;-webkit-text-stroke:0.15px #0000ff;">;</span>
<span class="t" style="left:11.50px;top:920.4px;font-family:'Liberation Mono', monospace;font-size:11.67px;font-weight:400;color:#808080;line-height:14px;letter-spacing:-0.333px;">164</span>
<span class="t" style="left:53.00px;top:920.4px;font-family:'Liberation Mono', monospace;font-size:11.67px;font-weight:400;color:#0000ff;line-height:14px;letter-spacing:0.003px;-webkit-text-stroke:0.4px #0000ff;">SELECT</span>
<span class="t" style="left:102.00px;top:920.4px;font-family:'Liberation Mono', monospace;font-size:11.67px;font-weight:400;color:#0000ff;line-height:14px;letter-spacing:0.000px;-webkit-text-stroke:0.15px #0000ff;">*</span>
<span class="t" style="left:116.00px;top:920.4px;font-family:'Liberation Mono', monospace;font-size:11.67px;font-weight:400;color:#0000ff;line-height:14px;letter-spacing:0.004px;-webkit-text-stroke:0.4px #0000ff;">FROM</span>
<span class="t" style="left:151.00px;top:920.4px;font-family:'Liberation Mono', monospace;font-size:11.67px;font-weight:400;color:#808000;line-height:14px;letter-spacing:0.004px;-webkit-text-stroke:0.15px #808000;">information_schema</span>
<span class="t" style="left:277.00px;top:920.4px;font-family:'Liberation Mono', monospace;font-size:11.67px;font-weight:400;color:#0000ff;line-height:14px;letter-spacing:0.000px;-webkit-text-stroke:0.15px #0000ff;">.</span>
<span class="t" style="left:284.00px;top:920.4px;font-family:'Liberation Mono', monospace;font-size:11.67px;font-weight:400;color:#808000;line-height:14px;letter-spacing:0.005px;-webkit-text-stroke:0.15px #808000;">REFERENTIAL_CONSTRAINTS</span>
<span class="t" style="left:452.00px;top:920.4px;font-family:'Liberation Mono', monospace;font-size:11.67px;font-weight:400;color:#0000ff;line-height:14px;letter-spacing:0.003px;-webkit-text-stroke:0.4px #0000ff;">WHERE</span>
<span class="t" style="left:508.00px;top:920.4px;font-family:'Liberation Mono', monospace;font-size:11.67px;font-weight:400;color:#0000ff;line-height:14px;letter-spacing:0.005px;-webkit-text-stroke:0.4px #0000ff;">CONSTRAINT_SCHEMA</span>
<span class="t" style="left:627.00px;top:920.4px;font-family:'Liberation Mono', monospace;font-size:11.67px;font-weight:400;color:#0000ff;line-height:14px;letter-spacing:0.000px;-webkit-text-stroke:0.15px #0000ff;">=</span>
<span class="t" style="left:634.00px;top:920.4px;font-family:'Liberation Mono', monospace;font-size:11.67px;font-weight:400;color:#008000;line-height:14px;letter-spacing:0.005px;-webkit-text-stroke:0.15px #008000;">&#x27;nfs_homol_treinamento_pamela&#x27;</span>
<span class="t" style="left:865.00px;top:920.4px;font-family:'Liberation Mono', monospace;font-size:11.67px;font-weight:400;color:#0000ff;line-height:14px;letter-spacing:0.000px;-webkit-text-stroke:0.4px #0000ff;">AND</span>
<span class="t" style="left:893.00px;top:920.4px;font-family:'Liberation Mono', monospace;font-size:11.67px;font-weight:400;color:#0000ff;line-height:14px;letter-spacing:0.005px;-webkit-text-stroke:0.4px #0000ff;">TABLE_NAME</span>
<span class="t" style="left:963.00px;top:920.4px;font-family:'Liberation Mono', monospace;font-size:11.67px;font-weight:400;color:#0000ff;line-height:14px;letter-spacing:0.000px;-webkit-text-stroke:0.15px #0000ff;">=</span>
<span class="t" style="left:970.00px;top:920.4px;font-family:'Liberation Mono', monospace;font-size:11.67px;font-weight:400;color:#008000;line-height:14px;letter-spacing:0.005px;-webkit-text-stroke:0.15px #008000;">&#x27;nfs_core_ds_tabela_campo&#x27;</span>
<span class="t" style="left:1173.00px;top:920.4px;font-family:'Liberation Mono', monospace;font-size:11.67px;font-weight:400;color:#0000ff;line-height:14px;letter-spacing:0.000px;-webkit-text-stroke:0.4px #0000ff;">AND</span>
<span class="t" style="left:1201.00px;top:920.4px;font-family:'Liberation Mono', monospace;font-size:11.67px;font-weight:400;color:#808000;line-height:14px;letter-spacing:0.004px;-webkit-text-stroke:0.15px #808000;">REFERENCED_TABLE_NAME</span>
<span class="t" style="left:1355.00px;top:920.4px;font-family:'Liberation Mono', monospace;font-size:11.67px;font-weight:400;color:#0000ff;line-height:14px;letter-spacing:0.000px;-webkit-text-stroke:0.4px #0000ff;">IS</span>
<span class="t" style="left:1376.00px;top:920.4px;font-family:'Liberation Mono', monospace;font-size:11.67px;font-weight:400;color:#0000ff;line-height:14px;letter-spacing:0.000px;-webkit-text-stroke:0.4px #0000ff;">NOT</span>
<span class="t" style="left:1404.00px;top:920.4px;font-family:'Liberation Mono', monospace;font-size:11.67px;font-weight:400;color:#0000ff;line-height:14px;letter-spacing:0.004px;-webkit-text-stroke:0.4px #0000ff;">NULL</span>
<span class="t" style="left:1432.00px;top:920.4px;font-family:'Liberation Mono', monospace;font-size:11.67px;font-weight:400;color:#0000ff;line-height:14px;letter-spacing:0.000px;-webkit-text-stroke:0.15px #0000ff;">;</span>
<span class="t" style="left:11.50px;top:934.4px;font-family:'Liberation Mono', monospace;font-size:11.67px;font-weight:400;color:#808080;line-height:14px;letter-spacing:-0.333px;">165</span>
<span class="t" style="left:53.00px;top:934.4px;font-family:'Liberation Mono', monospace;font-size:11.67px;font-weight:400;color:#0000ff;line-height:14px;letter-spacing:0.003px;-webkit-text-stroke:0.4px #0000ff;">SELECT</span>
<span class="t" style="left:102.00px;top:934.4px;font-family:'Liberation Mono', monospace;font-size:11.67px;font-weight:400;color:#0000ff;line-height:14px;letter-spacing:0.000px;-webkit-text-stroke:0.15px #0000ff;">*</span>
<span class="t" style="left:116.00px;top:934.4px;font-family:'Liberation Mono', monospace;font-size:11.67px;font-weight:400;color:#0000ff;line-height:14px;letter-spacing:0.004px;-webkit-text-stroke:0.4px #0000ff;">FROM</span>
<span class="t" style="left:151.00px;top:934.4px;font-family:'Liberation Mono', monospace;font-size:11.67px;font-weight:400;color:#808000;line-height:14px;letter-spacing:0.004px;-webkit-text-stroke:0.15px #808000;">information_schema</span>
<span class="t" style="left:277.00px;top:934.4px;font-family:'Liberation Mono', monospace;font-size:11.67px;font-weight:400;color:#0000ff;line-height:14px;letter-spacing:0.000px;-webkit-text-stroke:0.15px #0000ff;">.</span>
<span class="t" style="left:284.00px;top:934.4px;font-family:'Liberation Mono', monospace;font-size:11.67px;font-weight:400;color:#808000;line-height:14px;letter-spacing:0.005px;-webkit-text-stroke:0.15px #808000;">KEY_COLUMN_USAGE</span>
<span class="t" style="left:403.00px;top:934.4px;font-family:'Liberation Mono', monospace;font-size:11.67px;font-weight:400;color:#0000ff;line-height:14px;letter-spacing:0.003px;-webkit-text-stroke:0.4px #0000ff;">WHERE</span>
<span class="t" style="left:459.00px;top:934.4px;font-family:'Liberation Mono', monospace;font-size:11.67px;font-weight:400;color:#808000;line-height:14px;letter-spacing:0.004px;-webkit-text-stroke:0.15px #808000;">TABLE_SCHEMA</span>
<span class="t" style="left:543.00px;top:934.4px;font-family:'Liberation Mono', monospace;font-size:11.67px;font-weight:400;color:#0000ff;line-height:14px;letter-spacing:0.000px;-webkit-text-stroke:0.15px #0000ff;">=</span>
<span class="t" style="left:550.00px;top:934.4px;font-family:'Liberation Mono', monospace;font-size:11.67px;font-weight:400;color:#008000;line-height:14px;letter-spacing:0.005px;-webkit-text-stroke:0.15px #008000;">&#x27;nfs_homol_treinamento_pamela&#x27;</span>
<span class="t" style="left:781.00px;top:934.4px;font-family:'Liberation Mono', monospace;font-size:11.67px;font-weight:400;color:#0000ff;line-height:14px;letter-spacing:0.000px;-webkit-text-stroke:0.4px #0000ff;">AND</span>
<span class="t" style="left:809.00px;top:934.4px;font-family:'Liberation Mono', monospace;font-size:11.67px;font-weight:400;color:#0000ff;line-height:14px;letter-spacing:0.005px;-webkit-text-stroke:0.4px #0000ff;">TABLE_NAME</span>
<span class="t" style="left:879.00px;top:934.4px;font-family:'Liberation Mono', monospace;font-size:11.67px;font-weight:400;color:#0000ff;line-height:14px;letter-spacing:0.000px;-webkit-text-stroke:0.15px #0000ff;">=</span>
<span class="t" style="left:886.00px;top:934.4px;font-family:'Liberation Mono', monospace;font-size:11.67px;font-weight:400;color:#008000;line-height:14px;letter-spacing:0.005px;-webkit-text-stroke:0.15px #008000;">&#x27;nfs_core_ds_tabela_campo&#x27;</span>
<span class="t" style="left:1089.00px;top:934.4px;font-family:'Liberation Mono', monospace;font-size:11.67px;font-weight:400;color:#0000ff;line-height:14px;letter-spacing:0.000px;-webkit-text-stroke:0.4px #0000ff;">AND</span>
<span class="t" style="left:1117.00px;top:934.4px;font-family:'Liberation Mono', monospace;font-size:11.67px;font-weight:400;color:#808000;line-height:14px;letter-spacing:0.004px;-webkit-text-stroke:0.15px #808000;">REFERENCED_TABLE_NAME</span>
<span class="t" style="left:1271.00px;top:934.4px;font-family:'Liberation Mono', monospace;font-size:11.67px;font-weight:400;color:#0000ff;line-height:14px;letter-spacing:0.000px;-webkit-text-stroke:0.4px #0000ff;">IS</span>
<span class="t" style="left:1292.00px;top:934.4px;font-family:'Liberation Mono', monospace;font-size:11.67px;font-weight:400;color:#0000ff;line-height:14px;letter-spacing:0.000px;-webkit-text-stroke:0.4px #0000ff;">NOT</span>
<span class="t" style="left:1320.00px;top:934.4px;font-family:'Liberation Mono', monospace;font-size:11.67px;font-weight:400;color:#0000ff;line-height:14px;letter-spacing:0.004px;-webkit-text-stroke:0.4px #0000ff;">NULL</span>
<span class="t" style="left:1348.00px;top:934.4px;font-family:'Liberation Mono', monospace;font-size:11.67px;font-weight:400;color:#0000ff;line-height:14px;letter-spacing:0.000px;-webkit-text-stroke:0.15px #0000ff;">;</span>
<span class="t" style="left:11.50px;top:948.4px;font-family:'Liberation Mono', monospace;font-size:11.67px;font-weight:400;color:#808080;line-height:14px;letter-spacing:-0.333px;">166</span>
<span class="t" style="left:53.00px;top:948.4px;font-family:'Liberation Mono', monospace;font-size:11.67px;font-weight:400;color:#0000ff;line-height:14px;letter-spacing:0.004px;-webkit-text-stroke:0.4px #0000ff;">SHOW</span>
<span class="t" style="left:88.00px;top:948.4px;font-family:'Liberation Mono', monospace;font-size:11.67px;font-weight:400;color:#0000ff;line-height:14px;letter-spacing:0.003px;-webkit-text-stroke:0.4px #0000ff;">CREATE</span>
<span class="t" style="left:137.00px;top:948.4px;font-family:'Liberation Mono', monospace;font-size:11.67px;font-weight:400;color:#0000ff;line-height:14px;letter-spacing:0.003px;-webkit-text-stroke:0.4px #0000ff;">TABLE</span>
<span class="t" style="left:179.00px;top:948.4px;font-family:'Liberation Mono', monospace;font-size:11.67px;font-weight:400;color:#808000;line-height:14px;letter-spacing:0.005px;-webkit-text-stroke:0.15px #808000;">`nfs_homol_treinamento_pamela`</span>
<span class="t" style="left:389.00px;top:948.4px;font-family:'Liberation Mono', monospace;font-size:11.67px;font-weight:400;color:#0000ff;line-height:14px;letter-spacing:0.000px;-webkit-text-stroke:0.15px #0000ff;">.</span>
<span class="t" style="left:396.00px;top:948.4px;font-family:'Liberation Mono', monospace;font-size:11.67px;font-weight:400;color:#808000;line-height:14px;letter-spacing:0.005px;-webkit-text-stroke:0.15px #808000;">`nfs_core_ds_tabela_campo`</span>
<span class="t" style="left:578.00px;top:948.4px;font-family:'Liberation Mono', monospace;font-size:11.67px;font-weight:400;color:#0000ff;line-height:14px;letter-spacing:0.000px;-webkit-text-stroke:0.15px #0000ff;">;</span>
<span class="t" style="left:11.50px;top:962.4px;font-family:'Liberation Mono', monospace;font-size:11.67px;font-weight:400;color:#808080;line-height:14px;letter-spacing:-0.333px;">167</span>
<span class="t" style="left:53.00px;top:962.4px;font-family:'Liberation Mono', monospace;font-size:11.67px;font-weight:400;color:#0000ff;line-height:14px;letter-spacing:0.003px;-webkit-text-stroke:0.4px #0000ff;">SELECT</span>
<span class="t" style="left:102.00px;top:962.4px;font-family:'Liberation Mono', monospace;font-size:11.67px;font-weight:400;color:#808000;line-height:14px;letter-spacing:0.000px;-webkit-text-stroke:0.15px #808000;">tc</span>
<span class="t" style="left:116.00px;top:962.4px;font-family:'Liberation Mono', monospace;font-size:11.67px;font-weight:400;color:#0000ff;line-height:14px;letter-spacing:0.000px;-webkit-text-stroke:0.15px #0000ff;">.</span>
<span class="t" style="left:123.00px;top:962.4px;font-family:'Liberation Mono', monospace;font-size:11.67px;font-weight:400;color:#0000ff;line-height:14px;letter-spacing:0.004px;-webkit-text-stroke:0.4px #0000ff;">CONSTRAINT_NAME</span>
<span class="t" style="left:228.00px;top:962.4px;font-family:'Liberation Mono', monospace;font-size:11.67px;font-weight:400;color:#0000ff;line-height:14px;letter-spacing:0.000px;-webkit-text-stroke:0.15px #0000ff;">,</span>
<span class="t" style="left:242.00px;top:962.4px;font-family:'Liberation Mono', monospace;font-size:11.67px;font-weight:400;color:#808000;line-height:14px;letter-spacing:0.000px;-webkit-text-stroke:0.15px #808000;">cc</span>
<span class="t" style="left:256.00px;top:962.4px;font-family:'Liberation Mono', monospace;font-size:11.67px;font-weight:400;color:#0000ff;line-height:14px;letter-spacing:0.000px;-webkit-text-stroke:0.15px #0000ff;">.</span>
<span class="t" style="left:263.00px;top:962.4px;font-family:'Liberation Mono', monospace;font-size:11.67px;font-weight:400;color:#808000;line-height:14px;letter-spacing:0.004px;-webkit-text-stroke:0.15px #808000;">CHECK_CLAUSE</span>
<span class="t" style="left:354.00px;top:962.4px;font-family:'Liberation Mono', monospace;font-size:11.67px;font-weight:400;color:#0000ff;line-height:14px;letter-spacing:0.004px;-webkit-text-stroke:0.4px #0000ff;">FROM</span>
<span class="t" style="left:389.00px;top:962.4px;font-family:'Liberation Mono', monospace;font-size:11.67px;font-weight:400;color:#808000;line-height:14px;letter-spacing:0.005px;-webkit-text-stroke:0.15px #808000;">`information_schema`</span>
<span class="t" style="left:529.00px;top:962.4px;font-family:'Liberation Mono', monospace;font-size:11.67px;font-weight:400;color:#0000ff;line-height:14px;letter-spacing:0.000px;-webkit-text-stroke:0.15px #0000ff;">.</span>
<span class="t" style="left:536.00px;top:962.4px;font-family:'Liberation Mono', monospace;font-size:11.67px;font-weight:400;color:#808000;line-height:14px;letter-spacing:0.005px;-webkit-text-stroke:0.15px #808000;">`CHECK_CONSTRAINTS`</span>
<span class="t" style="left:676.00px;top:962.4px;font-family:'Liberation Mono', monospace;font-size:11.67px;font-weight:400;color:#0000ff;line-height:14px;letter-spacing:0.000px;-webkit-text-stroke:0.4px #0000ff;">AS</span>
<span class="t" style="left:697.00px;top:962.4px;font-family:'Liberation Mono', monospace;font-size:11.67px;font-weight:400;color:#808000;line-height:14px;letter-spacing:0.000px;-webkit-text-stroke:0.15px #808000;">cc</span>
<span class="t" style="left:711.00px;top:962.4px;font-family:'Liberation Mono', monospace;font-size:11.67px;font-weight:400;color:#0000ff;line-height:14px;letter-spacing:0.000px;-webkit-text-stroke:0.15px #0000ff;">,</span>
<span class="t" style="left:725.00px;top:962.4px;font-family:'Liberation Mono', monospace;font-size:11.67px;font-weight:400;color:#808000;line-height:14px;letter-spacing:0.005px;-webkit-text-stroke:0.15px #808000;">`information_schema`</span>
<span class="t" style="left:865.00px;top:962.4px;font-family:'Liberation Mono', monospace;font-size:11.67px;font-weight:400;color:#0000ff;line-height:14px;letter-spacing:0.000px;-webkit-text-stroke:0.15px #0000ff;">.</span>
<span class="t" style="left:872.00px;top:962.4px;font-family:'Liberation Mono', monospace;font-size:11.67px;font-weight:400;color:#808000;line-height:14px;letter-spacing:0.005px;-webkit-text-stroke:0.15px #808000;">`TABLE_CONSTRAINTS`</span>
<span class="t" style="left:1012.00px;top:962.4px;font-family:'Liberation Mono', monospace;font-size:11.67px;font-weight:400;color:#0000ff;line-height:14px;letter-spacing:0.000px;-webkit-text-stroke:0.4px #0000ff;">AS</span>
<span class="t" style="left:1033.00px;top:962.4px;font-family:'Liberation Mono', monospace;font-size:11.67px;font-weight:400;color:#808000;line-height:14px;letter-spacing:0.000px;-webkit-text-stroke:0.15px #808000;">tc</span>
<span class="t" style="left:1054.00px;top:962.4px;font-family:'Liberation Mono', monospace;font-size:11.67px;font-weight:400;color:#0000ff;line-height:14px;letter-spacing:0.003px;-webkit-text-stroke:0.4px #0000ff;">WHERE</span>
<span class="t" style="left:1096.00px;top:962.4px;font-family:'Liberation Mono', monospace;font-size:11.67px;font-weight:400;color:#808000;line-height:14px;letter-spacing:0.000px;-webkit-text-stroke:0.15px #808000;">tc</span>
<span class="t" style="left:1110.00px;top:962.4px;font-family:'Liberation Mono', monospace;font-size:11.67px;font-weight:400;color:#0000ff;line-height:14px;letter-spacing:0.000px;-webkit-text-stroke:0.15px #0000ff;">.</span>
<span class="t" style="left:1117.00px;top:962.4px;font-family:'Liberation Mono', monospace;font-size:11.67px;font-weight:400;color:#0000ff;line-height:14px;letter-spacing:0.005px;-webkit-text-stroke:0.4px #0000ff;">CONSTRAINT_SCHEMA</span>
<span class="t" style="left:1236.00px;top:962.4px;font-family:'Liberation Mono', monospace;font-size:11.67px;font-weight:400;color:#0000ff;line-height:14px;letter-spacing:0.000px;-webkit-text-stroke:0.15px #0000ff;">=</span>
<span class="t" style="left:1243.00px;top:962.4px;font-family:'Liberation Mono', monospace;font-size:11.67px;font-weight:400;color:#008000;line-height:14px;letter-spacing:0.005px;-webkit-text-stroke:0.15px #008000;">&#x27;nfs_homol_treinamento_pamela&#x27;</span>
<span class="t" style="left:1460.00px;top:962.4px;font-family:'Liberation Mono', monospace;font-size:11.67px;font-weight:400;color:#0000ff;line-height:14px;letter-spacing:0.000px;-webkit-text-stroke:0.4px #0000ff;">AND</span>
<span class="t" style="left:1488.00px;top:962.4px;font-family:'Liberation Mono', monospace;font-size:11.67px;font-weight:400;color:#808000;line-height:14px;letter-spacing:0.000px;-webkit-text-stroke:0.15px #808000;">tc</span>
<span class="t" style="left:1502.00px;top:962.4px;font-family:'Liberation Mono', monospace;font-size:11.67px;font-weight:400;color:#0000ff;line-height:14px;letter-spacing:0.000px;-webkit-text-stroke:0.15px #0000ff;">.</span>
<span class="t" style="left:1509.00px;top:962.4px;font-family:'Liberation Mono', monospace;font-size:11.67px;font-weight:400;color:#0000ff;line-height:14px;letter-spacing:0.005px;-webkit-text-stroke:0.4px #0000ff;">TABLE_NAME</span>
<span class="t" style="left:1579.00px;top:962.4px;font-family:'Liberation Mono', monospace;font-size:11.67px;font-weight:400;color:#0000ff;line-height:14px;letter-spacing:0.000px;-webkit-text-stroke:0.15px #0000ff;">=</span>
<span class="t" style="left:1586.00px;top:962.4px;font-family:'Liberation Mono', monospace;font-size:11.67px;font-weight:400;color:#008000;line-height:14px;letter-spacing:0.005px;-webkit-text-stroke:0.15px #008000;">&#x27;nfs_core_ds_tabela_campo&#x27;</span>
<span class="t" style="left:1775.00px;top:962.4px;font-family:'Liberation Mono', monospace;font-size:11.67px;font-weight:400;color:#0000ff;line-height:14px;letter-spacing:0.000px;-webkit-text-stroke:0.4px #0000ff;">AND</span>
<span class="t" style="left:1803.00px;top:962.4px;font-family:'Liberation Mono', monospace;font-size:11.67px;font-weight:400;color:#808000;line-height:14px;letter-spacing:0.000px;-webkit-text-stroke:0.15px #808000;">tc</span>
<span class="t" style="left:1817.00px;top:962.4px;font-family:'Liberation Mono', monospace;font-size:11.67px;font-weight:400;color:#0000ff;line-height:14px;letter-spacing:0.000px;-webkit-text-stroke:0.15px #0000ff;">.</span>
<span class="t" style="left:1824.00px;top:962.4px;font-family:'Liberation Mono', monospace;font-size:11.67px;font-weight:400;color:#808000;line-height:14px;letter-spacing:0.004px;-webkit-text-stroke:0.15px #808000;">CONSTRAINT_</span>
<span class="t" style="left:11.50px;top:976.4px;font-family:'Liberation Mono', monospace;font-size:11.67px;font-weight:400;color:#808080;line-height:14px;letter-spacing:-0.333px;">168</span>
<span class="t" style="left:53.00px;top:976.4px;font-family:'Liberation Mono', monospace;font-size:11.67px;font-weight:400;color:#0000ff;line-height:14px;letter-spacing:0.003px;-webkit-text-stroke:0.4px #0000ff;">SELECT</span>
<span class="t" style="left:109.00px;top:976.4px;font-family:'Liberation Mono', monospace;font-size:11.67px;font-weight:400;color:#808000;line-height:14px;letter-spacing:0.005px;-webkit-text-stroke:0.15px #808000;">`TABELA_NOME`</span>
<span class="t" style="left:200.00px;top:976.4px;font-family:'Liberation Mono', monospace;font-size:11.67px;font-weight:400;color:#0000ff;line-height:14px;letter-spacing:0.000px;-webkit-text-stroke:0.15px #0000ff;">,</span>
<span class="t" style="left:221.00px;top:976.4px;font-family:'Liberation Mono', monospace;font-size:11.67px;font-weight:400;color:#808000;line-height:14px;letter-spacing:0.003px;-webkit-text-stroke:0.15px #808000;">`NOME`</span>
<span class="t" style="left:263.00px;top:976.4px;font-family:'Liberation Mono', monospace;font-size:11.67px;font-weight:400;color:#0000ff;line-height:14px;letter-spacing:0.000px;-webkit-text-stroke:0.15px #0000ff;">,</span>
<span class="t" style="left:284.00px;top:976.4px;font-family:'Liberation Mono', monospace;font-size:11.67px;font-weight:400;color:#808000;line-height:14px;letter-spacing:0.003px;-webkit-text-stroke:0.15px #808000;">`SEQ`</span>
<span class="t" style="left:319.00px;top:976.4px;font-family:'Liberation Mono', monospace;font-size:11.67px;font-weight:400;color:#0000ff;line-height:14px;letter-spacing:0.000px;-webkit-text-stroke:0.15px #0000ff;">,</span>
<span class="t" style="left:340.00px;top:976.4px;font-family:'Liberation Mono', monospace;font-size:11.67px;font-weight:400;color:#808000;line-height:14px;letter-spacing:0.003px;-webkit-text-stroke:0.15px #808000;">`SYS`</span>
<span class="t" style="left:375.00px;top:976.4px;font-family:'Liberation Mono', monospace;font-size:11.67px;font-weight:400;color:#0000ff;line-height:14px;letter-spacing:0.000px;-webkit-text-stroke:0.15px #0000ff;">,</span>
<span class="t" style="left:396.00px;top:976.4px;font-family:'Liberation Mono', monospace;font-size:11.67px;font-weight:400;color:#808000;line-height:14px;letter-spacing:0.004px;-webkit-text-stroke:0.15px #808000;">`SEND_XMOVA`</span>
<span class="t" style="left:480.00px;top:976.4px;font-family:'Liberation Mono', monospace;font-size:11.67px;font-weight:400;color:#0000ff;line-height:14px;letter-spacing:0.000px;-webkit-text-stroke:0.15px #0000ff;">,</span>
<span class="t" style="left:501.00px;top:976.4px;font-family:'Liberation Mono', monospace;font-size:11.67px;font-weight:400;color:#808000;line-height:14px;letter-spacing:0.003px;-webkit-text-stroke:0.15px #808000;">`GRID`</span>
<span class="t" style="left:543.00px;top:976.4px;font-family:'Liberation Mono', monospace;font-size:11.67px;font-weight:400;color:#0000ff;line-height:14px;letter-spacing:0.000px;-webkit-text-stroke:0.15px #0000ff;">,</span>
<span class="t" style="left:564.00px;top:976.4px;font-family:'Liberation Mono', monospace;font-size:11.67px;font-weight:400;color:#808000;line-height:14px;letter-spacing:0.005px;-webkit-text-stroke:0.15px #808000;">`GRID_MOBILE`</span>
<span class="t" style="left:655.00px;top:976.4px;font-family:'Liberation Mono', monospace;font-size:11.67px;font-weight:400;color:#0000ff;line-height:14px;letter-spacing:0.000px;-webkit-text-stroke:0.15px #0000ff;">,</span>
<span class="t" style="left:676.00px;top:976.4px;font-family:'Liberation Mono', monospace;font-size:11.67px;font-weight:400;color:#808000;line-height:14px;letter-spacing:0.004px;-webkit-text-stroke:0.15px #808000;">`DESCRICAO`</span>
<span class="t" style="left:753.00px;top:976.4px;font-family:'Liberation Mono', monospace;font-size:11.67px;font-weight:400;color:#0000ff;line-height:14px;letter-spacing:0.000px;-webkit-text-stroke:0.15px #0000ff;">,</span>
<span class="t" style="left:774.00px;top:976.4px;font-family:'Liberation Mono', monospace;font-size:11.67px;font-weight:400;color:#808000;line-height:14px;letter-spacing:0.005px;-webkit-text-stroke:0.15px #808000;">`DESCRICAO_RESUMIDA`</span>
<span class="t" style="left:914.00px;top:976.4px;font-family:'Liberation Mono', monospace;font-size:11.67px;font-weight:400;color:#0000ff;line-height:14px;letter-spacing:0.000px;-webkit-text-stroke:0.15px #0000ff;">,</span>
<span class="t" style="left:935.00px;top:976.4px;font-family:'Liberation Mono', monospace;font-size:11.67px;font-weight:400;color:#808000;line-height:14px;letter-spacing:0.003px;-webkit-text-stroke:0.15px #808000;">`TIPO`</span>
<span class="t" style="left:977.00px;top:976.4px;font-family:'Liberation Mono', monospace;font-size:11.67px;font-weight:400;color:#0000ff;line-height:14px;letter-spacing:0.000px;-webkit-text-stroke:0.15px #0000ff;">,</span>
<span class="t" style="left:998.00px;top:976.4px;font-family:'Liberation Mono', monospace;font-size:11.67px;font-weight:400;color:#808000;line-height:14px;letter-spacing:0.005px;-webkit-text-stroke:0.15px #808000;">`OBRIGATORIO`</span>
<span class="t" style="left:1089.00px;top:976.4px;font-family:'Liberation Mono', monospace;font-size:11.67px;font-weight:400;color:#0000ff;line-height:14px;letter-spacing:0.000px;-webkit-text-stroke:0.15px #0000ff;">,</span>
<span class="t" style="left:1110.00px;top:976.4px;font-family:'Liberation Mono', monospace;font-size:11.67px;font-weight:400;color:#808000;line-height:14px;letter-spacing:0.003px;-webkit-text-stroke:0.15px #808000;">`TAMANHO`</span>
<span class="t" style="left:1173.00px;top:976.4px;font-family:'Liberation Mono', monospace;font-size:11.67px;font-weight:400;color:#0000ff;line-height:14px;letter-spacing:0.000px;-webkit-text-stroke:0.15px #0000ff;">,</span>
<span class="t" style="left:1194.00px;top:976.4px;font-family:'Liberation Mono', monospace;font-size:11.67px;font-weight:400;color:#808000;line-height:14px;letter-spacing:0.005px;-webkit-text-stroke:0.15px #808000;">`TAMANHO_DECIMAL`</span>
<span class="t" style="left:1313.00px;top:976.4px;font-family:'Liberation Mono', monospace;font-size:11.67px;font-weight:400;color:#0000ff;line-height:14px;letter-spacing:0.000px;-webkit-text-stroke:0.15px #0000ff;">,</span>
<span class="t" style="left:1334.00px;top:976.4px;font-family:'Liberation Mono', monospace;font-size:11.67px;font-weight:400;color:#808000;line-height:14px;letter-spacing:0.003px;-webkit-text-stroke:0.15px #808000;">`MASCARA`</span>
<span class="t" style="left:1397.00px;top:976.4px;font-family:'Liberation Mono', monospace;font-size:11.67px;font-weight:400;color:#0000ff;line-height:14px;letter-spacing:0.000px;-webkit-text-stroke:0.15px #0000ff;">,</span>
<span class="t" style="left:1418.00px;top:976.4px;font-family:'Liberation Mono', monospace;font-size:11.67px;font-weight:400;color:#808000;line-height:14px;letter-spacing:0.004px;-webkit-text-stroke:0.15px #808000;">`INSERT_UPDATE`</span>
<span class="t" style="left:1523.00px;top:976.4px;font-family:'Liberation Mono', monospace;font-size:11.67px;font-weight:400;color:#0000ff;line-height:14px;letter-spacing:0.000px;-webkit-text-stroke:0.15px #0000ff;">,</span>
<span class="t" style="left:1544.00px;top:976.4px;font-family:'Liberation Mono', monospace;font-size:11.67px;font-weight:400;color:#808000;line-height:14px;letter-spacing:0.005px;-webkit-text-stroke:0.15px #808000;">`DISABLED`</span>
<span class="t" style="left:1614.00px;top:976.4px;font-family:'Liberation Mono', monospace;font-size:11.67px;font-weight:400;color:#0000ff;line-height:14px;letter-spacing:0.000px;-webkit-text-stroke:0.15px #0000ff;">,</span>
<span class="t" style="left:1635.00px;top:976.4px;font-family:'Liberation Mono', monospace;font-size:11.67px;font-weight:400;color:#808000;line-height:14px;letter-spacing:0.003px;-webkit-text-stroke:0.15px #808000;">`HINT`</span>
<span class="t" style="left:1677.00px;top:976.4px;font-family:'Liberation Mono', monospace;font-size:11.67px;font-weight:400;color:#0000ff;line-height:14px;letter-spacing:0.000px;-webkit-text-stroke:0.15px #0000ff;">,</span>
<span class="t" style="left:1698.00px;top:976.4px;font-family:'Liberation Mono', monospace;font-size:11.67px;font-weight:400;color:#808000;line-height:14px;letter-spacing:0.003px;-webkit-text-stroke:0.15px #808000;">`LINK`</span>
<span class="t" style="left:1740.00px;top:976.4px;font-family:'Liberation Mono', monospace;font-size:11.67px;font-weight:400;color:#0000ff;line-height:14px;letter-spacing:0.000px;-webkit-text-stroke:0.15px #0000ff;">,</span>
<span class="t" style="left:1754.00px;top:976.4px;font-family:'Liberation Mono', monospace;font-size:11.67px;font-weight:400;color:#000080;line-height:14px;letter-spacing:0.004px;-webkit-text-stroke:0.4px #000080;">LEFT</span>
<span class="t" style="left:1782.00px;top:976.4px;font-family:'Liberation Mono', monospace;font-size:11.67px;font-weight:400;color:#0000ff;line-height:14px;letter-spacing:0.000px;-webkit-text-stroke:0.15px #0000ff;">(</span>
<span class="t" style="left:1789.00px;top:976.4px;font-family:'Liberation Mono', monospace;font-size:11.67px;font-weight:400;color:#808000;line-height:14px;letter-spacing:0.004px;-webkit-text-stroke:0.15px #808000;">`VALIDACAO`</span>
<span class="t" style="left:1866.00px;top:976.4px;font-family:'Liberation Mono', monospace;font-size:11.67px;font-weight:400;color:#0000ff;line-height:14px;letter-spacing:0.000px;-webkit-text-stroke:0.15px #0000ff;">,</span>
<span class="t" style="left:1880.00px;top:976.4px;font-family:'Liberation Mono', monospace;font-size:11.67px;font-weight:400;color:#800080;line-height:14px;letter-spacing:0.000px;-webkit-text-stroke:0.15px #800080;">256</span>
<span class="t" style="left:11.50px;top:990.4px;font-family:'Liberation Mono', monospace;font-size:11.67px;font-weight:400;color:#808080;line-height:14px;letter-spacing:-0.333px;">169</span>
<span class="t" style="left:53.00px;top:990.4px;font-family:'Liberation Mono', monospace;font-size:11.67px;font-weight:400;color:#0000ff;line-height:14px;letter-spacing:0.004px;-webkit-text-stroke:0.4px #0000ff;">SHOW</span>
<span class="t" style="left:88.00px;top:990.4px;font-family:'Liberation Mono', monospace;font-size:11.67px;font-weight:400;color:#0000ff;line-height:14px;letter-spacing:0.003px;-webkit-text-stroke:0.4px #0000ff;">TABLE</span>
<span class="t" style="left:130.00px;top:990.4px;font-family:'Liberation Mono', monospace;font-size:11.67px;font-weight:400;color:#0000ff;line-height:14px;letter-spacing:0.003px;-webkit-text-stroke:0.4px #0000ff;">STATUS</span>
<span class="t" style="left:179.00px;top:990.4px;font-family:'Liberation Mono', monospace;font-size:11.67px;font-weight:400;color:#0000ff;line-height:14px;letter-spacing:0.004px;-webkit-text-stroke:0.4px #0000ff;">LIKE</span>
<span class="t" style="left:214.00px;top:990.4px;font-family:'Liberation Mono', monospace;font-size:11.67px;font-weight:400;color:#008000;line-height:14px;letter-spacing:0.005px;-webkit-text-stroke:0.15px #008000;">&#x27;nfs_core_ds_tabela_campo&#x27;</span>
<span class="t" style="left:396.00px;top:990.4px;font-family:'Liberation Mono', monospace;font-size:11.67px;font-weight:400;color:#0000ff;line-height:14px;letter-spacing:0.000px;-webkit-text-stroke:0.15px #0000ff;">;</span>
<span class="t" style="left:706.30px;top:1016px;font-family:'Liberation Sans', sans-serif;font-size:12px;font-weight:400;color:#000;line-height:16px;letter-spacing:-0.380px;">r6 : c2</span>
<span class="t" style="left:833.70px;top:1016px;font-family:'Liberation Sans', sans-serif;font-size:12px;font-weight:400;color:#000;line-height:16px;letter-spacing:-0.264px;">Conectado: 01:06 h</span>
<span class="t" style="left:1027.50px;top:1016px;font-family:'Liberation Sans', sans-serif;font-size:12px;font-weight:400;color:#000;line-height:16px;letter-spacing:-0.338px;">MariaDB or MySQL 8.0.27</span>
<span class="t" style="left:1210.30px;top:1016px;font-family:'Liberation Sans', sans-serif;font-size:12px;font-weight:400;color:#000;line-height:16px;letter-spacing:-0.206px;">Ativo durante: 10 dias, 20:19 h</span>
<span class="t" style="left:1448.00px;top:1016px;font-family:'Liberation Sans', sans-serif;font-size:12px;font-weight:400;color:#000;line-height:16px;letter-spacing:-0.268px;">Tempo de servidor: 09:07</span>
<span class="t" style="left:1642.00px;top:1016px;font-family:'Liberation Sans', sans-serif;font-size:12px;font-weight:400;color:#000;line-height:16px;letter-spacing:-0.168px;">Ocupado.</span>
<span class="t" style="left:1724.30px;top:1041px;font-family:'Liberation Sans', sans-serif;font-size:11px;font-weight:400;color:#000;line-height:16px;letter-spacing:-0.481px;">POR</span>
<span class="t" style="left:1722.60px;top:1057px;font-family:'Liberation Sans', sans-serif;font-size:11px;font-weight:400;color:#000;line-height:16px;letter-spacing:-0.454px;">PTB2</span>
<span class="t" style="left:1876.00px;top:1040px;font-family:'Liberation Sans', sans-serif;font-size:11px;font-weight:400;color:#000;line-height:16px;letter-spacing:0.034px;">09:07</span>
<span class="t" style="left:1845.20px;top:1055.6px;font-family:'Liberation Sans', sans-serif;font-size:11px;font-weight:400;color:#000;line-height:16px;letter-spacing:0.344px;">20/01/2022</span>
</body></html>
